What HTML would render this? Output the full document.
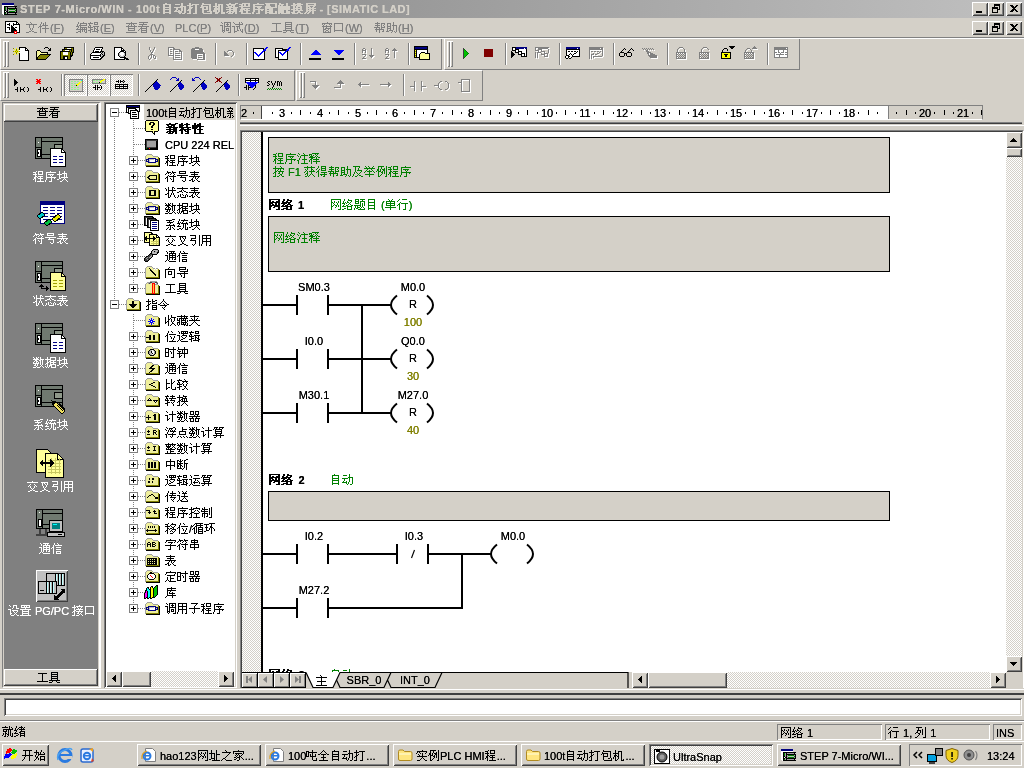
<!DOCTYPE html><html><head><meta charset="utf-8"><title>STEP 7-Micro/WIN</title><style>
html,body{margin:0;padding:0}
html,head,title,style,meta{font-family:"Liberation Sans",sans-serif}
body{width:1024px;height:768px;overflow:hidden;position:relative;background:#d4d0c8;font-family:"Liberation Sans",sans-serif;font-size:11px;line-height:12px;color:#000}
div,svg.i{position:absolute;box-sizing:border-box}
svg.i{overflow:visible}
svg{shape-rendering:crispEdges}
symbol path{stroke:currentColor;stroke-width:1;fill:none}
.c{width:12px;height:12px;vertical-align:top}
.cb{width:13px;height:12px;vertical-align:top}
.t{white-space:nowrap;line-height:12px;height:12px;text-shadow:0 0 0}
.b{font-weight:bold}
.rs{box-shadow:inset 1px 1px #fff,inset -1px -1px #404040,inset 2px 2px #d4d0c8,inset -2px -2px #808080;background:#d4d0c8}
.sk{box-shadow:inset 1px 1px #808080,inset -1px -1px #fff,inset 2px 2px #404040,inset -2px -2px #d4d0c8}
.r1{box-shadow:inset 1px 1px #fff,inset -1px -1px #808080}
.s1{box-shadow:inset 1px 1px #808080,inset -1px -1px #fff}
.dz{background:conic-gradient(#fff 25%,#d4d0c8 0 50%,#fff 0 75%,#d4d0c8 0) 0 0/2px 2px}
.gp{width:3px;height:24px;box-shadow:inset 1px 1px #fff,inset -1px -1px #808080}
.sp{width:2px;height:22px;border-left:1px solid #808080;border-right:1px solid #fff}
.ar{font-family:"Liberation Sans",sans-serif}
u{text-decoration:underline}
#w{left:0;top:0;width:1024px;height:768px;will-change:transform}
</style></head><body><svg width="0" height="0" style="position:absolute"><defs><symbol id="c4e2d" viewBox="0 0 12 12"><path d="M5 0.5h1M5 1.5h1M1 2.5h9M1 3.5h1M5 3.5h1M9 3.5h1M1 4.5h1M5 4.5h1M9 4.5h1M1 5.5h1M5 5.5h1M9 5.5h1M1 6.5h9M1 7.5h1M5 7.5h1M9 7.5h1M5 8.5h1M5 9.5h1M5 10.5h1"/></symbol><symbol id="c4e32" viewBox="0 0 12 12"><path d="M5 0.5h1M2 1.5h7M2 2.5h1M5 2.5h1M8 2.5h1M2 3.5h7M5 4.5h1M1 5.5h9M1 6.5h1M5 6.5h1M9 6.5h1M1 7.5h1M5 7.5h1M9 7.5h1M1 8.5h9M5 9.5h1M5 10.5h1"/></symbol><symbol id="c4e3b" viewBox="0 0 12 12"><path d="M4 0.5h1M5 1.5h1M0 2.5h11M5 3.5h1M5 4.5h1M5 5.5h1M1 6.5h9M5 7.5h1M5 8.5h1M5 9.5h1M0 10.5h11"/></symbol><symbol id="c4e3e" viewBox="0 0 12 12"><path d="M1 0.5h1M4 0.5h1M9 0.5h1M2 1.5h1M5 1.5h1M8 1.5h1M0 2.5h11M3 3.5h1M7 3.5h1M2 4.5h1M5 4.5h1M8 4.5h1M1 5.5h1M3 5.5h5M9 5.5h1M0 6.5h1M5 6.5h1M10 6.5h1M5 7.5h1M1 8.5h9M5 9.5h1M5 10.5h1"/></symbol><symbol id="c4e4b" viewBox="0 0 12 12"><path d="M4 0.5h1M5 1.5h1M1 2.5h9M8 3.5h1M7 4.5h1M6 5.5h1M5 6.5h1M4 7.5h1M2 8.5h2M1 9.5h1M4 9.5h1M0 10.5h1M5 10.5h6"/></symbol><symbol id="c4ea4" viewBox="0 0 12 12"><path d="M5 0.5h1M0 1.5h11M3 3.5h1M7 3.5h1M2 4.5h1M8 4.5h1M1 5.5h1M3 5.5h1M7 5.5h1M9 5.5h1M3 6.5h1M7 6.5h1M4 7.5h1M6 7.5h1M5 8.5h1M3 9.5h2M6 9.5h2M1 10.5h2M8 10.5h3"/></symbol><symbol id="c4ee4" viewBox="0 0 12 12"><path d="M5 0.5h1M5 1.5h1M4 2.5h1M6 2.5h1M3 3.5h1M7 3.5h1M2 4.5h1M5 4.5h1M8 4.5h1M0 5.5h2M6 5.5h1M9 5.5h2M2 6.5h7M7 7.5h1M4 8.5h1M6 8.5h1M5 9.5h1M6 10.5h1"/></symbol><symbol id="c4ef6" viewBox="0 0 12 12"><path d="M3 0.5h1M7 0.5h1M3 1.5h1M5 1.5h1M7 1.5h1M2 2.5h1M5 2.5h1M7 2.5h1M2 3.5h1M4 3.5h6M1 4.5h3M7 4.5h1M0 5.5h1M2 5.5h1M7 5.5h1M2 6.5h1M4 6.5h7M2 7.5h1M7 7.5h1M2 8.5h1M7 8.5h1M2 9.5h1M7 9.5h1M2 10.5h1M7 10.5h1"/></symbol><symbol id="c4f20" viewBox="0 0 12 12"><path d="M3 0.5h1M7 0.5h1M3 1.5h1M7 1.5h1M2 2.5h1M5 2.5h6M2 3.5h1M7 3.5h1M1 4.5h2M4 4.5h7M0 5.5h1M2 5.5h1M6 5.5h1M2 6.5h1M5 6.5h6M2 7.5h1M9 7.5h1M2 8.5h1M6 8.5h1M8 8.5h1M2 9.5h1M7 9.5h1M2 10.5h1M8 10.5h1"/></symbol><symbol id="c4f4d" viewBox="0 0 12 12"><path d="M3 0.5h1M6 0.5h1M3 1.5h1M7 1.5h1M2 2.5h1M2 3.5h1M4 3.5h7M1 4.5h2M0 5.5h1M2 5.5h1M5 5.5h1M9 5.5h1M2 6.5h1M6 6.5h1M9 6.5h1M2 7.5h1M6 7.5h1M8 7.5h1M2 8.5h1M8 8.5h1M2 9.5h1M7 9.5h1M2 10.5h1M4 10.5h7"/></symbol><symbol id="c4f8b" viewBox="0 0 12 12"><path d="M2 0.5h6M10 0.5h1M2 1.5h1M5 1.5h1M10 1.5h1M2 2.5h1M5 2.5h1M8 2.5h1M10 2.5h1M1 3.5h2M4 3.5h1M6 3.5h3M10 3.5h1M1 4.5h2M4 4.5h1M7 4.5h2M10 4.5h1M0 5.5h1M2 5.5h3M6 5.5h1M8 5.5h1M10 5.5h1M2 6.5h1M5 6.5h2M8 6.5h1M10 6.5h1M2 7.5h1M6 7.5h1M8 7.5h1M10 7.5h1M2 8.5h1M5 8.5h1M10 8.5h1M2 9.5h1M4 9.5h1M10 9.5h1M2 10.5h2M9 10.5h2"/></symbol><symbol id="c4fe1" viewBox="0 0 12 12"><path d="M3 0.5h1M6 0.5h1M3 1.5h1M7 1.5h1M2 2.5h1M4 2.5h7M2 3.5h1M1 4.5h2M5 4.5h5M0 5.5h1M2 5.5h1M2 6.5h1M5 6.5h5M2 7.5h1M2 8.5h1M5 8.5h5M2 9.5h1M5 9.5h1M9 9.5h1M2 10.5h1M5 10.5h5"/></symbol><symbol id="c5168" viewBox="0 0 12 12"><path d="M5 0.5h1M4 1.5h1M6 1.5h1M3 2.5h1M7 2.5h1M2 3.5h1M8 3.5h1M0 4.5h2M3 4.5h5M9 4.5h2M5 5.5h1M5 6.5h1M3 7.5h5M5 8.5h1M5 9.5h1M1 10.5h9"/></symbol><symbol id="c5177" viewBox="0 0 12 12"><path d="M2 0.5h7M2 1.5h1M8 1.5h1M2 2.5h7M2 3.5h1M8 3.5h1M2 4.5h7M2 5.5h1M8 5.5h1M2 6.5h7M2 7.5h1M8 7.5h1M0 8.5h11M3 9.5h1M7 9.5h1M0 10.5h3M8 10.5h3"/></symbol><symbol id="c5217" viewBox="0 0 12 12"><path d="M1 0.5h6M10 0.5h1M3 1.5h1M10 1.5h1M3 2.5h1M7 2.5h1M10 2.5h1M2 3.5h4M7 3.5h1M10 3.5h1M2 4.5h1M5 4.5h1M7 4.5h1M10 4.5h1M1 5.5h2M5 5.5h1M7 5.5h1M10 5.5h1M0 6.5h1M3 6.5h2M7 6.5h1M10 6.5h1M4 7.5h1M7 7.5h1M10 7.5h1M3 8.5h1M10 8.5h1M2 9.5h1M10 9.5h1M0 10.5h2M8 10.5h3"/></symbol><symbol id="c5236" viewBox="0 0 12 12"><path d="M3 0.5h1M10 0.5h1M1 1.5h1M3 1.5h1M8 1.5h1M10 1.5h1M1 2.5h6M8 2.5h1M10 2.5h1M0 3.5h1M3 3.5h1M8 3.5h1M10 3.5h1M0 4.5h7M8 4.5h1M10 4.5h1M3 5.5h1M8 5.5h1M10 5.5h1M1 6.5h6M8 6.5h1M10 6.5h1M1 7.5h1M3 7.5h1M6 7.5h1M8 7.5h1M10 7.5h1M1 8.5h1M3 8.5h1M6 8.5h1M10 8.5h1M1 9.5h1M3 9.5h1M5 9.5h2M10 9.5h1M3 10.5h1M8 10.5h3"/></symbol><symbol id="c52a8" viewBox="0 0 12 12"><path d="M7 0.5h1M1 1.5h4M7 1.5h1M7 2.5h1M6 3.5h5M0 4.5h6M7 4.5h1M10 4.5h1M2 5.5h1M7 5.5h1M10 5.5h1M2 6.5h1M7 6.5h1M10 6.5h1M1 7.5h1M4 7.5h1M7 7.5h1M10 7.5h1M0 8.5h5M6 8.5h1M10 8.5h1M4 9.5h1M6 9.5h1M10 9.5h1M5 10.5h1M8 10.5h2"/></symbol><symbol id="c52a9" viewBox="0 0 12 12"><path d="M7 0.5h1M1 1.5h4M7 1.5h1M1 2.5h1M4 2.5h1M7 2.5h1M1 3.5h1M4 3.5h1M6 3.5h5M1 4.5h4M7 4.5h1M10 4.5h1M1 5.5h1M4 5.5h1M7 5.5h1M10 5.5h1M1 6.5h4M7 6.5h1M10 6.5h1M1 7.5h1M4 7.5h1M7 7.5h1M10 7.5h1M1 8.5h1M3 8.5h4M10 8.5h1M0 9.5h3M6 9.5h1M8 9.5h1M10 9.5h1M5 10.5h1M9 10.5h1"/></symbol><symbol id="c5305" viewBox="0 0 12 12"><path d="M2 0.5h1M2 1.5h8M1 2.5h1M9 2.5h1M1 3.5h6M9 3.5h1M0 4.5h1M2 4.5h1M6 4.5h1M9 4.5h1M2 5.5h1M6 5.5h1M9 5.5h1M2 6.5h5M9 6.5h1M2 7.5h1M9 7.5h1M2 8.5h1M7 8.5h2M10 8.5h1M2 9.5h1M10 9.5h1M3 10.5h8"/></symbol><symbol id="c5355" viewBox="0 0 12 12"><path d="M3 0.5h1M7 0.5h1M4 1.5h1M6 1.5h1M1 2.5h9M1 3.5h1M5 3.5h1M9 3.5h1M1 4.5h9M1 5.5h1M5 5.5h1M9 5.5h1M1 6.5h9M5 7.5h1M0 8.5h11M5 9.5h1M5 10.5h1"/></symbol><symbol id="c53c9" viewBox="0 0 12 12"><path d="M2 1.5h7M3 2.5h1M5 2.5h1M8 2.5h1M3 3.5h1M6 3.5h1M8 3.5h1M3 4.5h1M7 4.5h1M4 5.5h1M7 5.5h1M4 6.5h1M6 6.5h1M5 7.5h1M5 8.5h2M3 9.5h2M7 9.5h2M1 10.5h2M9 10.5h2"/></symbol><symbol id="c53ca" viewBox="0 0 12 12"><path d="M1 0.5h7M3 1.5h1M7 1.5h1M3 2.5h1M6 2.5h1M3 3.5h1M6 3.5h1M3 4.5h1M5 4.5h5M3 5.5h1M9 5.5h1M2 6.5h1M4 6.5h1M8 6.5h1M2 7.5h1M5 7.5h1M7 7.5h1M1 8.5h1M6 8.5h1M1 9.5h1M5 9.5h1M7 9.5h2M0 10.5h1M3 10.5h2M9 10.5h2"/></symbol><symbol id="c53e3" viewBox="0 0 12 12"><path d="M1 1.5h9M1 2.5h1M9 2.5h1M1 3.5h1M9 3.5h1M1 4.5h1M9 4.5h1M1 5.5h1M9 5.5h1M1 6.5h1M9 6.5h1M1 7.5h1M9 7.5h1M1 8.5h9M1 9.5h1M9 9.5h1"/></symbol><symbol id="c53f7" viewBox="0 0 12 12"><path d="M2 0.5h7M2 1.5h1M8 1.5h1M2 2.5h7M0 4.5h11M4 5.5h1M3 6.5h6M8 7.5h1M8 8.5h1M5 9.5h1M8 9.5h1M6 10.5h2"/></symbol><symbol id="c5411" viewBox="0 0 12 12"><path d="M4 0.5h1M3 1.5h1M0 2.5h10M0 3.5h1M9 3.5h1M0 4.5h1M3 4.5h4M9 4.5h1M0 5.5h1M3 5.5h1M6 5.5h1M9 5.5h1M0 6.5h1M3 6.5h1M6 6.5h1M9 6.5h1M0 7.5h1M3 7.5h4M9 7.5h1M0 8.5h1M9 8.5h1M0 9.5h1M9 9.5h1M0 10.5h1M7 10.5h3"/></symbol><symbol id="c5428" viewBox="0 0 12 12"><path d="M6 0.5h1M0 1.5h3M6 1.5h1M0 2.5h1M2 2.5h9M0 3.5h1M2 3.5h1M6 3.5h1M0 4.5h1M2 4.5h1M4 4.5h1M6 4.5h1M9 4.5h1M0 5.5h1M2 5.5h1M4 5.5h1M6 5.5h1M9 5.5h1M0 6.5h3M4 6.5h6M6 7.5h1M6 8.5h1M10 8.5h1M6 9.5h1M10 9.5h1M7 10.5h4"/></symbol><symbol id="c5668" viewBox="0 0 12 12"><path d="M1 0.5h4M6 0.5h4M1 1.5h1M4 1.5h1M6 1.5h1M9 1.5h1M1 2.5h1M4 2.5h1M6 2.5h1M9 2.5h1M1 3.5h4M6 3.5h4M5 4.5h1M8 4.5h1M0 5.5h11M3 6.5h1M7 6.5h1M0 7.5h5M6 7.5h5M1 8.5h1M4 8.5h1M6 8.5h1M9 8.5h1M1 9.5h1M4 9.5h1M6 9.5h1M9 9.5h1M1 10.5h4M6 10.5h4"/></symbol><symbol id="c5740" viewBox="0 0 12 12"><path d="M2 0.5h1M7 0.5h1M2 1.5h1M7 1.5h1M2 2.5h1M7 2.5h1M0 3.5h6M7 3.5h1M2 4.5h1M5 4.5h1M7 4.5h4M2 5.5h1M5 5.5h1M7 5.5h1M2 6.5h1M5 6.5h1M7 6.5h1M2 7.5h1M5 7.5h1M7 7.5h1M2 8.5h4M7 8.5h1M0 9.5h2M5 9.5h1M7 9.5h1M3 10.5h8"/></symbol><symbol id="c5757" viewBox="0 0 12 12"><path d="M2 0.5h1M7 0.5h1M2 1.5h1M7 1.5h1M2 2.5h1M5 2.5h5M0 3.5h5M7 3.5h1M9 3.5h1M2 4.5h1M7 4.5h1M9 4.5h1M2 5.5h1M7 5.5h1M9 5.5h1M2 6.5h1M4 6.5h7M2 7.5h2M7 7.5h1M0 8.5h2M6 8.5h1M8 8.5h1M5 9.5h1M9 9.5h1M3 10.5h2M10 10.5h1"/></symbol><symbol id="c5939" viewBox="0 0 12 12"><path d="M5 0.5h1M1 1.5h9M5 2.5h1M2 3.5h1M5 3.5h1M8 3.5h1M3 4.5h1M5 4.5h1M7 4.5h1M0 5.5h11M5 6.5h1M4 7.5h1M6 7.5h1M3 8.5h1M7 8.5h1M2 9.5h1M8 9.5h1M0 10.5h2M9 10.5h2"/></symbol><symbol id="c59cb" viewBox="0 0 12 12"><path d="M2 0.5h1M7 0.5h1M2 1.5h1M7 1.5h1M0 2.5h5M6 2.5h1M9 2.5h1M2 3.5h1M4 3.5h1M6 3.5h1M10 3.5h1M2 4.5h1M4 4.5h7M1 5.5h1M4 5.5h1M1 6.5h1M3 6.5h1M6 6.5h5M2 7.5h2M6 7.5h1M10 7.5h1M2 8.5h1M4 8.5h1M6 8.5h1M10 8.5h1M1 9.5h1M4 9.5h1M6 9.5h5M0 10.5h1M6 10.5h1M10 10.5h1"/></symbol><symbol id="c5b50" viewBox="0 0 12 12"><path d="M2 0.5h7M7 1.5h1M6 2.5h1M5 3.5h1M5 4.5h1M0 5.5h11M5 6.5h1M5 7.5h1M5 8.5h1M3 9.5h1M5 9.5h1M4 10.5h1"/></symbol><symbol id="c5b57" viewBox="0 0 12 12"><path d="M5 0.5h1M1 1.5h10M1 2.5h1M10 2.5h1M0 3.5h1M3 3.5h5M9 3.5h1M6 4.5h1M5 5.5h1M0 6.5h11M5 7.5h1M5 8.5h1M5 9.5h1M3 10.5h3"/></symbol><symbol id="c5b9a" viewBox="0 0 12 12"><path d="M5 0.5h1M1 1.5h10M1 2.5h1M10 2.5h1M0 3.5h1M9 3.5h1M2 4.5h8M5 5.5h1M2 6.5h1M5 6.5h1M2 7.5h1M5 7.5h4M2 8.5h1M5 8.5h1M1 9.5h1M3 9.5h1M5 9.5h1M0 10.5h1M4 10.5h7"/></symbol><symbol id="c5b9e" viewBox="0 0 12 12"><path d="M6 0.5h1M1 1.5h10M1 2.5h1M3 2.5h1M10 2.5h1M0 3.5h1M4 3.5h1M6 3.5h1M9 3.5h1M2 4.5h1M6 4.5h1M3 5.5h1M6 5.5h1M1 6.5h10M6 7.5h1M5 8.5h1M7 8.5h1M4 9.5h1M8 9.5h1M1 10.5h3M9 10.5h2"/></symbol><symbol id="c5bb6" viewBox="0 0 12 12"><path d="M5 0.5h1M0 1.5h11M0 2.5h1M10 2.5h1M0 3.5h1M2 3.5h7M10 3.5h1M3 4.5h1M5 4.5h1M9 4.5h1M2 5.5h1M4 5.5h1M6 5.5h1M8 5.5h1M3 6.5h1M6 6.5h2M1 7.5h2M4 7.5h3M8 7.5h1M3 8.5h1M6 8.5h1M9 8.5h1M1 9.5h2M6 9.5h1M10 9.5h1M4 10.5h2"/></symbol><symbol id="c5bfc" viewBox="0 0 12 12"><path d="M2 0.5h7M2 1.5h1M8 1.5h1M2 2.5h7M10 2.5h1M2 3.5h1M10 3.5h1M3 4.5h8M7 5.5h1M0 6.5h11M3 7.5h1M7 7.5h1M4 8.5h1M7 8.5h1M4 9.5h1M7 9.5h1M6 10.5h2"/></symbol><symbol id="c5c31" viewBox="0 0 12 12"><path d="M3 0.5h1M7 0.5h1M0 1.5h6M7 1.5h1M9 1.5h1M7 2.5h1M10 2.5h1M1 3.5h10M1 4.5h1M4 4.5h1M6 4.5h1M8 4.5h1M1 5.5h4M6 5.5h1M8 5.5h1M3 6.5h1M6 6.5h1M8 6.5h1M1 7.5h1M3 7.5h2M6 7.5h1M8 7.5h1M10 7.5h1M1 8.5h1M3 8.5h1M5 8.5h2M8 8.5h1M10 8.5h1M0 9.5h1M3 9.5h1M6 9.5h1M8 9.5h1M10 9.5h1M2 10.5h2M5 10.5h1M9 10.5h2"/></symbol><symbol id="c5c4f" viewBox="0 0 12 12"><path d="M2 0.5h9M2 1.5h1M10 1.5h1M2 2.5h9M2 3.5h1M4 3.5h1M9 3.5h1M2 4.5h1M5 4.5h1M8 4.5h1M2 5.5h9M2 6.5h1M5 6.5h1M8 6.5h1M2 7.5h9M2 8.5h1M5 8.5h1M8 8.5h1M1 9.5h1M4 9.5h1M8 9.5h1M0 10.5h1M3 10.5h1M8 10.5h1"/></symbol><symbol id="c5de5" viewBox="0 0 12 12"><path d="M1 1.5h9M5 2.5h1M5 3.5h1M5 4.5h1M5 5.5h1M5 6.5h1M5 7.5h1M5 8.5h1M0 9.5h11"/></symbol><symbol id="c5e2e" viewBox="0 0 12 12"><path d="M3 0.5h1M1 1.5h5M7 1.5h4M3 2.5h1M7 2.5h1M10 2.5h1M1 3.5h5M7 3.5h1M9 3.5h1M3 4.5h1M7 4.5h1M10 4.5h1M0 5.5h6M7 5.5h4M2 6.5h1M5 6.5h1M7 6.5h1M1 7.5h9M2 8.5h1M5 8.5h1M9 8.5h1M2 9.5h1M5 9.5h1M8 9.5h2M5 10.5h1"/></symbol><symbol id="c5e8f" viewBox="0 0 12 12"><path d="M5 0.5h1M1 1.5h10M1 2.5h1M1 3.5h1M3 3.5h6M1 4.5h1M5 4.5h1M7 4.5h1M1 5.5h1M6 5.5h1M1 6.5h10M1 7.5h1M6 7.5h1M9 7.5h1M1 8.5h1M6 8.5h1M0 9.5h1M6 9.5h1M0 10.5h1M4 10.5h3"/></symbol><symbol id="c5e93" viewBox="0 0 12 12"><path d="M6 0.5h1M2 1.5h9M2 2.5h1M6 2.5h1M2 3.5h9M2 4.5h1M5 4.5h1M2 5.5h1M4 5.5h1M7 5.5h1M2 6.5h1M4 6.5h6M2 7.5h1M7 7.5h1M2 8.5h9M1 9.5h1M7 9.5h1M0 10.5h1M7 10.5h1"/></symbol><symbol id="c5f00" viewBox="0 0 12 12"><path d="M1 0.5h9M3 1.5h1M7 1.5h1M3 2.5h1M7 2.5h1M3 3.5h1M7 3.5h1M3 4.5h1M7 4.5h1M0 5.5h11M3 6.5h1M7 6.5h1M2 7.5h1M7 7.5h1M2 8.5h1M7 8.5h1M1 9.5h1M7 9.5h1M0 10.5h1M7 10.5h1"/></symbol><symbol id="c5f15" viewBox="0 0 12 12"><path d="M1 0.5h6M10 0.5h1M6 1.5h1M10 1.5h1M6 2.5h1M10 2.5h1M2 3.5h5M10 3.5h1M2 4.5h1M10 4.5h1M1 5.5h6M10 5.5h1M6 6.5h1M10 6.5h1M6 7.5h1M10 7.5h1M6 8.5h1M10 8.5h1M3 9.5h1M5 9.5h1M10 9.5h1M4 10.5h1M10 10.5h1"/></symbol><symbol id="c5f97" viewBox="0 0 12 12"><path d="M2 0.5h1M5 0.5h5M2 1.5h1M5 1.5h1M9 1.5h1M1 2.5h1M5 2.5h5M0 3.5h1M3 3.5h1M5 3.5h1M9 3.5h1M2 4.5h1M5 4.5h5M1 5.5h2M0 6.5h1M2 6.5h1M5 6.5h6M2 7.5h1M8 7.5h1M2 8.5h1M4 8.5h7M2 9.5h1M5 9.5h1M8 9.5h1M2 10.5h1M7 10.5h2"/></symbol><symbol id="c5faa" viewBox="0 0 12 12"><path d="M3 0.5h8M2 1.5h1M4 1.5h1M8 1.5h1M1 2.5h1M4 2.5h7M0 3.5h1M3 3.5h2M8 3.5h1M2 4.5h1M4 4.5h1M6 4.5h5M1 5.5h2M4 5.5h1M6 5.5h1M10 5.5h1M0 6.5h1M2 6.5h1M4 6.5h1M6 6.5h5M2 7.5h1M4 7.5h1M6 7.5h1M10 7.5h1M2 8.5h1M4 8.5h1M6 8.5h5M2 9.5h1M4 9.5h1M6 9.5h1M10 9.5h1M2 10.5h2M6 10.5h5"/></symbol><symbol id="c6001" viewBox="0 0 12 12"><path d="M5 0.5h1M0 1.5h11M5 2.5h1M4 3.5h1M6 3.5h1M2 4.5h3M7 4.5h2M0 5.5h2M5 5.5h1M9 5.5h2M3 7.5h1M5 7.5h1M9 7.5h1M1 8.5h1M3 8.5h1M6 8.5h1M8 8.5h1M10 8.5h1M1 9.5h1M3 9.5h1M8 9.5h1M10 9.5h1M0 10.5h1M4 10.5h5"/></symbol><symbol id="c6027" viewBox="0 0 12 12"><path d="M2 0.5h1M7 0.5h1M2 1.5h1M5 1.5h1M7 1.5h1M0 2.5h1M2 2.5h2M5 2.5h1M7 2.5h1M0 3.5h1M2 3.5h1M4 3.5h7M0 4.5h1M2 4.5h1M4 4.5h1M7 4.5h1M0 5.5h1M2 5.5h2M7 5.5h1M2 6.5h1M5 6.5h5M2 7.5h1M7 7.5h1M2 8.5h1M7 8.5h1M2 9.5h1M7 9.5h1M2 10.5h1M4 10.5h7"/></symbol><symbol id="c6253" viewBox="0 0 12 12"><path d="M2 0.5h1M2 1.5h1M5 1.5h6M0 2.5h5M8 2.5h1M2 3.5h1M8 3.5h1M2 4.5h1M4 4.5h1M8 4.5h1M2 5.5h2M8 5.5h1M1 6.5h2M8 6.5h1M0 7.5h1M2 7.5h1M8 7.5h1M2 8.5h1M8 8.5h1M2 9.5h1M8 9.5h1M0 10.5h3M6 10.5h3"/></symbol><symbol id="c6307" viewBox="0 0 12 12"><path d="M2 0.5h1M6 0.5h1M2 1.5h1M6 1.5h1M9 1.5h2M0 2.5h5M6 2.5h3M2 3.5h1M6 3.5h1M10 3.5h1M2 4.5h1M4 4.5h1M6 4.5h5M2 5.5h2M1 6.5h2M6 6.5h5M0 7.5h1M2 7.5h1M6 7.5h1M10 7.5h1M2 8.5h1M6 8.5h5M2 9.5h1M6 9.5h1M10 9.5h1M0 10.5h3M6 10.5h5"/></symbol><symbol id="c6309" viewBox="0 0 12 12"><path d="M2 0.5h1M7 0.5h1M2 1.5h1M8 1.5h1M0 2.5h11M2 3.5h1M5 3.5h1M7 3.5h1M10 3.5h1M2 4.5h1M4 4.5h1M7 4.5h1M2 5.5h2M5 5.5h6M1 6.5h2M6 6.5h1M9 6.5h1M0 7.5h1M2 7.5h1M5 7.5h2M9 7.5h1M2 8.5h1M7 8.5h2M2 9.5h1M6 9.5h1M8 9.5h1M0 10.5h3M4 10.5h2M9 10.5h2"/></symbol><symbol id="c6362" viewBox="0 0 12 12"><path d="M2 0.5h1M6 0.5h1M2 1.5h1M6 1.5h4M0 2.5h6M8 2.5h1M2 3.5h1M5 3.5h5M2 4.5h1M4 4.5h2M7 4.5h1M9 4.5h1M2 5.5h2M5 5.5h1M7 5.5h1M9 5.5h1M1 6.5h2M4 6.5h7M0 7.5h1M2 7.5h1M7 7.5h1M2 8.5h1M6 8.5h1M8 8.5h1M2 9.5h1M5 9.5h1M9 9.5h1M0 10.5h3M4 10.5h1M10 10.5h1"/></symbol><symbol id="c636e" viewBox="0 0 12 12"><path d="M2 0.5h1M5 0.5h6M2 1.5h1M5 1.5h1M10 1.5h1M0 2.5h6M10 2.5h1M2 3.5h1M5 3.5h6M2 4.5h1M4 4.5h2M8 4.5h1M2 5.5h2M5 5.5h6M1 6.5h2M5 6.5h1M8 6.5h1M0 7.5h1M2 7.5h1M5 7.5h6M2 8.5h1M4 8.5h3M10 8.5h1M0 9.5h1M2 9.5h1M4 9.5h1M6 9.5h1M10 9.5h1M1 10.5h1M3 10.5h1M6 10.5h5"/></symbol><symbol id="c63a5" viewBox="0 0 12 12"><path d="M2 0.5h1M7 0.5h1M2 1.5h1M4 1.5h7M0 2.5h4M5 2.5h1M9 2.5h1M2 3.5h1M6 3.5h1M8 3.5h1M2 4.5h1M4 4.5h7M2 5.5h2M7 5.5h1M1 6.5h2M4 6.5h7M0 7.5h1M2 7.5h1M6 7.5h1M9 7.5h1M2 8.5h1M5 8.5h2M8 8.5h1M2 9.5h1M7 9.5h1M9 9.5h1M0 10.5h3M4 10.5h3M10 10.5h1"/></symbol><symbol id="c63a7" viewBox="0 0 12 12"><path d="M2 0.5h1M7 0.5h1M2 1.5h1M4 1.5h7M0 2.5h5M10 2.5h1M2 3.5h1M6 3.5h1M8 3.5h1M2 4.5h1M5 4.5h1M9 4.5h1M2 5.5h3M10 5.5h1M1 6.5h2M5 6.5h5M0 7.5h1M2 7.5h1M7 7.5h1M2 8.5h1M7 8.5h1M2 9.5h1M7 9.5h1M0 10.5h3M4 10.5h7"/></symbol><symbol id="c6478" viewBox="0 0 12 12"><path d="M2 0.5h1M6 0.5h1M8 0.5h1M2 1.5h1M4 1.5h7M0 2.5h4M6 2.5h1M8 2.5h1M2 3.5h1M5 3.5h5M2 4.5h1M5 4.5h1M9 4.5h1M2 5.5h2M5 5.5h5M0 6.5h3M5 6.5h1M9 6.5h1M2 7.5h9M2 8.5h1M7 8.5h1M0 9.5h1M2 9.5h1M6 9.5h1M8 9.5h1M1 10.5h2M4 10.5h2M9 10.5h2"/></symbol><symbol id="c6536" viewBox="0 0 12 12"><path d="M3 0.5h1M6 0.5h1M3 1.5h1M6 1.5h1M0 2.5h1M3 2.5h1M6 2.5h5M0 3.5h1M3 3.5h1M5 3.5h1M9 3.5h1M0 4.5h1M3 4.5h2M6 4.5h1M9 4.5h1M0 5.5h1M3 5.5h1M6 5.5h1M9 5.5h1M0 6.5h1M2 6.5h2M6 6.5h1M8 6.5h1M0 7.5h2M3 7.5h1M7 7.5h1M0 8.5h1M3 8.5h1M7 8.5h2M3 9.5h1M6 9.5h1M9 9.5h1M3 10.5h1M5 10.5h1M10 10.5h1"/></symbol><symbol id="c6570" viewBox="0 0 12 12"><path d="M0 0.5h1M3 0.5h1M5 0.5h1M7 0.5h1M1 1.5h1M3 1.5h2M7 1.5h1M0 2.5h6M7 2.5h4M2 3.5h2M6 3.5h2M9 3.5h1M1 4.5h1M3 4.5h2M7 4.5h1M9 4.5h1M0 5.5h1M3 5.5h1M5 5.5h1M7 5.5h1M9 5.5h1M0 6.5h6M7 6.5h1M9 6.5h1M2 7.5h1M4 7.5h1M7 7.5h1M9 7.5h1M1 8.5h2M4 8.5h1M8 8.5h1M3 9.5h1M7 9.5h1M9 9.5h1M0 10.5h3M4 10.5h3M10 10.5h1"/></symbol><symbol id="c6574" viewBox="0 0 12 12"><path d="M3 0.5h1M7 0.5h1M0 1.5h11M1 2.5h1M3 2.5h1M5 2.5h1M7 2.5h1M9 2.5h1M1 3.5h5M8 3.5h1M2 4.5h3M7 4.5h1M9 4.5h1M1 5.5h1M3 5.5h1M5 5.5h2M10 5.5h1M1 6.5h9M5 7.5h1M2 8.5h1M5 8.5h4M2 9.5h1M5 9.5h1M0 10.5h11"/></symbol><symbol id="c6587" viewBox="0 0 12 12"><path d="M4 0.5h1M5 1.5h1M0 2.5h11M3 3.5h1M7 3.5h1M3 4.5h1M7 4.5h1M3 5.5h1M7 5.5h1M4 6.5h1M6 6.5h1M4 7.5h1M6 7.5h1M5 8.5h1M3 9.5h2M6 9.5h2M0 10.5h3M8 10.5h3"/></symbol><symbol id="c65ad" viewBox="0 0 12 12"><path d="M3 0.5h1M9 0.5h2M0 1.5h2M3 1.5h1M5 1.5h1M7 1.5h2M0 2.5h1M2 2.5h3M7 2.5h1M0 3.5h1M3 3.5h1M7 3.5h1M0 4.5h6M7 4.5h4M0 5.5h1M2 5.5h2M7 5.5h1M9 5.5h1M0 6.5h2M3 6.5h2M7 6.5h1M9 6.5h1M0 7.5h2M3 7.5h1M5 7.5h1M7 7.5h1M9 7.5h1M0 8.5h1M3 8.5h1M7 8.5h1M9 8.5h1M0 9.5h5M6 9.5h1M9 9.5h1M5 10.5h1M9 10.5h1"/></symbol><symbol id="c65b0" viewBox="0 0 12 12"><path d="M3 0.5h1M9 0.5h2M0 1.5h6M7 1.5h2M1 2.5h1M5 2.5h1M7 2.5h1M2 3.5h1M4 3.5h1M7 3.5h1M0 4.5h6M7 4.5h4M3 5.5h1M7 5.5h1M9 5.5h1M0 6.5h6M7 6.5h1M9 6.5h1M3 7.5h1M7 7.5h1M9 7.5h1M1 8.5h1M3 8.5h1M5 8.5h1M7 8.5h1M9 8.5h1M0 9.5h1M3 9.5h1M6 9.5h1M9 9.5h1M2 10.5h2M5 10.5h1M9 10.5h1"/></symbol><symbol id="c65f6" viewBox="0 0 12 12"><path d="M8 0.5h1M0 1.5h4M8 1.5h1M0 2.5h1M3 2.5h8M0 3.5h1M3 3.5h1M8 3.5h1M0 4.5h1M3 4.5h1M5 4.5h1M8 4.5h1M0 5.5h4M6 5.5h1M8 5.5h1M0 6.5h1M3 6.5h1M6 6.5h1M8 6.5h1M0 7.5h1M3 7.5h1M8 7.5h1M0 8.5h1M3 8.5h1M8 8.5h1M0 9.5h4M8 9.5h1M6 10.5h3"/></symbol><symbol id="c673a" viewBox="0 0 12 12"><path d="M2 0.5h1M2 1.5h1M5 1.5h4M2 2.5h1M5 2.5h1M8 2.5h1M0 3.5h6M8 3.5h1M2 4.5h1M5 4.5h1M8 4.5h1M1 5.5h3M5 5.5h1M8 5.5h1M1 6.5h2M4 6.5h2M8 6.5h1M0 7.5h1M2 7.5h1M5 7.5h1M8 7.5h1M0 8.5h1M2 8.5h1M5 8.5h1M8 8.5h1M2 9.5h1M4 9.5h1M8 9.5h1M10 9.5h1M2 10.5h2M8 10.5h3"/></symbol><symbol id="c67e5" viewBox="0 0 12 12"><path d="M5 0.5h1M0 1.5h11M3 2.5h1M5 2.5h1M7 2.5h1M2 3.5h1M5 3.5h1M8 3.5h1M0 4.5h11M2 5.5h1M8 5.5h1M2 6.5h7M2 7.5h1M8 7.5h1M2 8.5h7M0 10.5h11"/></symbol><symbol id="c6bd4" viewBox="0 0 12 12"><path d="M1 0.5h1M6 0.5h1M1 1.5h1M6 1.5h1M1 2.5h1M6 2.5h1M9 2.5h1M1 3.5h1M6 3.5h1M8 3.5h1M1 4.5h4M6 4.5h2M1 5.5h1M6 5.5h1M1 6.5h1M6 6.5h1M1 7.5h1M6 7.5h1M1 8.5h1M3 8.5h2M6 8.5h1M10 8.5h1M1 9.5h2M6 9.5h1M10 9.5h1M1 10.5h1M7 10.5h4"/></symbol><symbol id="c6ce8" viewBox="0 0 12 12"><path d="M1 0.5h1M6 0.5h1M2 1.5h1M7 1.5h1M0 2.5h1M4 2.5h7M1 3.5h1M3 3.5h1M7 3.5h1M3 4.5h1M7 4.5h1M2 5.5h1M7 5.5h1M2 6.5h1M5 6.5h5M0 7.5h2M7 7.5h1M1 8.5h1M7 8.5h1M1 9.5h1M7 9.5h1M1 10.5h1M4 10.5h7"/></symbol><symbol id="c6d6e" viewBox="0 0 12 12"><path d="M1 0.5h1M8 0.5h2M2 1.5h1M4 1.5h4M10 1.5h1M0 2.5h1M4 2.5h1M6 2.5h1M10 2.5h1M1 3.5h1M3 3.5h1M5 3.5h1M7 3.5h1M9 3.5h1M3 4.5h1M5 4.5h6M2 5.5h1M8 5.5h1M2 6.5h1M7 6.5h1M0 7.5h2M3 7.5h8M1 8.5h1M7 8.5h1M1 9.5h1M5 9.5h1M7 9.5h1M1 10.5h1M6 10.5h1"/></symbol><symbol id="c70b9" viewBox="0 0 12 12"><path d="M5 0.5h1M5 1.5h1M5 2.5h5M5 3.5h1M2 4.5h7M2 5.5h1M8 5.5h1M2 6.5h1M8 6.5h1M2 7.5h7M1 9.5h1M3 9.5h1M6 9.5h1M9 9.5h1M0 10.5h1M4 10.5h1M7 10.5h1M10 10.5h1"/></symbol><symbol id="c7279" viewBox="0 0 12 12"><path d="M2 0.5h1M7 0.5h1M0 1.5h1M2 1.5h1M5 1.5h5M0 2.5h4M7 2.5h1M0 3.5h1M2 3.5h1M7 3.5h1M0 4.5h1M2 4.5h1M4 4.5h7M2 5.5h2M8 5.5h1M1 6.5h2M4 6.5h7M0 7.5h1M2 7.5h1M5 7.5h1M8 7.5h1M2 8.5h1M6 8.5h1M8 8.5h1M2 9.5h1M8 9.5h1M2 10.5h1M6 10.5h3"/></symbol><symbol id="c72b6" viewBox="0 0 12 12"><path d="M3 0.5h1M7 0.5h2M0 1.5h1M3 1.5h1M7 1.5h1M9 1.5h1M1 2.5h1M3 2.5h1M7 2.5h1M1 3.5h1M3 3.5h8M3 4.5h1M7 4.5h1M3 5.5h1M7 5.5h1M2 6.5h2M6 6.5h1M8 6.5h1M0 7.5h2M3 7.5h1M6 7.5h1M8 7.5h1M3 8.5h1M5 8.5h1M9 8.5h1M3 9.5h1M5 9.5h1M9 9.5h1M3 10.5h2M10 10.5h1"/></symbol><symbol id="c73af" viewBox="0 0 12 12"><path d="M5 0.5h6M0 1.5h5M7 1.5h1M2 2.5h1M7 2.5h1M2 3.5h1M6 3.5h2M1 4.5h3M6 4.5h3M2 5.5h1M5 5.5h1M7 5.5h1M9 5.5h1M2 6.5h1M5 6.5h1M7 6.5h1M10 6.5h1M2 7.5h3M7 7.5h1M10 7.5h1M0 8.5h2M7 8.5h1M7 9.5h1M7 10.5h1"/></symbol><symbol id="c7528" viewBox="0 0 12 12"><path d="M1 0.5h9M1 1.5h1M5 1.5h1M9 1.5h1M1 2.5h1M5 2.5h1M9 2.5h1M1 3.5h9M1 4.5h1M5 4.5h1M9 4.5h1M1 5.5h1M5 5.5h1M9 5.5h1M1 6.5h9M1 7.5h1M5 7.5h1M9 7.5h1M1 8.5h1M5 8.5h1M9 8.5h1M0 9.5h1M5 9.5h1M9 9.5h1M0 10.5h1M5 10.5h1M8 10.5h2"/></symbol><symbol id="c76ee" viewBox="0 0 12 12"><path d="M2 0.5h7M2 1.5h1M8 1.5h1M2 2.5h1M8 2.5h1M2 3.5h7M2 4.5h1M8 4.5h1M2 5.5h1M8 5.5h1M2 6.5h7M2 7.5h1M8 7.5h1M2 8.5h1M8 8.5h1M2 9.5h7M2 10.5h1M8 10.5h1"/></symbol><symbol id="c770b" viewBox="0 0 12 12"><path d="M1 0.5h9M5 1.5h1M1 2.5h8M4 3.5h1M0 4.5h11M3 5.5h1M8 5.5h1M2 6.5h7M1 7.5h1M3 7.5h1M8 7.5h1M0 8.5h1M3 8.5h6M3 9.5h1M8 9.5h1M3 10.5h6"/></symbol><symbol id="c79fb" viewBox="0 0 12 12"><path d="M3 0.5h1M7 0.5h1M0 1.5h3M6 1.5h5M2 2.5h1M5 2.5h1M10 2.5h1M0 3.5h5M6 3.5h1M9 3.5h1M2 4.5h1M7 4.5h2M2 5.5h2M5 5.5h2M8 5.5h1M2 6.5h1M4 6.5h1M7 6.5h4M1 7.5h2M6 7.5h1M10 7.5h1M0 8.5h1M2 8.5h1M5 8.5h1M7 8.5h1M9 8.5h1M2 9.5h1M8 9.5h1M2 10.5h1M5 10.5h3"/></symbol><symbol id="c7a0b" viewBox="0 0 12 12"><path d="M3 0.5h1M5 0.5h5M0 1.5h3M5 1.5h1M9 1.5h1M2 2.5h1M5 2.5h1M9 2.5h1M0 3.5h4M5 3.5h5M2 4.5h1M2 5.5h2M5 5.5h5M1 6.5h2M4 6.5h1M7 6.5h1M1 7.5h2M5 7.5h5M0 8.5h1M2 8.5h1M7 8.5h1M2 9.5h1M7 9.5h1M2 10.5h1M4 10.5h7"/></symbol><symbol id="c7a97" viewBox="0 0 12 12"><path d="M6 0.5h1M1 1.5h10M1 2.5h1M3 2.5h1M8 2.5h1M10 2.5h1M2 3.5h1M5 3.5h1M9 3.5h1M1 4.5h10M2 5.5h1M5 5.5h1M9 5.5h1M2 6.5h1M4 6.5h6M2 7.5h3M7 7.5h1M9 7.5h1M2 8.5h1M5 8.5h2M9 8.5h1M2 9.5h1M4 9.5h1M7 9.5h1M9 9.5h1M2 10.5h8"/></symbol><symbol id="c7b26" viewBox="0 0 12 12"><path d="M2 0.5h1M7 0.5h1M2 1.5h4M7 1.5h4M1 2.5h1M3 2.5h1M6 2.5h1M8 2.5h1M0 3.5h1M5 3.5h1M9 3.5h1M3 4.5h1M8 4.5h1M2 5.5h1M4 5.5h7M1 6.5h2M8 6.5h1M0 7.5h1M2 7.5h1M5 7.5h1M8 7.5h1M2 8.5h1M6 8.5h1M8 8.5h1M2 9.5h1M8 9.5h1M2 10.5h1M7 10.5h2"/></symbol><symbol id="c7b97" viewBox="0 0 12 12"><path d="M1 0.5h4M6 0.5h5M1 1.5h1M3 1.5h1M6 1.5h1M9 1.5h1M0 2.5h1M2 2.5h7M2 3.5h1M8 3.5h1M2 4.5h7M2 5.5h1M8 5.5h1M2 6.5h7M3 7.5h1M7 7.5h1M0 8.5h11M3 9.5h1M7 9.5h1M1 10.5h2M7 10.5h1"/></symbol><symbol id="c7cfb" viewBox="0 0 12 12"><path d="M7 0.5h3M1 1.5h6M4 2.5h1M8 2.5h1M2 3.5h6M5 4.5h1M4 5.5h1M8 5.5h1M1 6.5h9M5 7.5h1M9 7.5h1M3 8.5h1M5 8.5h1M7 8.5h1M2 9.5h1M5 9.5h1M8 9.5h1M1 10.5h1M4 10.5h2M9 10.5h1"/></symbol><symbol id="c7edc" viewBox="0 0 12 12"><path d="M2 0.5h1M6 0.5h1M2 1.5h1M6 1.5h4M1 2.5h1M5 2.5h1M9 2.5h1M1 3.5h1M3 3.5h1M5 3.5h2M8 3.5h1M0 4.5h3M4 4.5h1M7 4.5h1M2 5.5h1M6 5.5h1M8 5.5h1M1 6.5h1M4 6.5h2M9 6.5h2M0 7.5h4M5 7.5h5M5 8.5h1M9 8.5h1M2 9.5h2M5 9.5h1M9 9.5h1M0 10.5h2M5 10.5h5"/></symbol><symbol id="c7edf" viewBox="0 0 12 12"><path d="M2 0.5h1M7 0.5h1M2 1.5h1M4 1.5h7M1 2.5h1M6 2.5h1M1 3.5h1M3 3.5h1M5 3.5h1M9 3.5h1M0 4.5h3M4 4.5h7M2 5.5h1M6 5.5h1M8 5.5h1M10 5.5h1M1 6.5h1M6 6.5h1M8 6.5h1M0 7.5h4M6 7.5h1M8 7.5h1M6 8.5h1M8 8.5h1M10 8.5h1M2 9.5h2M5 9.5h1M8 9.5h1M10 9.5h1M0 10.5h2M4 10.5h1M8 10.5h3"/></symbol><symbol id="c7eea" viewBox="0 0 12 12"><path d="M2 0.5h1M7 0.5h1M2 1.5h1M5 1.5h4M10 1.5h1M1 2.5h1M4 2.5h1M7 2.5h1M9 2.5h1M1 3.5h1M3 3.5h1M5 3.5h6M0 4.5h3M7 4.5h1M2 5.5h1M6 5.5h5M1 6.5h1M5 6.5h2M10 6.5h1M0 7.5h4M6 7.5h5M4 8.5h1M6 8.5h1M10 8.5h1M2 9.5h2M6 9.5h5M0 10.5h2M6 10.5h1M10 10.5h1"/></symbol><symbol id="c7f16" viewBox="0 0 12 12"><path d="M2 0.5h1M7 0.5h1M2 1.5h1M4 1.5h7M1 2.5h1M4 2.5h1M10 2.5h1M1 3.5h1M3 3.5h8M0 4.5h3M4 4.5h1M2 5.5h1M4 5.5h7M1 6.5h1M4 6.5h1M6 6.5h1M8 6.5h1M10 6.5h1M0 7.5h11M4 8.5h1M6 8.5h1M8 8.5h1M10 8.5h1M2 9.5h3M6 9.5h1M8 9.5h1M10 9.5h1M0 10.5h2M4 10.5h1M9 10.5h2"/></symbol><symbol id="c7f51" viewBox="0 0 12 12"><path d="M1 0.5h10M1 1.5h1M10 1.5h1M1 2.5h1M4 2.5h1M8 2.5h1M10 2.5h1M1 3.5h2M4 3.5h1M6 3.5h1M8 3.5h1M10 3.5h1M1 4.5h1M3 4.5h1M7 4.5h1M10 4.5h1M1 5.5h1M4 5.5h1M7 5.5h1M10 5.5h1M1 6.5h1M3 6.5h1M5 6.5h2M8 6.5h1M10 6.5h1M1 7.5h2M6 7.5h1M8 7.5h1M10 7.5h1M1 8.5h1M5 8.5h1M10 8.5h1M1 9.5h1M10 9.5h1M1 10.5h1M8 10.5h3"/></symbol><symbol id="c7f6e" viewBox="0 0 12 12"><path d="M1 0.5h9M1 1.5h1M4 1.5h1M6 1.5h1M9 1.5h1M1 2.5h9M5 3.5h1M0 4.5h11M2 5.5h1M8 5.5h1M2 6.5h7M2 7.5h1M8 7.5h1M2 8.5h7M2 9.5h1M8 9.5h1M0 10.5h11"/></symbol><symbol id="c81ea" viewBox="0 0 12 12"><path d="M4 0.5h1M2 1.5h7M2 2.5h1M8 2.5h1M2 3.5h1M8 3.5h1M2 4.5h7M2 5.5h1M8 5.5h1M2 6.5h7M2 7.5h1M8 7.5h1M2 8.5h1M8 8.5h1M2 9.5h7M2 10.5h1M8 10.5h1"/></symbol><symbol id="c83b7" viewBox="0 0 12 12"><path d="M3 0.5h1M7 0.5h1M0 1.5h11M3 2.5h1M7 2.5h1M1 3.5h1M3 3.5h1M7 3.5h2M2 4.5h1M7 4.5h1M9 4.5h1M1 5.5h1M3 5.5h1M5 5.5h6M0 6.5h1M3 6.5h1M7 6.5h1M2 7.5h2M7 7.5h1M1 8.5h1M3 8.5h1M6 8.5h1M8 8.5h1M3 9.5h1M5 9.5h1M9 9.5h1M1 10.5h2M4 10.5h1M10 10.5h1"/></symbol><symbol id="c85cf" viewBox="0 0 12 12"><path d="M4 0.5h1M7 0.5h1M0 1.5h11M4 2.5h1M7 2.5h1M9 2.5h1M0 3.5h1M2 3.5h9M0 4.5h1M2 4.5h1M4 4.5h1M6 4.5h1M8 4.5h1M0 5.5h3M4 5.5h5M10 5.5h1M2 6.5h1M4 6.5h1M8 6.5h1M10 6.5h1M0 7.5h3M4 7.5h6M0 8.5h1M2 8.5h1M4 8.5h1M6 8.5h1M8 8.5h1M10 8.5h1M0 9.5h1M2 9.5h1M4 9.5h5M10 9.5h1M1 10.5h1M7 10.5h1M9 10.5h2"/></symbol><symbol id="c884c" viewBox="0 0 12 12"><path d="M2 0.5h1M5 0.5h5M1 1.5h1M0 2.5h1M3 3.5h1M2 4.5h1M4 4.5h7M1 5.5h2M8 5.5h1M0 6.5h1M2 6.5h1M8 6.5h1M2 7.5h1M8 7.5h1M2 8.5h1M8 8.5h1M2 9.5h1M8 9.5h1M2 10.5h1M6 10.5h3"/></symbol><symbol id="c8868" viewBox="0 0 12 12"><path d="M5 0.5h1M1 1.5h9M5 2.5h1M2 3.5h7M5 4.5h1M0 5.5h11M4 6.5h1M6 6.5h1M9 6.5h1M3 7.5h1M6 7.5h1M8 7.5h1M2 8.5h2M7 8.5h1M0 9.5h2M3 9.5h1M5 9.5h1M8 9.5h1M3 10.5h2M9 10.5h2"/></symbol><symbol id="c89e6" viewBox="0 0 12 12"><path d="M1 0.5h1M8 0.5h1M1 1.5h4M8 1.5h1M0 2.5h1M3 2.5h1M8 2.5h1M0 3.5h5M6 3.5h5M0 4.5h1M2 4.5h1M4 4.5h1M6 4.5h1M8 4.5h1M10 4.5h1M0 5.5h5M6 5.5h1M8 5.5h1M10 5.5h1M0 6.5h1M2 6.5h1M4 6.5h1M6 6.5h5M0 7.5h5M8 7.5h1M0 8.5h1M2 8.5h1M4 8.5h1M8 8.5h1M10 8.5h1M0 9.5h1M2 9.5h1M4 9.5h1M8 9.5h3M0 10.5h1M3 10.5h2M6 10.5h3M10 10.5h1"/></symbol><symbol id="c8ba1" viewBox="0 0 12 12"><path d="M1 0.5h1M7 0.5h1M2 1.5h1M7 1.5h1M7 2.5h1M4 3.5h7M0 4.5h3M7 4.5h1M2 5.5h1M7 5.5h1M2 6.5h1M7 6.5h1M2 7.5h1M4 7.5h1M7 7.5h1M2 8.5h2M7 8.5h1M2 9.5h1M7 9.5h1M7 10.5h1"/></symbol><symbol id="c8bbe" viewBox="0 0 12 12"><path d="M1 0.5h1M5 0.5h4M2 1.5h1M5 1.5h1M8 1.5h1M5 2.5h1M8 2.5h1M4 3.5h1M8 3.5h3M0 4.5h3M2 5.5h1M4 5.5h6M2 6.5h1M5 6.5h1M9 6.5h1M2 7.5h1M6 7.5h1M8 7.5h1M2 8.5h2M7 8.5h1M2 9.5h1M6 9.5h1M8 9.5h1M3 10.5h3M9 10.5h2"/></symbol><symbol id="c8bd5" viewBox="0 0 12 12"><path d="M1 0.5h1M7 0.5h1M9 0.5h1M2 1.5h1M7 1.5h1M10 1.5h1M3 2.5h8M7 3.5h1M0 4.5h3M4 4.5h4M2 5.5h1M5 5.5h1M7 5.5h1M2 6.5h1M5 6.5h1M7 6.5h1M2 7.5h1M5 7.5h1M8 7.5h1M10 7.5h1M2 8.5h1M5 8.5h2M8 8.5h1M10 8.5h1M2 9.5h3M9 9.5h2M2 10.5h1M10 10.5h1"/></symbol><symbol id="c8c03" viewBox="0 0 12 12"><path d="M1 0.5h1M4 0.5h7M2 1.5h1M4 1.5h1M7 1.5h1M10 1.5h1M4 2.5h1M6 2.5h3M10 2.5h1M0 3.5h3M4 3.5h1M7 3.5h1M10 3.5h1M2 4.5h1M4 4.5h7M2 5.5h1M4 5.5h1M10 5.5h1M2 6.5h1M4 6.5h1M6 6.5h3M10 6.5h1M2 7.5h1M4 7.5h1M6 7.5h1M8 7.5h1M10 7.5h1M2 8.5h3M6 8.5h3M10 8.5h1M2 9.5h1M4 9.5h1M10 9.5h1M3 10.5h1M8 10.5h3"/></symbol><symbol id="c8f6c" viewBox="0 0 12 12"><path d="M2 0.5h1M7 0.5h1M0 1.5h4M5 1.5h5M1 2.5h1M7 2.5h1M1 3.5h2M4 3.5h7M0 4.5h1M2 4.5h1M6 4.5h1M0 5.5h4M5 5.5h5M2 6.5h1M9 6.5h1M2 7.5h3M6 7.5h1M8 7.5h1M0 8.5h3M7 8.5h1M2 9.5h1M8 9.5h1M2 10.5h1M8 10.5h1"/></symbol><symbol id="c8f83" viewBox="0 0 12 12"><path d="M2 0.5h1M7 0.5h1M0 1.5h5M8 1.5h1M1 2.5h1M5 2.5h6M1 3.5h2M6 3.5h1M9 3.5h1M0 4.5h1M2 4.5h1M5 4.5h1M10 4.5h1M0 5.5h5M6 5.5h1M9 5.5h1M2 6.5h1M6 6.5h1M9 6.5h1M2 7.5h3M7 7.5h2M0 8.5h3M8 8.5h1M2 9.5h1M7 9.5h1M9 9.5h1M2 10.5h1M5 10.5h2M10 10.5h1"/></symbol><symbol id="c8f91" viewBox="0 0 12 12"><path d="M2 0.5h1M6 0.5h4M0 1.5h5M6 1.5h1M9 1.5h1M1 2.5h1M6 2.5h4M1 3.5h2M0 4.5h1M2 4.5h1M5 4.5h6M0 5.5h5M6 5.5h1M9 5.5h1M2 6.5h1M6 6.5h2M9 6.5h1M2 7.5h3M6 7.5h1M8 7.5h2M0 8.5h3M6 8.5h1M9 8.5h2M2 9.5h1M4 9.5h6M2 10.5h1M9 10.5h1"/></symbol><symbol id="c8fd0" viewBox="0 0 12 12"><path d="M1 0.5h1M5 0.5h5M2 1.5h1M2 2.5h1M4 3.5h7M0 4.5h3M6 4.5h1M2 5.5h1M6 5.5h1M8 5.5h1M2 6.5h1M5 6.5h1M9 6.5h1M2 7.5h1M4 7.5h5M10 7.5h1M2 8.5h1M5 8.5h1M10 8.5h1M1 9.5h1M3 9.5h1M0 10.5h1M4 10.5h7"/></symbol><symbol id="c9001" viewBox="0 0 12 12"><path d="M1 0.5h1M5 0.5h1M9 0.5h1M2 1.5h1M6 1.5h1M8 1.5h1M2 2.5h1M5 2.5h5M7 3.5h1M0 4.5h3M7 4.5h1M2 5.5h1M4 5.5h7M2 6.5h1M7 6.5h1M2 7.5h1M6 7.5h1M8 7.5h1M2 8.5h1M5 8.5h1M9 8.5h1M1 9.5h1M3 9.5h2M10 9.5h1M0 10.5h1M4 10.5h7"/></symbol><symbol id="c901a" viewBox="0 0 12 12"><path d="M1 0.5h1M4 0.5h6M2 1.5h1M6 1.5h1M8 1.5h1M2 2.5h1M4 2.5h7M4 3.5h1M7 3.5h1M10 3.5h1M0 4.5h3M4 4.5h7M2 5.5h1M4 5.5h1M7 5.5h1M10 5.5h1M2 6.5h1M4 6.5h7M2 7.5h1M4 7.5h1M7 7.5h1M10 7.5h1M2 8.5h1M4 8.5h1M7 8.5h1M9 8.5h2M1 9.5h1M3 9.5h1M0 10.5h1M4 10.5h7"/></symbol><symbol id="c903b" viewBox="0 0 12 12"><path d="M1 0.5h1M4 0.5h7M2 1.5h1M4 1.5h1M6 1.5h1M8 1.5h1M10 1.5h1M2 2.5h1M4 2.5h7M6 3.5h1M0 4.5h3M5 4.5h5M2 5.5h1M4 5.5h1M9 5.5h1M2 6.5h1M5 6.5h1M8 6.5h1M2 7.5h1M6 7.5h2M2 8.5h1M4 8.5h2M1 9.5h1M3 9.5h1M0 10.5h1M4 10.5h7"/></symbol><symbol id="c914d" viewBox="0 0 12 12"><path d="M0 0.5h5M6 0.5h5M1 1.5h1M3 1.5h1M10 1.5h1M1 2.5h1M3 2.5h1M10 2.5h1M0 3.5h5M10 3.5h1M0 4.5h1M2 4.5h1M4 4.5h1M6 4.5h5M0 5.5h2M3 5.5h2M6 5.5h1M0 6.5h1M4 6.5h1M6 6.5h1M0 7.5h5M6 7.5h1M0 8.5h1M4 8.5h1M6 8.5h1M10 8.5h1M0 9.5h5M6 9.5h1M10 9.5h1M0 10.5h1M4 10.5h1M6 10.5h5"/></symbol><symbol id="c91ca" viewBox="0 0 12 12"><path d="M3 0.5h7M0 1.5h3M6 1.5h1M8 1.5h1M0 2.5h1M2 2.5h1M4 2.5h1M7 2.5h1M1 3.5h3M6 3.5h1M8 3.5h1M0 4.5h6M7 4.5h1M9 4.5h2M2 5.5h2M7 5.5h1M1 6.5h2M4 6.5h6M0 7.5h1M2 7.5h1M7 7.5h1M0 8.5h1M2 8.5h1M4 8.5h7M2 9.5h1M7 9.5h1M2 10.5h1M7 10.5h1"/></symbol><symbol id="c949f" viewBox="0 0 12 12"><path d="M1 0.5h1M7 0.5h1M1 1.5h1M7 1.5h1M1 2.5h10M0 3.5h1M5 3.5h1M7 3.5h1M10 3.5h1M1 4.5h3M5 4.5h1M7 4.5h1M10 4.5h1M2 5.5h1M5 5.5h1M7 5.5h1M10 5.5h1M0 6.5h11M2 7.5h1M7 7.5h1M2 8.5h1M4 8.5h1M7 8.5h1M2 9.5h2M7 9.5h1M2 10.5h1M7 10.5h1"/></symbol><symbol id="c9898" viewBox="0 0 12 12"><path d="M1 0.5h4M6 0.5h5M1 1.5h1M4 1.5h1M8 1.5h1M1 2.5h4M6 2.5h5M1 3.5h1M4 3.5h1M6 3.5h1M10 3.5h1M1 4.5h4M6 4.5h1M8 4.5h1M10 4.5h1M6 5.5h1M8 5.5h1M10 5.5h1M0 6.5h7M8 6.5h1M10 6.5h1M1 7.5h1M3 7.5h1M6 7.5h1M8 7.5h1M1 8.5h1M3 8.5h3M7 8.5h1M9 8.5h1M0 9.5h1M2 9.5h2M6 9.5h1M10 9.5h1M0 10.5h1M4 10.5h7"/></symbol></defs></svg><div id="w"><div class="" style="left:0px;top:0px;width:1024px;height:18px;background:linear-gradient(90deg,#808080,#c0c0c0)"></div><svg class="i" style="left:2px;top:3px" width="16" height="16" viewBox="0 0 16 16"><path stroke="#000080" d="M0 0.5h12M0 1.5h12"/><path stroke="#fff" d="M0 2.5h12M0 3.5h2M0 4.5h2M0 5.5h2M0 6.5h2M0 7.5h2M0 8.5h2M3 8.5h1M0 9.5h2M0 10.5h2M1 11.5h1"/><path stroke="#000" d="M2 3.5h13M2 4.5h1M5 4.5h1M13 4.5h1M2 5.5h1M5 5.5h10M2 6.5h1M5 6.5h1M14 6.5h1M2 7.5h2M5 7.5h1M14 7.5h1M2 8.5h1M4 8.5h2M14 8.5h1M2 9.5h2M5 9.5h10M2 10.5h1M5 10.5h1M13 10.5h1M2 11.5h13"/><path stroke="#008000" d="M3 4.5h1M3 5.5h1M3 6.5h1M7 6.5h6M13 7.5h1M7 8.5h6M3 10.5h1"/><path stroke="#a0a0a0" d="M4 4.5h1M6 4.5h7M4 5.5h1M4 6.5h1M6 6.5h1M13 6.5h1M4 7.5h1M6 7.5h1M6 8.5h1M13 8.5h1M4 9.5h1M4 10.5h1M6 10.5h7"/><path stroke="#c0c0c0" d="M7 7.5h6"/></svg><div class="t b" style="left:20px;top:3px;color:#d4d0c8;" aria-label="STEP 7-Micro/WIN - 100t自动打包机新程序配触摸屏 - [SIMATIC LAD]"><span style="display:inline-block;width:140px;letter-spacing:0.57px">STEP&nbsp;7-Micro/WIN&nbsp;-&nbsp;100t</span><svg class="cb"><use href="#c81ea"/><use href="#c81ea" x="1"/></svg><svg class="cb"><use href="#c52a8"/><use href="#c52a8" x="1"/></svg><svg class="cb"><use href="#c6253"/><use href="#c6253" x="1"/></svg><svg class="cb"><use href="#c5305"/><use href="#c5305" x="1"/></svg><svg class="cb"><use href="#c673a"/><use href="#c673a" x="1"/></svg><svg class="cb"><use href="#c65b0"/><use href="#c65b0" x="1"/></svg><svg class="cb"><use href="#c7a0b"/><use href="#c7a0b" x="1"/></svg><svg class="cb"><use href="#c5e8f"/><use href="#c5e8f" x="1"/></svg><svg class="cb"><use href="#c914d"/><use href="#c914d" x="1"/></svg><svg class="cb"><use href="#c89e6"/><use href="#c89e6" x="1"/></svg><svg class="cb"><use href="#c6478"/><use href="#c6478" x="1"/></svg><svg class="cb"><use href="#c5c4f"/><use href="#c5c4f" x="1"/></svg><span style="display:inline-block;width:94px;letter-spacing:0.43px">&nbsp;-&nbsp;[SIMATIC&nbsp;LAD]</span></div><div class="rs" style="left:972px;top:2px;width:16px;height:14px;"></div><div class="" style="left:976px;top:11px;width:6px;height:2px;background:#000"></div><div class="rs" style="left:988px;top:2px;width:16px;height:14px;"></div><svg class="i" style="left:991px;top:4px" width="10" height="10" viewBox="0 0 10 10" ><path d="M3 0h6v6h-2v-3h-4zM3 2h5M1 3h6v6h-6zM1 5h5" fill="none"/><rect x="3" y="0" width="6" height="2" fill="#000"/><rect x="3" y="0" width="1" height="3" fill="#000"/><rect x="8" y="0" width="1" height="6" fill="#000"/><rect x="7" y="5" width="2" height="1" fill="#000"/><rect x="1" y="3" width="6" height="2" fill="#000"/><rect x="1" y="3" width="1" height="6" fill="#000"/><rect x="6" y="3" width="1" height="6" fill="#000"/><rect x="1" y="8" width="6" height="1" fill="#000"/></svg><div class="rs" style="left:1006px;top:2px;width:16px;height:14px;"></div><svg class="i" style="left:1010px;top:5px" width="8" height="7" viewBox="0 0 8 7" style="shape-rendering:auto;left:1010px;top:5px"><path d="M0 0h2l2 2l2-2h2l-3 3.5l3 3.5h-2l-2-2l-2 2h-2l3-3.5z" fill="#000"/></svg><div class="rs" style="left:972px;top:21px;width:16px;height:14px;"></div><div class="" style="left:976px;top:30px;width:6px;height:2px;background:#000"></div><div class="rs" style="left:988px;top:21px;width:16px;height:14px;"></div><svg class="i" style="left:991px;top:23px" width="10" height="10" viewBox="0 0 10 10" ><path d="M3 0h6v6h-2v-3h-4zM3 2h5M1 3h6v6h-6zM1 5h5" fill="none"/><rect x="3" y="0" width="6" height="2" fill="#000"/><rect x="3" y="0" width="1" height="3" fill="#000"/><rect x="8" y="0" width="1" height="6" fill="#000"/><rect x="7" y="5" width="2" height="1" fill="#000"/><rect x="1" y="3" width="6" height="2" fill="#000"/><rect x="1" y="3" width="1" height="6" fill="#000"/><rect x="6" y="3" width="1" height="6" fill="#000"/><rect x="1" y="8" width="6" height="1" fill="#000"/></svg><div class="rs" style="left:1006px;top:21px;width:16px;height:14px;"></div><svg class="i" style="left:1010px;top:24px" width="8" height="7" viewBox="0 0 8 7" style="shape-rendering:auto;left:1010px;top:24px"><path d="M0 0h2l2 2l2-2h2l-3 3.5l3 3.5h-2l-2-2l-2 2h-2l3-3.5z" fill="#000"/></svg><svg class="i" style="left:5px;top:21px" width="16" height="16" viewBox="0 0 16 16"><path stroke="#000" d="M0 0.5h12M0 1.5h1M11 1.5h2M0 2.5h1M4 2.5h1M8 2.5h1M11 2.5h1M13 2.5h1M0 3.5h1M2 3.5h3M8 3.5h7M0 4.5h1M4 4.5h1M6 4.5h1M8 4.5h1M14 4.5h1M0 5.5h1M6 5.5h2M14 5.5h1M0 6.5h1M2 6.5h3M6 6.5h3M10 6.5h2M14 6.5h1M0 7.5h1M4 7.5h1M6 7.5h4M14 7.5h1M0 8.5h1M4 8.5h1M6 8.5h5M14 8.5h1M0 9.5h1M6 9.5h6M14 9.5h1M0 10.5h1M6 10.5h3M14 10.5h1M0 11.5h9M12 11.5h3"/><path stroke="#fff" d="M1 1.5h10M1 2.5h3M5 2.5h3M9 2.5h2M12 2.5h1M1 3.5h1M5 3.5h3M1 4.5h3M5 4.5h1M7 4.5h1M9 4.5h5M1 5.5h5M8 5.5h6M1 6.5h1M5 6.5h1M9 6.5h1M12 6.5h2M1 7.5h3M5 7.5h1M10 7.5h4M1 8.5h3M5 8.5h1M11 8.5h3M1 9.5h5M12 9.5h2M1 10.5h5M12 10.5h2M10 11.5h1"/><path stroke="#ff0000" d="M9 10.5h3M9 11.5h1M11 11.5h1M9 12.5h3"/></svg><div class="t" style="left:26px;top:22px;color:#808080;" aria-label="文件(F)"><svg class="c"><use href="#c6587"/></svg><svg class="c"><use href="#c4ef6"/></svg>(<u>F</u>)</div><div class="t" style="left:76px;top:22px;color:#808080;" aria-label="编辑(E)"><svg class="c"><use href="#c7f16"/></svg><svg class="c"><use href="#c8f91"/></svg>(<u>E</u>)</div><div class="t" style="left:126px;top:22px;color:#808080;" aria-label="查看(V)"><svg class="c"><use href="#c67e5"/></svg><svg class="c"><use href="#c770b"/></svg>(<u>V</u>)</div><div class="t" style="left:175px;top:22px;color:#808080;">PLC(<u>P</u>)</div><div class="t" style="left:220px;top:22px;color:#808080;" aria-label="调试(D)"><svg class="c"><use href="#c8c03"/></svg><svg class="c"><use href="#c8bd5"/></svg>(<u>D</u>)</div><div class="t" style="left:271px;top:22px;color:#808080;" aria-label="工具(T)"><svg class="c"><use href="#c5de5"/></svg><svg class="c"><use href="#c5177"/></svg>(<u>T</u>)</div><div class="t" style="left:321px;top:22px;color:#808080;" aria-label="窗口(W)"><svg class="c"><use href="#c7a97"/></svg><svg class="c"><use href="#c53e3"/></svg>(<u>W</u>)</div><div class="t" style="left:374px;top:22px;color:#808080;" aria-label="帮助(H)"><svg class="c"><use href="#c5e2e"/></svg><svg class="c"><use href="#c52a9"/></svg>(<u>H</u>)</div><div class="" style="left:0px;top:37px;width:1024px;height:1px;background:#808080"></div><div class="" style="left:0px;top:38px;width:1024px;height:1px;background:#fff"></div><div class="" style="left:0px;top:39px;width:442px;height:31px;border-right:1px solid #808080;border-bottom:1px solid #808080;border-left:1px solid #fff;"></div><div class="gp" style="left:3px;top:41px;width:3px;height:26px;height:26px"></div><div class="gp" style="left:6px;top:41px;width:3px;height:26px;height:26px"></div><svg class="i" style="left:13px;top:46px" width="16" height="16" viewBox="0 0 16 16"><path stroke="#000" d="M6 1.5h7M6 2.5h1M12 2.5h2M6 3.5h1M12 3.5h1M14 3.5h1M12 4.5h4M15 5.5h1M15 6.5h1M6 7.5h1M15 7.5h1M6 8.5h1M15 8.5h1M6 9.5h1M15 9.5h1M6 10.5h1M15 10.5h1M6 11.5h1M15 11.5h1M6 12.5h1M15 12.5h1M6 13.5h1M15 13.5h1M6 14.5h10"/><path stroke="#808000" d="M0 2.5h1M3 3.5h1M3 4.5h1M0 5.5h1M2 5.5h1M4 5.5h1M6 5.5h1M3 6.5h1M3 7.5h1M0 8.5h1"/><path stroke="#ffff00" d="M3 2.5h1M1 3.5h1M5 3.5h1M2 4.5h1M4 4.5h1M1 5.5h1M3 5.5h1M5 5.5h1M2 6.5h1M4 6.5h1M1 7.5h1M5 7.5h1M3 8.5h1"/><path stroke="#fff" d="M7 2.5h5M7 3.5h5M13 3.5h1M6 4.5h6M7 5.5h8M6 6.5h9M7 7.5h8M7 8.5h8M7 9.5h8M7 10.5h8M7 11.5h8M7 12.5h8M7 13.5h8"/></svg><svg class="i" style="left:36px;top:46px" width="16" height="16" viewBox="0 0 16 16"><path stroke="#000" d="M9 1.5h3M8 2.5h1M12 2.5h1M14 2.5h1M13 3.5h2M1 4.5h3M12 4.5h3M0 5.5h1M4 5.5h1M0 6.5h1M5 6.5h7M0 7.5h1M11 7.5h1M0 8.5h1M4 8.5h11M0 9.5h1M3 9.5h1M13 9.5h1M0 10.5h1M2 10.5h1M12 10.5h1M0 11.5h2M11 11.5h1M0 12.5h2M10 12.5h1M0 13.5h10"/><path stroke="#ffff99" d="M1 5.5h1M3 5.5h1M2 6.5h1M4 6.5h1M1 7.5h1M3 7.5h1M5 7.5h1M7 7.5h1M9 7.5h1M2 8.5h1M1 9.5h1"/><path stroke="#efef9c" d="M2 5.5h1M1 6.5h1M3 6.5h1M2 7.5h1M4 7.5h1M6 7.5h1M8 7.5h1M10 7.5h1M1 8.5h1M3 8.5h1M2 9.5h1M1 10.5h1"/><path stroke="#808000" d="M4 9.5h9M3 10.5h9M2 11.5h9M2 12.5h8"/></svg><svg class="i" style="left:59px;top:46px" width="16" height="16" viewBox="0 0 16 16"><path stroke="#000" d="M5 1.5h10M5 2.5h1M14 2.5h1M3 3.5h10M14 3.5h1M3 4.5h1M12 4.5h1M14 4.5h1M1 5.5h10M12 5.5h1M14 5.5h1M1 6.5h1M11 6.5h1M13 6.5h2M1 7.5h1M11 7.5h1M13 7.5h1M1 8.5h1M11 8.5h1M13 8.5h1M1 9.5h1M11 9.5h3M1 10.5h1M4 10.5h5M11 10.5h2M1 11.5h1M4 11.5h2M8 11.5h1M11 11.5h1M1 12.5h1M4 12.5h2M8 12.5h1M11 12.5h1M1 13.5h11"/><path stroke="#808000" d="M6 2.5h2M12 2.5h2M13 3.5h1M4 4.5h2M10 4.5h2M13 4.5h1M11 5.5h1M13 5.5h1M2 6.5h2M9 6.5h2M12 6.5h1M2 7.5h2M9 7.5h2M12 7.5h1M2 8.5h2M9 8.5h2M12 8.5h1M2 9.5h9M2 10.5h2M9 10.5h2M2 11.5h2M9 11.5h2M2 12.5h2M9 12.5h2"/><path stroke="#fff" d="M8 2.5h4M6 4.5h4M4 6.5h5M4 7.5h5M4 8.5h5M6 11.5h2M6 12.5h2"/></svg><div class="sp" style="left:84px;top:43px;width:2px;height:22px;"></div><svg class="i" style="left:90px;top:46px" width="16" height="16" viewBox="0 0 16 16"><path stroke="#000" d="M5 1.5h8M4 2.5h1M12 2.5h1M4 3.5h1M6 3.5h4M11 3.5h1M3 4.5h1M11 4.5h1M3 5.5h1M5 5.5h4M10 5.5h4M2 6.5h9M12 6.5h1M14 6.5h1M1 7.5h1M11 7.5h1M14 7.5h1M0 8.5h1M10 8.5h1M12 8.5h1M14 8.5h1M0 9.5h11M13 9.5h2M0 10.5h1M10 10.5h1M12 10.5h2M0 11.5h1M3 11.5h6M11 11.5h2M0 12.5h1M10 12.5h2M1 13.5h10"/><path stroke="#fff" d="M5 2.5h7M5 3.5h1M10 3.5h1M4 4.5h7M4 5.5h1M9 5.5h1M2 7.5h9M1 8.5h9M1 10.5h9M1 11.5h2M9 11.5h2M1 12.5h9"/><path stroke="#c0c0c0" d="M11 6.5h1M13 6.5h1M12 7.5h2M11 8.5h1M13 8.5h1M11 9.5h2M11 10.5h1"/></svg><svg class="i" style="left:113px;top:46px" width="16" height="16" viewBox="0 0 16 16"><path stroke="#000" d="M1 1.5h8M1 2.5h1M8 2.5h2M1 3.5h1M8 3.5h1M10 3.5h1M1 4.5h1M8 4.5h4M1 5.5h1M7 5.5h4M12 5.5h1M1 6.5h1M6 6.5h1M11 6.5h2M1 7.5h1M5 7.5h1M12 7.5h1M1 8.5h1M5 8.5h1M12 8.5h1M1 9.5h1M5 9.5h1M12 9.5h1M1 10.5h1M6 10.5h1M11 10.5h1M1 11.5h1M7 11.5h6M1 12.5h1M11 12.5h4M1 13.5h11M13 13.5h3"/><path stroke="#fff" d="M2 2.5h6M2 3.5h6M9 3.5h1M2 4.5h6M2 5.5h5M11 5.5h1M2 6.5h4M8 6.5h2M2 7.5h3M7 7.5h4M2 8.5h3M7 8.5h4M2 9.5h3M8 9.5h2M2 10.5h4M2 11.5h5M2 12.5h9"/><path stroke="#c0c0c0" d="M7 6.5h1M10 6.5h1M6 7.5h1M11 7.5h1M6 8.5h1M11 8.5h1M6 9.5h2M10 9.5h2M7 10.5h4"/></svg><div class="sp" style="left:138px;top:43px;width:2px;height:22px;"></div><svg class="i" style="left:144px;top:46px" width="16" height="16" viewBox="0 0 16 16"><path stroke="#fff" d="M6 2.5h1M11 2.5h1M6 3.5h1M11 3.5h1M6 4.5h1M10 4.5h1M7 5.5h1M10 5.5h1M7 6.5h1M9 6.5h1M8 7.5h2M8 8.5h1M7 9.5h3M6 10.5h1M8 10.5h1M10 10.5h2M5 11.5h1M8 11.5h1M10 11.5h1M12 11.5h1M5 12.5h1M8 12.5h1M10 12.5h1M12 12.5h1M5 13.5h1M7 13.5h1M11 13.5h2M6 14.5h1"/><path stroke="#808080" d="M5 1.5h1M10 1.5h1M5 2.5h1M10 2.5h1M5 3.5h1M9 3.5h1M6 4.5h1M9 4.5h1M6 5.5h1M8 5.5h1M7 6.5h2M7 7.5h1M6 8.5h3M5 9.5h1M7 9.5h1M9 9.5h2M4 10.5h1M7 10.5h1M9 10.5h1M11 10.5h1M4 11.5h1M7 11.5h1M9 11.5h1M11 11.5h1M4 12.5h1M6 12.5h1M10 12.5h2M5 13.5h1"/></svg><svg class="i" style="left:167px;top:46px" width="16" height="16" viewBox="0 0 16 16"><path stroke="#fff" d="M2 2.5h6M2 3.5h1M7 3.5h2M2 4.5h1M4 4.5h2M7 4.5h7M2 5.5h1M7 5.5h1M13 5.5h2M2 6.5h1M4 6.5h2M7 6.5h1M9 6.5h3M13 6.5h3M2 7.5h1M7 7.5h1M15 7.5h1M2 8.5h1M4 8.5h2M7 8.5h1M9 8.5h5M15 8.5h1M2 9.5h1M7 9.5h1M15 9.5h1M2 10.5h6M9 10.5h5M15 10.5h1M7 11.5h1M15 11.5h1M7 12.5h1M9 12.5h5M15 12.5h1M7 13.5h1M15 13.5h1M7 14.5h9"/><path stroke="#808080" d="M1 1.5h6M1 2.5h1M6 2.5h2M1 3.5h1M3 3.5h2M6 3.5h7M1 4.5h1M6 4.5h1M12 4.5h2M1 5.5h1M3 5.5h2M6 5.5h1M8 5.5h3M12 5.5h3M1 6.5h1M6 6.5h1M14 6.5h1M1 7.5h1M3 7.5h2M6 7.5h1M8 7.5h5M14 7.5h1M1 8.5h1M6 8.5h1M14 8.5h1M1 9.5h6M8 9.5h5M14 9.5h1M6 10.5h1M14 10.5h1M6 11.5h1M8 11.5h5M14 11.5h1M6 12.5h1M14 12.5h1M6 13.5h9"/></svg><svg class="i" style="left:190px;top:46px" width="16" height="16" viewBox="0 0 16 16"><path stroke="#fff" d="M6 2.5h4M3 3.5h10M2 4.5h4M10 4.5h4M2 5.5h12M2 6.5h12M2 7.5h13M2 8.5h14M2 9.5h6M14 9.5h2M2 10.5h6M9 10.5h4M14 10.5h2M2 11.5h6M14 11.5h2M2 12.5h6M9 12.5h4M14 12.5h2M3 13.5h5M14 13.5h2M8 14.5h8"/><path stroke="#808080" d="M5 1.5h4M2 2.5h10M1 3.5h4M9 3.5h4M1 4.5h12M1 5.5h12M1 6.5h13M1 7.5h14M1 8.5h6M13 8.5h2M1 9.5h6M8 9.5h4M13 9.5h2M1 10.5h6M13 10.5h2M1 11.5h6M8 11.5h4M13 11.5h2M2 12.5h5M13 12.5h2M7 13.5h8"/></svg><div class="sp" style="left:215px;top:43px;width:2px;height:22px;"></div><svg class="i" style="left:221px;top:46px" width="16" height="16" viewBox="0 0 16 16"><path stroke="#fff" d="M8 5.5h4M4 6.5h1M7 6.5h1M12 6.5h1M4 7.5h2M13 7.5h1M4 8.5h3M13 8.5h1M4 9.5h4M13 9.5h1M4 10.5h5M12 10.5h1M11 11.5h1"/><path stroke="#808080" d="M7 4.5h4M3 5.5h1M6 5.5h1M11 5.5h1M3 6.5h2M12 6.5h1M3 7.5h3M12 7.5h1M3 8.5h4M12 8.5h1M3 9.5h5M11 9.5h1M10 10.5h1"/></svg><div class="sp" style="left:246px;top:43px;width:2px;height:22px;"></div><svg class="i" style="left:252px;top:46px" width="16" height="16" viewBox="0 0 16 16"><path stroke="#0000ff" d="M14 1.5h2M13 2.5h2M12 3.5h2M11 4.5h3M10 5.5h2M2 6.5h2M9 6.5h2M3 7.5h2M8 7.5h2M4 8.5h2M7 8.5h2M5 9.5h3M6 10.5h1"/><path stroke="#000" d="M1 2.5h11M1 3.5h1M11 3.5h1M1 4.5h1M1 5.5h1M12 5.5h1M1 6.5h1M12 6.5h1M1 7.5h1M12 7.5h1M1 8.5h1M12 8.5h1M1 9.5h1M12 9.5h1M1 10.5h1M12 10.5h1M1 11.5h1M12 11.5h1M1 12.5h1M12 12.5h1M1 13.5h12"/><path stroke="#fff" d="M2 3.5h9M2 4.5h9M2 5.5h8M4 6.5h5M11 6.5h1M2 7.5h1M5 7.5h3M10 7.5h2M2 8.5h2M6 8.5h1M9 8.5h3M2 9.5h3M8 9.5h4M2 10.5h4M7 10.5h5M2 11.5h10M2 12.5h10"/></svg><svg class="i" style="left:275px;top:46px" width="16" height="16" viewBox="0 0 16 16"><path stroke="#0000ff" d="M14 1.5h2M13 2.5h2M12 3.5h2M11 4.5h3M10 5.5h2M4 6.5h2M9 6.5h2M5 7.5h2M8 7.5h2M6 8.5h3M7 9.5h1"/><path stroke="#000" d="M0 2.5h8M0 3.5h1M7 3.5h5M0 4.5h1M3 4.5h8M0 5.5h1M3 5.5h1M12 5.5h1M0 6.5h1M3 6.5h1M12 6.5h1M0 7.5h1M3 7.5h1M12 7.5h1M0 8.5h1M3 8.5h1M12 8.5h1M0 9.5h1M3 9.5h1M12 9.5h1M0 10.5h1M3 10.5h1M12 10.5h1M0 11.5h4M12 11.5h1M3 12.5h1M12 12.5h1M3 13.5h10"/><path stroke="#fff" d="M1 3.5h6M1 4.5h2M1 5.5h2M4 5.5h6M1 6.5h2M6 6.5h3M11 6.5h1M1 7.5h2M4 7.5h1M7 7.5h1M10 7.5h2M1 8.5h2M4 8.5h2M9 8.5h3M1 9.5h2M4 9.5h3M8 9.5h4M1 10.5h2M4 10.5h8M4 11.5h8M4 12.5h8"/></svg><div class="sp" style="left:300px;top:43px;width:2px;height:22px;"></div><svg class="i" style="left:306px;top:46px" width="16" height="16" viewBox="0 0 16 16"><path stroke="#0000ff" d="M9 4.5h2M8 5.5h4M7 6.5h6M6 7.5h8M5 8.5h10"/><path stroke="#000" d="M3 12.5h12M3 13.5h12"/></svg><svg class="i" style="left:329px;top:46px" width="16" height="16" viewBox="0 0 16 16"><path stroke="#0000ff" d="M5 4.5h10M6 5.5h8M7 6.5h6M8 7.5h4M9 8.5h2"/><path stroke="#000" d="M3 12.5h12M3 13.5h12"/></svg><div class="sp" style="left:354px;top:43px;width:2px;height:22px;"></div><svg class="i" style="left:360px;top:46px" width="16" height="16" viewBox="0 0 16 16"><path stroke="#fff" d="M4 3.5h2M12 3.5h1M3 4.5h1M6 4.5h1M12 4.5h1M3 5.5h4M12 5.5h1M3 6.5h1M6 6.5h1M12 6.5h1M3 7.5h1M6 7.5h1M12 7.5h1M12 8.5h1M3 9.5h4M12 9.5h1M6 10.5h1M10 10.5h5M5 11.5h1M11 11.5h3M4 12.5h1M12 12.5h1M3 13.5h4"/><path stroke="#808080" d="M3 2.5h2M11 2.5h1M2 3.5h1M5 3.5h1M11 3.5h1M2 4.5h4M11 4.5h1M2 5.5h1M5 5.5h1M11 5.5h1M2 6.5h1M5 6.5h1M11 6.5h1M11 7.5h1M2 8.5h4M11 8.5h1M5 9.5h1M9 9.5h5M4 10.5h1M10 10.5h3M3 11.5h1M11 11.5h1M2 12.5h4"/></svg><svg class="i" style="left:383px;top:46px" width="16" height="16" viewBox="0 0 16 16"><path stroke="#fff" d="M4 3.5h2M12 3.5h1M3 4.5h1M6 4.5h1M11 4.5h3M3 5.5h4M10 5.5h5M3 6.5h1M6 6.5h1M12 6.5h1M3 7.5h1M6 7.5h1M12 7.5h1M12 8.5h1M3 9.5h4M12 9.5h1M6 10.5h1M12 10.5h1M5 11.5h1M12 11.5h1M4 12.5h1M12 12.5h1M3 13.5h4"/><path stroke="#808080" d="M3 2.5h2M11 2.5h1M2 3.5h1M5 3.5h1M10 3.5h3M2 4.5h4M9 4.5h5M2 5.5h1M5 5.5h1M11 5.5h1M2 6.5h1M5 6.5h1M11 6.5h1M11 7.5h1M2 8.5h4M11 8.5h1M5 9.5h1M11 9.5h1M4 10.5h1M11 10.5h1M3 11.5h1M11 11.5h1M2 12.5h4"/></svg><div class="sp" style="left:408px;top:43px;width:2px;height:22px;"></div><svg class="i" style="left:414px;top:46px" width="16" height="16" viewBox="0 0 16 16"><path stroke="#000" d="M0 0.5h14M0 1.5h1M13 1.5h1M0 2.5h1M13 2.5h1M0 3.5h14M0 4.5h1M2 4.5h1M13 4.5h1M0 5.5h1M2 5.5h1M13 5.5h1M0 6.5h1M2 6.5h1M7 6.5h4M13 6.5h1M0 7.5h1M2 7.5h1M6 7.5h1M11 7.5h5M0 8.5h1M2 8.5h1M5 8.5h1M15 8.5h1M0 9.5h1M2 9.5h1M5 9.5h1M15 9.5h1M0 10.5h1M2 10.5h1M5 10.5h1M15 10.5h1M0 11.5h6M15 11.5h1M5 12.5h1M15 12.5h1M5 13.5h11"/><path stroke="#000080" d="M1 1.5h12M1 2.5h12"/><path stroke="#ffff00" d="M1 4.5h1M1 6.5h1M1 8.5h1M1 10.5h1"/><path stroke="#fff" d="M3 4.5h10M3 5.5h10M3 6.5h4M11 6.5h2M3 7.5h3M3 8.5h2M3 9.5h2M3 10.5h2"/><path stroke="#808000" d="M1 5.5h1M1 7.5h1M1 9.5h1"/><path stroke="#ffff99" d="M7 7.5h4M6 8.5h9M6 9.5h9M6 10.5h9M6 11.5h9M6 12.5h9"/></svg><div class="" style="left:444px;top:39px;width:356px;height:31px;border-right:1px solid #808080;border-bottom:1px solid #808080;border-left:1px solid #fff;"></div><div class="gp" style="left:447px;top:41px;width:3px;height:26px;height:26px"></div><div class="gp" style="left:450px;top:41px;width:3px;height:26px;height:26px"></div><svg class="i" style="left:457px;top:46px" width="16" height="16" viewBox="0 0 16 16"><path stroke="#404040" d="M6 2.5h1M6 3.5h1M6 4.5h1M6 5.5h1M6 6.5h1M6 7.5h1M6 8.5h1M6 9.5h1M6 10.5h1M6 11.5h1M6 12.5h1"/><path stroke="#008000" d="M7 3.5h1M8 4.5h1M9 5.5h1M10 6.5h1M11 7.5h1M10 8.5h1M9 9.5h1M8 10.5h1M7 11.5h1"/><path stroke="#00c000" d="M7 4.5h1M7 5.5h2M7 6.5h3M7 7.5h4M7 8.5h3M7 9.5h2M7 10.5h1"/></svg><svg class="i" style="left:480px;top:46px" width="16" height="16" viewBox="0 0 16 16"><path stroke="#800000" d="M4 3.5h9M4 4.5h9M4 5.5h9M4 6.5h9M4 7.5h9M4 8.5h9M4 9.5h9M4 10.5h9"/></svg><div class="sp" style="left:505px;top:43px;width:2px;height:22px;"></div><svg class="i" style="left:511px;top:46px" width="16" height="16" viewBox="0 0 16 16"><path stroke="#000" d="M1 1.5h4M1 2.5h1M4 2.5h1M1 3.5h1M4 3.5h4M15 3.5h1M1 4.5h4M7 4.5h1M15 4.5h1M0 5.5h1M4 5.5h1M7 5.5h4M15 5.5h1M0 6.5h2M4 6.5h4M10 6.5h1M15 6.5h1M0 7.5h3M7 7.5h1M10 7.5h4M15 7.5h1M0 8.5h4M7 8.5h4M13 8.5h1M15 8.5h1M0 9.5h3M10 9.5h1M13 9.5h1M15 9.5h1M0 10.5h2M10 10.5h6M0 11.5h1"/><path stroke="#000080" d="M5 1.5h11M5 2.5h8M14 2.5h2"/><path stroke="#fff" d="M2 2.5h2M13 2.5h1M2 3.5h2M8 3.5h7M5 4.5h2M8 4.5h7M5 5.5h2M11 5.5h4M8 6.5h2M11 6.5h4M8 7.5h2M14 7.5h1M11 8.5h2M14 8.5h1M11 9.5h2M14 9.5h1"/></svg><svg class="i" style="left:534px;top:46px" width="16" height="16" viewBox="0 0 16 16"><path stroke="#fff" d="M2 2.5h14M2 3.5h1M5 3.5h10M2 4.5h1M5 4.5h4M15 4.5h1M2 5.5h4M8 5.5h1M15 5.5h1M5 6.5h1M8 6.5h4M15 6.5h1M2 7.5h1M4 7.5h4M11 7.5h1M15 7.5h1M2 8.5h1M4 8.5h1M8 8.5h1M11 8.5h4M2 9.5h1M4 9.5h1M8 9.5h4M14 9.5h1M2 10.5h1M4 10.5h1M11 10.5h1M14 10.5h1M2 11.5h1M4 11.5h1M11 11.5h4M2 12.5h1M4 12.5h1"/><path stroke="#808080" d="M1 1.5h14M1 2.5h1M4 2.5h10M1 3.5h1M4 3.5h4M14 3.5h1M1 4.5h4M7 4.5h1M14 4.5h1M4 5.5h1M7 5.5h4M14 5.5h1M1 6.5h1M3 6.5h4M10 6.5h1M14 6.5h1M1 7.5h1M3 7.5h1M7 7.5h1M10 7.5h4M1 8.5h1M3 8.5h1M7 8.5h4M13 8.5h1M1 9.5h1M3 9.5h1M10 9.5h1M13 9.5h1M1 10.5h1M3 10.5h1M10 10.5h4M1 11.5h1M3 11.5h1"/></svg><div class="sp" style="left:559px;top:43px;width:2px;height:22px;"></div><svg class="i" style="left:565px;top:46px" width="16" height="16" viewBox="0 0 16 16"><path stroke="#000080" d="M1 1.5h14M1 2.5h11M13 2.5h2"/><path stroke="#fff" d="M12 2.5h1M2 4.5h12M2 5.5h1M5 5.5h1M8 5.5h1M11 5.5h1M13 5.5h1M2 6.5h9M12 6.5h2M2 7.5h3M6 7.5h3M11 7.5h3M2 8.5h2M5 8.5h1M7 8.5h1M9 8.5h5M4 9.5h3M8 9.5h6M1 10.5h2M5 10.5h2M1 11.5h2M4 11.5h2"/><path stroke="#000" d="M1 3.5h14M1 4.5h1M14 4.5h1M1 5.5h1M3 5.5h2M6 5.5h2M9 5.5h2M12 5.5h1M14 5.5h1M1 6.5h1M11 6.5h1M14 6.5h1M1 7.5h1M5 7.5h1M9 7.5h2M14 7.5h1M1 8.5h1M4 8.5h1M6 8.5h1M8 8.5h1M14 8.5h1M1 9.5h3M7 9.5h1M14 9.5h1M0 10.5h1M3 10.5h2M7 10.5h8M0 11.5h1M3 11.5h1M6 11.5h1M1 12.5h2M4 12.5h2"/></svg><svg class="i" style="left:588px;top:46px" width="16" height="16" viewBox="0 0 16 16"><path stroke="#fff" d="M2 2.5h14M2 3.5h11M14 3.5h2M2 4.5h14M2 5.5h1M15 5.5h1M2 6.5h1M4 6.5h2M7 6.5h2M10 6.5h2M13 6.5h1M15 6.5h1M2 7.5h1M12 7.5h1M15 7.5h1M2 8.5h1M6 8.5h1M10 8.5h2M15 8.5h1M2 9.5h1M4 9.5h3M8 9.5h2M15 9.5h1M2 10.5h1M4 10.5h1M15 10.5h1M2 11.5h1M4 11.5h1M6 11.5h9M2 12.5h1M4 12.5h1M6 12.5h1M2 13.5h1M4 13.5h1"/><path stroke="#808080" d="M1 1.5h14M1 2.5h11M13 2.5h2M1 3.5h14M1 4.5h1M14 4.5h1M1 5.5h1M3 5.5h2M6 5.5h2M9 5.5h2M12 5.5h1M14 5.5h1M1 6.5h1M11 6.5h1M14 6.5h1M1 7.5h1M5 7.5h1M9 7.5h2M14 7.5h1M1 8.5h1M3 8.5h3M7 8.5h2M14 8.5h1M1 9.5h1M3 9.5h1M14 9.5h1M1 10.5h1M3 10.5h1M5 10.5h9M1 11.5h1M3 11.5h1M5 11.5h1M1 12.5h1M3 12.5h1"/></svg><div class="sp" style="left:613px;top:43px;width:2px;height:22px;"></div><svg class="i" style="left:619px;top:46px" width="16" height="16" viewBox="0 0 16 16"><path stroke="#000" d="M5 2.5h1M12 2.5h1M4 3.5h1M6 3.5h1M11 3.5h1M13 3.5h1M3 4.5h1M10 4.5h1M14 4.5h1M2 5.5h1M9 5.5h1M1 6.5h4M8 6.5h4M0 7.5h1M5 7.5h3M12 7.5h1M0 8.5h1M5 8.5h1M7 8.5h1M12 8.5h1M0 9.5h1M5 9.5h1M7 9.5h1M12 9.5h1M1 10.5h4M8 10.5h4"/></svg><svg class="i" style="left:642px;top:46px" width="16" height="16" viewBox="0 0 16 16"><path stroke="#fff" d="M1 3.5h1M3 3.5h1M5 3.5h1M7 3.5h1M9 3.5h1M11 3.5h1M2 4.5h1M4 4.5h1M6 4.5h1M8 4.5h1M10 4.5h1M12 4.5h1M5 5.5h2M5 6.5h3M6 7.5h4M6 8.5h2M9 8.5h3M7 9.5h1M9 9.5h5M7 10.5h9M8 11.5h8M9 12.5h7"/><path stroke="#808080" d="M0 2.5h1M2 2.5h1M4 2.5h1M6 2.5h1M8 2.5h1M10 2.5h1M1 3.5h1M3 3.5h1M5 3.5h1M7 3.5h1M9 3.5h1M11 3.5h1M4 4.5h2M4 5.5h3M5 6.5h4M5 7.5h2M8 7.5h3M6 8.5h1M8 8.5h5M6 9.5h9M7 10.5h8M8 11.5h7"/></svg><div class="sp" style="left:667px;top:43px;width:2px;height:22px;"></div><svg class="i" style="left:673px;top:46px" width="16" height="16" viewBox="0 0 16 16"><path stroke="#fff" d="M7 2.5h4M6 3.5h1M11 3.5h1M5 4.5h1M12 4.5h1M5 5.5h1M12 5.5h1M5 6.5h1M12 6.5h1M4 7.5h10M4 8.5h1M6 8.5h1M8 8.5h1M10 8.5h1M12 8.5h2M4 9.5h2M7 9.5h1M9 9.5h1M11 9.5h1M13 9.5h1M4 10.5h1M6 10.5h1M8 10.5h1M10 10.5h1M12 10.5h2M4 11.5h2M7 11.5h1M9 11.5h1M11 11.5h1M13 11.5h1M4 12.5h1M6 12.5h1M8 12.5h1M10 12.5h1M12 12.5h2M4 13.5h10"/><path stroke="#808080" d="M6 1.5h4M5 2.5h1M10 2.5h1M4 3.5h1M11 3.5h1M4 4.5h1M11 4.5h1M4 5.5h1M11 5.5h1M3 6.5h10M3 7.5h1M5 7.5h1M7 7.5h1M9 7.5h1M11 7.5h2M3 8.5h2M6 8.5h1M8 8.5h1M10 8.5h1M12 8.5h1M3 9.5h1M5 9.5h1M7 9.5h1M9 9.5h1M11 9.5h2M3 10.5h2M6 10.5h1M8 10.5h1M10 10.5h1M12 10.5h1M3 11.5h1M5 11.5h1M7 11.5h1M9 11.5h1M11 11.5h2M3 12.5h10"/></svg><svg class="i" style="left:696px;top:46px" width="16" height="16" viewBox="0 0 16 16"><path stroke="#fff" d="M8 2.5h4M7 3.5h1M12 3.5h1M6 4.5h1M13 4.5h1M6 5.5h1M6 6.5h1M4 7.5h10M4 8.5h1M6 8.5h1M8 8.5h1M10 8.5h1M12 8.5h2M4 9.5h2M7 9.5h1M9 9.5h1M11 9.5h1M13 9.5h1M4 10.5h1M6 10.5h1M8 10.5h1M10 10.5h1M12 10.5h2M4 11.5h2M7 11.5h1M9 11.5h1M11 11.5h1M13 11.5h1M4 12.5h1M6 12.5h1M8 12.5h1M10 12.5h1M12 12.5h2M4 13.5h10"/><path stroke="#808080" d="M7 1.5h4M6 2.5h1M11 2.5h1M5 3.5h1M12 3.5h1M5 4.5h1M5 5.5h1M3 6.5h10M3 7.5h1M5 7.5h1M7 7.5h1M9 7.5h1M11 7.5h2M3 8.5h2M6 8.5h1M8 8.5h1M10 8.5h1M12 8.5h1M3 9.5h1M5 9.5h1M7 9.5h1M9 9.5h1M11 9.5h2M3 10.5h2M6 10.5h1M8 10.5h1M10 10.5h1M12 10.5h1M3 11.5h1M5 11.5h1M7 11.5h1M9 11.5h1M11 11.5h2M3 12.5h10"/></svg><svg class="i" style="left:719px;top:46px" width="16" height="16" viewBox="0 0 16 16"><path stroke="#000" d="M10 0.5h6M11 1.5h4M5 2.5h3M12 2.5h2M4 3.5h1M8 3.5h1M3 4.5h1M8 4.5h1M3 5.5h1M2 6.5h10M2 7.5h1M11 7.5h1M2 8.5h1M5 8.5h4M11 8.5h1M2 9.5h1M6 9.5h2M11 9.5h1M2 10.5h1M6 10.5h2M11 10.5h1M2 11.5h1M11 11.5h1M2 12.5h10"/><path stroke="#ffff00" d="M3 7.5h8M3 8.5h2M9 8.5h2M3 9.5h3M8 9.5h3M3 10.5h3M8 10.5h3M3 11.5h8"/></svg><svg class="i" style="left:742px;top:46px" width="16" height="16" viewBox="0 0 16 16"><path stroke="#fff" d="M13 1.5h1M12 2.5h3M6 3.5h3M11 3.5h5M5 4.5h1M9 4.5h1M4 5.5h1M10 5.5h1M4 6.5h1M10 6.5h1M3 7.5h10M3 8.5h1M5 8.5h1M7 8.5h1M9 8.5h1M11 8.5h2M3 9.5h2M6 9.5h1M8 9.5h1M10 9.5h1M12 9.5h1M3 10.5h1M5 10.5h1M7 10.5h1M9 10.5h1M11 10.5h2M3 11.5h2M6 11.5h1M8 11.5h1M10 11.5h1M12 11.5h1M3 12.5h1M5 12.5h1M7 12.5h1M9 12.5h1M11 12.5h2M3 13.5h10"/><path stroke="#808080" d="M12 0.5h1M11 1.5h3M5 2.5h3M10 2.5h5M4 3.5h1M8 3.5h1M3 4.5h1M9 4.5h1M3 5.5h1M9 5.5h1M2 6.5h10M2 7.5h1M4 7.5h1M6 7.5h1M8 7.5h1M10 7.5h2M2 8.5h2M5 8.5h1M7 8.5h1M9 8.5h1M11 8.5h1M2 9.5h1M4 9.5h1M6 9.5h1M8 9.5h1M10 9.5h2M2 10.5h2M5 10.5h1M7 10.5h1M9 10.5h1M11 10.5h1M2 11.5h1M4 11.5h1M6 11.5h1M8 11.5h1M10 11.5h2M2 12.5h10"/></svg><div class="sp" style="left:767px;top:43px;width:2px;height:22px;"></div><svg class="i" style="left:773px;top:46px" width="16" height="16" viewBox="0 0 16 16"><path stroke="#808080" d="M1 1.5h14M1 2.5h12M14 2.5h1M1 3.5h14M1 4.5h1M5 4.5h1M10 4.5h1M14 4.5h1M1 5.5h1M5 5.5h1M10 5.5h1M14 5.5h1M1 6.5h3M5 6.5h2M8 6.5h3M12 6.5h3M1 7.5h1M7 7.5h1M14 7.5h1M1 8.5h1M3 8.5h8M12 8.5h3M1 9.5h1M6 9.5h1M14 9.5h1M1 10.5h1M6 10.5h1M14 10.5h1M1 11.5h14"/><path stroke="#fff" d="M13 2.5h1M2 4.5h3M6 4.5h4M11 4.5h3M2 5.5h3M6 5.5h4M11 5.5h3M4 6.5h1M7 6.5h1M11 6.5h1M2 7.5h5M8 7.5h6M2 8.5h1M11 8.5h1M2 9.5h4M7 9.5h7M2 10.5h4M7 10.5h7"/></svg><div class="" style="left:0px;top:70px;width:295px;height:31px;border-right:1px solid #808080;border-bottom:1px solid #808080;border-left:1px solid #fff;border-top:1px solid #fff;"></div><div class="gp" style="left:3px;top:72px;width:3px;height:26px;height:26px"></div><div class="gp" style="left:6px;top:72px;width:3px;height:26px;height:26px"></div><svg class="i" style="left:13px;top:77px" width="16" height="16" viewBox="0 0 16 16"><path stroke="#000" d="M1 2.5h1M1 3.5h2M1 4.5h3M1 5.5h4M1 6.5h3M1 7.5h2M1 8.5h1M4 10.5h1M7 10.5h1M11 10.5h1M14 10.5h1M4 11.5h1M7 11.5h1M10 11.5h1M15 11.5h1M2 12.5h3M7 12.5h4M15 12.5h1M4 13.5h1M7 13.5h1M10 13.5h1M15 13.5h1M4 14.5h1M7 14.5h1M11 14.5h1M14 14.5h1"/></svg><svg class="i" style="left:36px;top:77px" width="16" height="16" viewBox="0 0 16 16"><path stroke="#ff0000" d="M0 2.5h2M3 2.5h2M1 3.5h3M0 4.5h5M1 5.5h3M0 6.5h2M3 6.5h2"/><path stroke="#000" d="M4 10.5h1M7 10.5h1M11 10.5h1M14 10.5h1M4 11.5h1M7 11.5h1M10 11.5h1M15 11.5h1M2 12.5h3M7 12.5h4M15 12.5h1M4 13.5h1M7 13.5h1M10 13.5h1M15 13.5h1M4 14.5h1M7 14.5h1M11 14.5h1M14 14.5h1"/></svg><div class="sp" style="left:61px;top:74px;width:2px;height:22px;"></div><div class="s1 dz" style="left:64px;top:74px;width:23px;height:22px;"></div><svg class="i" style="left:68px;top:78px" width="16" height="16" viewBox="0 0 16 16"><path stroke="#808080" d="M1 1.5h14M1 2.5h1M14 2.5h1M1 3.5h1M14 3.5h1M1 4.5h1M14 4.5h1M1 5.5h1M14 5.5h1M1 6.5h1M14 6.5h1M1 7.5h1M14 7.5h1M1 8.5h1M14 8.5h1M1 9.5h1M14 9.5h1M1 10.5h1M14 10.5h1M1 11.5h1M14 11.5h1M1 12.5h1M14 12.5h1M1 13.5h15"/><path stroke="#d4d0c8" d="M2 2.5h11M2 3.5h1M5 3.5h1M8 3.5h1M11 3.5h2M2 4.5h9M13 4.5h1M2 5.5h1M5 5.5h1M8 5.5h1M12 5.5h2M2 6.5h6M11 6.5h3M2 7.5h1M5 7.5h1M10 7.5h4M2 8.5h12M2 9.5h1M5 9.5h1M8 9.5h1M11 9.5h3M2 10.5h12M2 11.5h1M5 11.5h1M8 11.5h1M11 11.5h3M2 12.5h12"/><path stroke="#00ffff" d="M13 2.5h1"/><path stroke="#90ee90" d="M3 3.5h2M6 3.5h2M9 3.5h2M3 5.5h2M6 5.5h2M9 5.5h1M3 7.5h2M6 7.5h2M3 9.5h2M6 9.5h2M9 9.5h2M3 11.5h2M6 11.5h2M9 11.5h2"/><path stroke="#ffff00" d="M13 3.5h1M11 4.5h2M10 5.5h2M8 6.5h3M9 7.5h1"/><path stroke="#000" d="M8 7.5h1"/></svg><div class="s1 dz" style="left:87px;top:74px;width:23px;height:22px;"></div><svg class="i" style="left:91px;top:78px" width="16" height="16" viewBox="0 0 16 16"><path stroke="#808080" d="M1 1.5h11M14 1.5h1M1 2.5h1M14 2.5h1M1 3.5h1M14 3.5h1M1 4.5h1M14 4.5h1M1 5.5h14"/><path stroke="#ffff00" d="M12 1.5h2M10 2.5h3M9 3.5h2M9 4.5h1"/><path stroke="#90ee90" d="M2 2.5h2M5 2.5h2M8 2.5h2M2 4.5h2M5 4.5h2M10 4.5h1"/><path stroke="#d4d0c8" d="M4 2.5h1M7 2.5h1M13 2.5h1M2 3.5h7M11 3.5h3M4 4.5h1M7 4.5h1M11 4.5h3"/><path stroke="#000" d="M8 4.5h1M4 7.5h1M6 7.5h1M9 7.5h1M4 8.5h1M6 8.5h1M10 8.5h1M2 9.5h3M6 9.5h3M10 9.5h1M4 10.5h1M6 10.5h1M10 10.5h1M4 11.5h1M6 11.5h1M9 11.5h1"/></svg><div class="s1 dz" style="left:110px;top:74px;width:23px;height:22px;"></div><svg class="i" style="left:114px;top:78px" width="16" height="16" viewBox="0 0 16 16"><path stroke="#000" d="M4 2.5h1M6 2.5h1M9 2.5h1M2 3.5h3M6 3.5h3M10 3.5h1M4 4.5h1M6 4.5h1M9 4.5h1M1 6.5h13M1 7.5h1M5 7.5h1M9 7.5h1M13 7.5h1M1 8.5h13M1 9.5h1M5 9.5h1M9 9.5h1M13 9.5h1M1 10.5h13"/></svg><div class="sp" style="left:138px;top:74px;width:2px;height:22px;"></div><svg class="i" style="left:144px;top:77px" width="16" height="16" viewBox="0 0 16 16"><path stroke="#000" d="M13 2.5h1M12 3.5h1M11 4.5h1M10 5.5h1M9 6.5h1M8 7.5h1M7 8.5h1M6 9.5h1M5 10.5h1M4 11.5h1M3 12.5h1M2 13.5h1M1 14.5h1"/><path stroke="#0000c0" d="M12 4.5h1M11 5.5h3M10 6.5h5M9 7.5h7M9 8.5h8M9 9.5h7M10 10.5h6M10 11.5h5M11 12.5h3"/></svg><svg class="i" style="left:167px;top:77px" width="16" height="16" viewBox="0 0 16 16"><path stroke="#0000c0" d="M5 0.5h4M4 1.5h1M9 1.5h1M11 1.5h1M3 2.5h1M10 2.5h2M9 3.5h3M13 5.5h1M12 6.5h3M11 7.5h5M11 8.5h6M11 9.5h6M12 10.5h5M12 11.5h4M13 12.5h2"/><path stroke="#000" d="M14 3.5h1M13 4.5h1M12 5.5h1M11 6.5h1M10 7.5h1M9 8.5h1M8 9.5h1M7 10.5h1M6 11.5h1M5 12.5h1M4 13.5h1M3 14.5h1"/></svg><svg class="i" style="left:190px;top:77px" width="16" height="16" viewBox="0 0 16 16"><path stroke="#0000c0" d="M5 0.5h4M2 1.5h1M4 1.5h1M9 1.5h1M2 2.5h2M10 2.5h1M2 3.5h3M13 5.5h1M12 6.5h3M11 7.5h5M11 8.5h6M11 9.5h6M12 10.5h5M12 11.5h4M13 12.5h2"/><path stroke="#000" d="M14 3.5h1M13 4.5h1M12 5.5h1M11 6.5h1M10 7.5h1M9 8.5h1M8 9.5h1M7 10.5h1M6 11.5h1M5 12.5h1M4 13.5h1M3 14.5h1"/></svg><svg class="i" style="left:213px;top:77px" width="16" height="16" viewBox="0 0 16 16"><path stroke="#800000" d="M2 0.5h1M8 0.5h1M3 1.5h2M6 1.5h2M4 2.5h3M4 3.5h3M3 4.5h2M6 4.5h2M2 5.5h1M8 5.5h1"/><path stroke="#000" d="M14 3.5h1M13 4.5h1M12 5.5h1M11 6.5h1M10 7.5h1M9 8.5h1M8 9.5h1M7 10.5h1M6 11.5h1M5 12.5h1M4 13.5h1M3 14.5h1"/><path stroke="#0000c0" d="M13 5.5h1M12 6.5h3M11 7.5h5M11 8.5h6M11 9.5h6M12 10.5h5M12 11.5h4M13 12.5h2"/></svg><div class="sp" style="left:238px;top:74px;width:2px;height:22px;"></div><svg class="i" style="left:244px;top:77px" width="16" height="16" viewBox="0 0 16 16"><path stroke="#000" d="M1 1.5h14M1 2.5h1M6 2.5h1M11 2.5h1M14 2.5h1M1 3.5h14M1 4.5h1M6 4.5h1M11 4.5h1M14 4.5h1M1 5.5h1M14 5.5h1M2 8.5h1M4 8.5h1M11 8.5h1M2 9.5h1M4 9.5h1M11 9.5h1M0 10.5h3M4 10.5h3M11 10.5h1M2 11.5h1M4 11.5h1M10 11.5h1M2 12.5h1M4 12.5h1M9 12.5h1"/><path stroke="#fff" d="M2 2.5h4M7 2.5h4M12 2.5h2M2 4.5h4M7 4.5h4M12 4.5h2"/><path stroke="#0000ff" d="M2 5.5h12M3 6.5h10M4 7.5h8M5 8.5h6M6 9.5h4M7 10.5h2"/></svg><svg class="i" style="left:267px;top:77px" width="16" height="16" viewBox="0 0 16 16"><path stroke="#000" d="M1 4.5h2M4 4.5h1M8 4.5h1M10 4.5h2M13 4.5h1M0 5.5h1M4 5.5h1M8 5.5h1M10 5.5h1M12 5.5h1M14 5.5h1M1 6.5h1M5 6.5h1M7 6.5h1M10 6.5h1M12 6.5h1M14 6.5h1M2 7.5h1M5 7.5h1M7 7.5h1M10 7.5h1M12 7.5h1M14 7.5h1M0 8.5h2M6 8.5h1M10 8.5h1M12 8.5h1M14 8.5h1M6 9.5h1M5 10.5h1"/><path stroke="#008000" d="M1 11.5h1M3 11.5h1M5 11.5h1M7 11.5h1M9 11.5h1M11 11.5h1M13 11.5h1M0 12.5h1M2 12.5h1M4 12.5h1M6 12.5h1M8 12.5h1M10 12.5h1M12 12.5h1M14 12.5h1"/></svg><div class="" style="left:296px;top:70px;width:187px;height:31px;border-right:1px solid #808080;border-bottom:1px solid #808080;border-left:1px solid #fff;border-top:1px solid #fff;"></div><div class="gp" style="left:299px;top:72px;width:3px;height:26px;height:26px"></div><div class="gp" style="left:302px;top:72px;width:3px;height:26px;height:26px"></div><svg class="i" style="left:309px;top:77px" width="16" height="16" viewBox="0 0 16 16"><path stroke="#fff" d="M2 5.5h6M7 6.5h1M7 7.5h1M7 8.5h1M4 9.5h7M5 10.5h5M6 11.5h3M7 12.5h1"/><path stroke="#808080" d="M1 4.5h6M6 5.5h1M6 6.5h1M6 7.5h1M3 8.5h7M4 9.5h5M5 10.5h3M6 11.5h1"/></svg><svg class="i" style="left:332px;top:77px" width="16" height="16" viewBox="0 0 16 16"><path stroke="#fff" d="M9 4.5h1M8 5.5h3M7 6.5h5M6 7.5h7M9 8.5h1M9 9.5h1M9 10.5h1M3 11.5h7"/><path stroke="#808080" d="M8 3.5h1M7 4.5h3M6 5.5h5M5 6.5h7M8 7.5h1M8 8.5h1M8 9.5h1M2 10.5h7"/></svg><svg class="i" style="left:355px;top:77px" width="16" height="16" viewBox="0 0 16 16"><path stroke="#fff" d="M6 6.5h1M5 7.5h2M4 8.5h11M5 9.5h2M6 10.5h1"/><path stroke="#808080" d="M5 5.5h1M4 6.5h2M3 7.5h11M4 8.5h2M5 9.5h1"/></svg><svg class="i" style="left:378px;top:77px" width="16" height="16" viewBox="0 0 16 16"><path stroke="#fff" d="M11 6.5h1M11 7.5h2M3 8.5h11M11 9.5h2M11 10.5h1"/><path stroke="#808080" d="M10 5.5h1M10 6.5h2M2 7.5h11M10 8.5h2M10 9.5h1"/></svg><div class="sp" style="left:403px;top:74px;width:2px;height:22px;"></div><svg class="i" style="left:409px;top:77px" width="16" height="16" viewBox="0 0 16 16"><path stroke="#fff" d="M6 5.5h1M13 5.5h1M6 6.5h1M13 6.5h1M6 7.5h1M13 7.5h1M6 8.5h1M13 8.5h1M6 9.5h1M13 9.5h1M2 10.5h5M13 10.5h5M6 11.5h1M13 11.5h1M6 12.5h1M13 12.5h1M6 13.5h1M13 13.5h1M6 14.5h1M13 14.5h1"/><path stroke="#808080" d="M5 4.5h1M12 4.5h1M5 5.5h1M12 5.5h1M5 6.5h1M12 6.5h1M5 7.5h1M12 7.5h1M5 8.5h1M12 8.5h1M1 9.5h5M12 9.5h5M5 10.5h1M12 10.5h1M5 11.5h1M12 11.5h1M5 12.5h1M12 12.5h1M5 13.5h1M12 13.5h1"/></svg><svg class="i" style="left:432px;top:77px" width="16" height="16" viewBox="0 0 16 16"><path stroke="#fff" d="M9 5.5h2M14 5.5h2M8 6.5h1M16 6.5h1M7 7.5h1M17 7.5h1M7 8.5h1M17 8.5h1M3 9.5h5M17 9.5h1M7 10.5h1M17 10.5h1M7 11.5h1M17 11.5h1M8 12.5h1M16 12.5h1M9 13.5h2M14 13.5h2"/><path stroke="#808080" d="M8 4.5h2M13 4.5h2M7 5.5h1M15 5.5h1M6 6.5h1M16 6.5h1M6 7.5h1M16 7.5h1M2 8.5h5M16 8.5h1M6 9.5h1M16 9.5h1M6 10.5h1M16 10.5h1M7 11.5h1M15 11.5h1M8 12.5h2M13 12.5h2"/></svg><svg class="i" style="left:455px;top:77px" width="16" height="16" viewBox="0 0 16 16"><path stroke="#fff" d="M7 3.5h9M7 4.5h1M15 4.5h1M7 5.5h1M15 5.5h1M4 6.5h4M15 6.5h1M7 7.5h1M15 7.5h1M7 8.5h1M15 8.5h1M7 9.5h1M15 9.5h1M7 10.5h1M15 10.5h1M7 11.5h1M15 11.5h1M7 12.5h1M15 12.5h1M7 13.5h1M15 13.5h1M7 14.5h1M15 14.5h1M7 15.5h9"/><path stroke="#808080" d="M6 2.5h9M6 3.5h1M14 3.5h1M6 4.5h1M14 4.5h1M3 5.5h4M14 5.5h1M6 6.5h1M14 6.5h1M6 7.5h1M14 7.5h1M6 8.5h1M14 8.5h1M6 9.5h1M14 9.5h1M6 10.5h1M14 10.5h1M6 11.5h1M14 11.5h1M6 12.5h1M14 12.5h1M6 13.5h1M14 13.5h1M6 14.5h9"/></svg><div class="" style="left:2px;top:102px;width:99px;height:586px;border-left:1px solid #808080;border-top:1px solid #808080;border-right:2px solid #fff;border-bottom:1px solid #fff"></div><div class="" style="left:4px;top:122px;width:94px;height:547px;background:#808080"></div><div class="r1" style="left:4px;top:104px;width:94px;height:18px;border-bottom:1px solid #404040;border-right:1px solid #404040"></div><div class="t" style="left:37px;top:107px;" aria-label="查看"><svg class="c"><use href="#c67e5"/></svg><svg class="c"><use href="#c770b"/></svg></div><div class="r1" style="left:4px;top:669px;width:94px;height:17px;border-bottom:1px solid #404040;border-right:1px solid #404040"></div><div class="t" style="left:37px;top:672px;" aria-label="工具"><svg class="c"><use href="#c5de5"/></svg><svg class="c"><use href="#c5177"/></svg></div><svg class="i" style="left:34px;top:136px" width="32" height="32" viewBox="0 0 32 32"><rect x="1" y="1" width="28" height="22" fill="#000"/><rect x="2" y="2" width="5" height="9" fill="#707a70"/><rect x="2" y="12" width="5" height="10" fill="#707a70"/><rect x="4" y="6" width="1" height="1" fill="#fff"/><rect x="3" y="13" width="4" height="8" fill="#000"/><rect x="4" y="14" width="2" height="6" fill="#fff"/><rect x="4" y="16" width="1" height="2" fill="#000"/><rect x="8" y="2" width="20" height="3" fill="#707a70"/><rect x="8" y="6" width="20" height="12" fill="#707a70"/><rect x="8" y="19" width="20" height="3" fill="#707a70"/><rect x="20" y="8" width="9" height="7" fill="#000"/><rect x="21" y="9" width="7" height="5" fill="#8f998a"/><path d="M16.5 12.5h11l4 4v14h-15z" fill="#fff" stroke="#000" stroke-width="1"/><path d="M27.5 12.5v4h4" fill="none" stroke="#000" stroke-width="1"/><rect x="19" y="20" width="4" height="1" fill="#000080"/><rect x="25" y="20" width="4" height="1" fill="#000080"/><rect x="19" y="23" width="4" height="1" fill="#000080"/><rect x="25" y="23" width="4" height="1" fill="#000080"/><rect x="19" y="26" width="4" height="1" fill="#000080"/><rect x="25" y="26" width="4" height="1" fill="#000080"/></svg><div class="t" style="left:4px;width:94px;text-align:center;top:171px;color:#fff"><svg class="c"><use href="#c7a0b"/></svg><svg class="c"><use href="#c5e8f"/></svg><svg class="c"><use href="#c5757"/></svg></div><svg class="i" style="left:34px;top:198px" width="32" height="32" viewBox="0 0 32 32"><rect x="6" y="3" width="25" height="23" fill="#000080"/><rect x="7" y="7" width="23" height="18" fill="#fff"/><rect x="9" y="9" width="5" height="1" fill="#000080"/><rect x="16" y="9" width="5" height="1" fill="#000080"/><rect x="23" y="9" width="5" height="1" fill="#000080"/><rect x="9" y="12" width="5" height="1" fill="#000080"/><rect x="16" y="12" width="5" height="1" fill="#000080"/><rect x="23" y="12" width="5" height="1" fill="#000080"/><rect x="9" y="15" width="5" height="1" fill="#000080"/><rect x="16" y="15" width="5" height="1" fill="#000080"/><rect x="23" y="15" width="5" height="1" fill="#000080"/><rect x="9" y="18" width="5" height="1" fill="#000080"/><rect x="16" y="18" width="5" height="1" fill="#000080"/><rect x="23" y="18" width="5" height="1" fill="#000080"/><rect x="9" y="21" width="5" height="1" fill="#000080"/><rect x="16" y="21" width="5" height="1" fill="#000080"/><rect x="23" y="21" width="5" height="1" fill="#000080"/><path d="M3 18l5-4l3 3l-5 4z" fill="#00c8c8" stroke="#000" stroke-width="1"/><path d="M10 25l5-4l3 3l-5 4z" fill="#00c040" stroke="#000" stroke-width="1"/><path d="M18 21l6-5l3 3l-6 5z" fill="#e8e800" stroke="#000" stroke-width="1"/></svg><div class="t" style="left:4px;width:94px;text-align:center;top:233px;color:#fff"><svg class="c"><use href="#c7b26"/></svg><svg class="c"><use href="#c53f7"/></svg><svg class="c"><use href="#c8868"/></svg></div><svg class="i" style="left:34px;top:260px" width="32" height="32" viewBox="0 0 32 32"><rect x="1" y="1" width="28" height="22" fill="#000"/><rect x="2" y="2" width="5" height="9" fill="#707a70"/><rect x="2" y="12" width="5" height="10" fill="#707a70"/><rect x="4" y="6" width="1" height="1" fill="#fff"/><rect x="3" y="13" width="4" height="8" fill="#000"/><rect x="4" y="14" width="2" height="6" fill="#fff"/><rect x="4" y="16" width="1" height="2" fill="#000"/><rect x="8" y="2" width="20" height="3" fill="#707a70"/><rect x="8" y="6" width="20" height="12" fill="#707a70"/><rect x="8" y="19" width="20" height="3" fill="#707a70"/><rect x="20" y="8" width="9" height="7" fill="#000"/><rect x="21" y="9" width="7" height="5" fill="#8f998a"/><path d="M16.5 12.5h11l4 4v14h-15z" fill="#ffff99" stroke="#000" stroke-width="1"/><path d="M27.5 12.5v4h4" fill="none" stroke="#000" stroke-width="1"/><rect x="19" y="20" width="4" height="1" fill="#a0a000"/><rect x="25" y="20" width="4" height="1" fill="#a0a000"/><rect x="19" y="23" width="4" height="1" fill="#a0a000"/><rect x="25" y="23" width="4" height="1" fill="#a0a000"/><rect x="19" y="26" width="4" height="1" fill="#a0a000"/><rect x="25" y="26" width="4" height="1" fill="#a0a000"/><rect x="7" y="24" width="1" height="5" fill="#000"/><rect x="6" y="25" width="3" height="1" fill="#000"/><rect x="5" y="26" width="5" height="1" fill="#000"/><rect x="7" y="28" width="7" height="1" fill="#000"/><rect x="12" y="26" width="1" height="5" fill="#000"/><rect x="13" y="27" width="1" height="3" fill="#000"/><rect x="14" y="28" width="1" height="1" fill="#000"/></svg><div class="t" style="left:4px;width:94px;text-align:center;top:295px;color:#fff"><svg class="c"><use href="#c72b6"/></svg><svg class="c"><use href="#c6001"/></svg><svg class="c"><use href="#c8868"/></svg></div><svg class="i" style="left:34px;top:322px" width="32" height="32" viewBox="0 0 32 32"><rect x="1" y="1" width="28" height="22" fill="#000"/><rect x="2" y="2" width="5" height="9" fill="#707a70"/><rect x="2" y="12" width="5" height="10" fill="#707a70"/><rect x="4" y="6" width="1" height="1" fill="#fff"/><rect x="3" y="13" width="4" height="8" fill="#000"/><rect x="4" y="14" width="2" height="6" fill="#fff"/><rect x="4" y="16" width="1" height="2" fill="#000"/><rect x="8" y="2" width="20" height="3" fill="#707a70"/><rect x="8" y="6" width="20" height="12" fill="#707a70"/><rect x="8" y="19" width="20" height="3" fill="#707a70"/><rect x="20" y="8" width="9" height="7" fill="#000"/><rect x="21" y="9" width="7" height="5" fill="#8f998a"/><path d="M16.5 12.5h11l4 4v14h-15z" fill="#fff" stroke="#000" stroke-width="1"/><path d="M27.5 12.5v4h4" fill="none" stroke="#000" stroke-width="1"/><rect x="19" y="20" width="4" height="1" fill="#000080"/><rect x="25" y="20" width="4" height="1" fill="#000080"/><rect x="19" y="23" width="4" height="1" fill="#000080"/><rect x="25" y="23" width="4" height="1" fill="#000080"/><rect x="19" y="26" width="4" height="1" fill="#000080"/><rect x="25" y="26" width="4" height="1" fill="#000080"/></svg><div class="t" style="left:4px;width:94px;text-align:center;top:357px;color:#fff"><svg class="c"><use href="#c6570"/></svg><svg class="c"><use href="#c636e"/></svg><svg class="c"><use href="#c5757"/></svg></div><svg class="i" style="left:34px;top:384px" width="32" height="32" viewBox="0 0 32 32"><rect x="1" y="1" width="28" height="22" fill="#000"/><rect x="2" y="2" width="5" height="9" fill="#707a70"/><rect x="2" y="12" width="5" height="10" fill="#707a70"/><rect x="4" y="6" width="1" height="1" fill="#fff"/><rect x="3" y="13" width="4" height="8" fill="#000"/><rect x="4" y="14" width="2" height="6" fill="#fff"/><rect x="4" y="16" width="1" height="2" fill="#000"/><rect x="8" y="2" width="20" height="3" fill="#707a70"/><rect x="8" y="6" width="20" height="12" fill="#707a70"/><rect x="8" y="19" width="20" height="3" fill="#707a70"/><rect x="20" y="8" width="9" height="7" fill="#000"/><rect x="21" y="9" width="7" height="5" fill="#8f998a"/><path d="M18 17l4 1l9 9l-3 3l-9-9z" fill="#f0e060" stroke="#000" stroke-width="1"/><path d="M18 17l4 1l-3 3z" fill="#000"/><path d="M23 21l6 6M25 19.5l6 6" fill="none" stroke="#000" stroke-width="1"/></svg><div class="t" style="left:4px;width:94px;text-align:center;top:419px;color:#fff"><svg class="c"><use href="#c7cfb"/></svg><svg class="c"><use href="#c7edf"/></svg><svg class="c"><use href="#c5757"/></svg></div><svg class="i" style="left:34px;top:446px" width="32" height="32" viewBox="0 0 32 32"><path d="M2.5 3.5h11l5 5v18h-16z" fill="#ffff99" stroke="#000" stroke-width="1"/><path d="M11.5 7.5h12l6 6v18h-18z" fill="#ffff99" stroke="#000" stroke-width="1"/><path d="M23.5 7.5v6h6" fill="none" stroke="#000" stroke-width="1"/><rect x="14" y="14" width="13" height="1" fill="#c8c860"/><rect x="14" y="17" width="13" height="1" fill="#c8c860"/><rect x="14" y="20" width="13" height="1" fill="#c8c860"/><rect x="14" y="23" width="13" height="1" fill="#c8c860"/><rect x="14" y="26" width="13" height="1" fill="#c8c860"/><rect x="17" y="12" width="1" height="16" fill="#c8c860"/><rect x="21" y="12" width="1" height="16" fill="#c8c860"/><rect x="25" y="12" width="1" height="16" fill="#c8c860"/><path d="M5 17l4-4v3h7v-3l4 4l-4 4v-3h-7v3z" fill="#000"/></svg><div class="t" style="left:4px;width:94px;text-align:center;top:481px;color:#fff"><svg class="c"><use href="#c4ea4"/></svg><svg class="c"><use href="#c53c9"/></svg><svg class="c"><use href="#c5f15"/></svg><svg class="c"><use href="#c7528"/></svg></div><svg class="i" style="left:34px;top:508px" width="32" height="32" viewBox="0 0 32 32"><rect x="2" y="1" width="27" height="20" fill="#000"/><rect x="3" y="2" width="5" height="18" fill="#707a70"/><rect x="9" y="2" width="19" height="3" fill="#707a70"/><rect x="9" y="6" width="19" height="10" fill="#707a70"/><rect x="9" y="17" width="19" height="3" fill="#707a70"/><rect x="4" y="11" width="4" height="8" fill="#000"/><rect x="5" y="12" width="2" height="6" fill="#fff"/><rect x="5" y="4" width="1" height="1" fill="#fff"/><rect x="5" y="21" width="2" height="6" fill="#404040"/><rect x="2" y="26" width="14" height="2" fill="#404040"/><rect x="11" y="21" width="2" height="6" fill="#404040"/><rect x="15" y="12" width="14" height="12" fill="#000"/><rect x="16" y="13" width="12" height="10" fill="#c0c0c0"/><rect x="18" y="15" width="8" height="6" fill="#008080"/><rect x="19" y="16" width="4" height="1" fill="#00ffff"/><rect x="13" y="24" width="18" height="5" fill="#000"/><rect x="14" y="25" width="16" height="3" fill="#c0c0c0"/><rect x="24" y="26" width="4" height="1" fill="#000"/></svg><div class="t" style="left:4px;width:94px;text-align:center;top:543px;color:#fff"><svg class="c"><use href="#c901a"/></svg><svg class="c"><use href="#c4fe1"/></svg></div><svg class="i" style="left:35px;top:569px" width="34" height="34" viewBox="0 0 34 34"><rect x="1" y="1" width="32" height="32" fill="#fff"/><rect x="2" y="2" width="31" height="31" fill="#404040"/><rect x="2" y="2" width="30" height="30" fill="#c0c0c0"/><rect x="3" y="31" width="29" height="1" fill="#808080"/><rect x="31" y="3" width="1" height="29" fill="#808080"/><rect x="11" y="4" width="19" height="13" fill="#000"/><rect x="12" y="5" width="17" height="11" fill="#c0c0c0"/><rect x="20" y="5" width="1" height="11" fill="#000"/><rect x="21" y="5" width="1" height="11" fill="#c0ffff"/><rect x="23" y="5" width="1" height="11" fill="#000"/><rect x="24" y="5" width="1" height="11" fill="#c0ffff"/><rect x="26" y="5" width="1" height="11" fill="#000"/><rect x="27" y="5" width="1" height="11" fill="#c0ffff"/><rect x="3" y="12" width="19" height="13" fill="#000"/><rect x="4" y="13" width="17" height="11" fill="#c0c0c0"/><rect x="5" y="21" width="4" height="1" fill="#000"/><rect x="11" y="13" width="1" height="11" fill="#000"/><rect x="12" y="13" width="1" height="11" fill="#c0ffff"/><rect x="14" y="13" width="1" height="11" fill="#000"/><rect x="15" y="13" width="1" height="11" fill="#c0ffff"/><rect x="17" y="13" width="1" height="11" fill="#000"/><rect x="18" y="13" width="1" height="11" fill="#c0ffff"/><path d="M19 31v-5l1.5 1.5l6-6l-1.5-1.5h5v5l-1.5-1.5l-6 6l1.5 1.5z" fill="#000"/></svg><div class="t" style="left:5px;width:94px;text-align:center;top:605px;color:#fff"><svg class="c"><use href="#c8bbe"/></svg><svg class="c"><use href="#c7f6e"/></svg> PG/PC <svg class="c"><use href="#c63a5"/></svg><svg class="c"><use href="#c53e3"/></svg></div><div class="sk" style="left:104px;top:102px;width:133px;height:586px;background:#fff"></div><div class="" style="left:114px;top:118px;width:1px;height:186px;background:repeating-linear-gradient(180deg,#808080 0 1px,transparent 1px 2px)"></div><div class="" style="left:133px;top:120px;width:1px;height:169px;background:repeating-linear-gradient(180deg,#808080 0 1px,transparent 1px 2px)"></div><div class="" style="left:133px;top:314px;width:1px;height:295px;background:repeating-linear-gradient(180deg,#808080 0 1px,transparent 1px 2px)"></div><div class="" style="left:119px;top:112px;width:7px;height:1px;background:repeating-linear-gradient(90deg,#808080 0 1px,transparent 1px 2px)"></div><div class="" style="left:110px;top:108px;width:9px;height:9px;border:1px solid #808080;background:#fff"></div><div class="" style="left:112px;top:112px;width:5px;height:1px;background:#000"></div><svg class="i" style="left:125px;top:104px" width="16" height="16" viewBox="0 0 16 16"><path stroke="#000" d="M1 1.5h14M1 2.5h1M14 2.5h1M1 3.5h14M1 4.5h1M3 4.5h8M14 4.5h1M1 5.5h1M3 5.5h1M10 5.5h2M14 5.5h1M1 6.5h1M3 6.5h1M5 6.5h8M14 6.5h1M1 7.5h1M3 7.5h1M5 7.5h1M12 7.5h3M1 8.5h3M5 8.5h1M7 8.5h4M13 8.5h1M3 9.5h3M13 9.5h1M5 10.5h1M7 10.5h5M13 10.5h1M5 11.5h1M13 11.5h1M5 12.5h1M7 12.5h5M13 12.5h1M5 13.5h1M13 13.5h1M5 14.5h9"/><path stroke="#000080" d="M2 2.5h12"/><path stroke="#fff" d="M2 4.5h1M11 4.5h3M2 5.5h1M4 5.5h6M12 5.5h2M2 6.5h1M4 6.5h1M13 6.5h1M2 7.5h1M4 7.5h1M6 7.5h6M4 8.5h1M6 8.5h1M11 8.5h2M6 9.5h7M6 10.5h1M12 10.5h1M6 11.5h7M6 12.5h1M12 12.5h1M6 13.5h7"/></svg><div class="" style="left:144px;top:104px;width:91px;height:16px;background:#d4d0c8"></div><div class="t" style="left:146px;top:107px;max-width:88px;overflow:hidden" aria-label="100t自动打包机新">100t<svg class="c"><use href="#c81ea"/></svg><svg class="c"><use href="#c52a8"/></svg><svg class="c"><use href="#c6253"/></svg><svg class="c"><use href="#c5305"/></svg><svg class="c"><use href="#c673a"/></svg><svg class="c"><use href="#c65b0"/></svg></div><div class="" style="left:134px;top:128px;width:12px;height:1px;background:repeating-linear-gradient(90deg,#808080 0 1px,transparent 1px 2px)"></div><svg class="i" style="left:145px;top:120px" width="16" height="16" viewBox="0 0 16 16"><path stroke="#000" d="M1 0.5h12M0 1.5h1M13 1.5h1M0 2.5h1M5 2.5h4M13 2.5h1M0 3.5h1M4 3.5h2M8 3.5h2M13 3.5h1M0 4.5h1M4 4.5h2M8 4.5h2M13 4.5h1M0 5.5h1M7 5.5h2M13 5.5h1M0 6.5h1M6 6.5h2M13 6.5h1M0 7.5h1M6 7.5h2M13 7.5h1M0 8.5h1M13 8.5h1M0 9.5h1M6 9.5h2M13 9.5h1M0 10.5h1M13 10.5h1M1 11.5h7M9 11.5h4M7 12.5h1M9 12.5h1M8 13.5h2M9 14.5h1"/><path stroke="#ffff99" d="M1 1.5h12M1 2.5h4M9 2.5h4M1 3.5h3M6 3.5h2M10 3.5h3M1 4.5h3M6 4.5h2M10 4.5h3M1 5.5h6M9 5.5h4M1 6.5h5M8 6.5h5M1 7.5h5M8 7.5h5M1 8.5h12M1 9.5h5M8 9.5h5M1 10.5h12M8 11.5h1M8 12.5h1"/></svg><div class="t b" style="left:165px;top:123px;max-width:69px;overflow:hidden" aria-label="新特性"><svg class="cb"><use href="#c65b0"/><use href="#c65b0" x="1"/></svg><svg class="cb"><use href="#c7279"/><use href="#c7279" x="1"/></svg><svg class="cb"><use href="#c6027"/><use href="#c6027" x="1"/></svg></div><div class="" style="left:134px;top:144px;width:12px;height:1px;background:repeating-linear-gradient(90deg,#808080 0 1px,transparent 1px 2px)"></div><svg class="i" style="left:144px;top:136px" width="16" height="16" viewBox="0 0 16 16"><path stroke="#000" d="M1 3.5h13M1 4.5h1M13 4.5h1M1 5.5h1M12 5.5h2M1 6.5h1M12 6.5h2M1 7.5h1M12 7.5h2M1 8.5h1M12 8.5h2M1 9.5h1M12 9.5h2M1 10.5h1M12 10.5h2M1 11.5h1M12 11.5h2M1 12.5h1M3 12.5h2M6 12.5h8M1 13.5h13"/><path stroke="#404040" d="M2 4.5h11M2 5.5h1M2 6.5h1M2 7.5h1M2 8.5h1M2 9.5h1M2 10.5h1M2 11.5h10"/><path stroke="#a0a0a0" d="M3 5.5h9M3 6.5h9M3 7.5h9M3 8.5h9M3 9.5h9M3 10.5h9"/><path stroke="#008000" d="M2 12.5h1"/><path stroke="#ff0000" d="M5 12.5h1"/></svg><div class="t" style="left:165px;top:139px;max-width:69px;overflow:hidden">CPU 224 REL</div><div class="" style="left:138px;top:160px;width:8px;height:1px;background:repeating-linear-gradient(90deg,#808080 0 1px,transparent 1px 2px)"></div><div class="" style="left:129px;top:156px;width:9px;height:9px;border:1px solid #808080;background:#fff"></div><div class="" style="left:131px;top:160px;width:5px;height:1px;background:#000"></div><div class="" style="left:133px;top:158px;width:1px;height:5px;background:#000"></div><svg class="i" style="left:144px;top:152px" width="16" height="16" viewBox="0 0 16 16"><path stroke="#a0a0a0" d="M3 2.5h5M2 3.5h1M8 3.5h1M1 4.5h1M9 4.5h5M1 5.5h1M1 6.5h1M1 7.5h1M1 8.5h1M1 9.5h1M1 10.5h1M1 11.5h1M1 12.5h1M1 13.5h1"/><path stroke="#efef9c" d="M3 3.5h5M2 4.5h7M2 5.5h12M2 6.5h12M2 7.5h12M2 8.5h12M2 9.5h12M2 10.5h12M2 11.5h12M2 12.5h12"/><path stroke="#808000" d="M14 5.5h1M14 6.5h1M14 7.5h1M14 8.5h1M14 9.5h1M14 10.5h1M14 11.5h1M14 12.5h1M2 13.5h13"/><path stroke="#000" d="M15 6.5h1M15 7.5h1M15 8.5h1M15 9.5h1M15 10.5h1M15 11.5h1M15 12.5h1M15 13.5h1M2 14.5h14"/><path stroke="#000080" d="M4 6.5h8M2 7.5h3M11 7.5h3M2 8.5h1M4 8.5h1M11 8.5h1M13 8.5h1M2 9.5h3M11 9.5h3M4 10.5h8"/><path stroke="#c0c0c0" d="M5 7.5h5M5 8.5h1M5 9.5h1"/><path stroke="#fff" d="M10 7.5h1M6 8.5h5M6 9.5h5"/></svg><div class="t" style="left:165px;top:155px;max-width:69px;overflow:hidden" aria-label="程序块"><svg class="c"><use href="#c7a0b"/></svg><svg class="c"><use href="#c5e8f"/></svg><svg class="c"><use href="#c5757"/></svg></div><div class="" style="left:138px;top:176px;width:8px;height:1px;background:repeating-linear-gradient(90deg,#808080 0 1px,transparent 1px 2px)"></div><div class="" style="left:129px;top:172px;width:9px;height:9px;border:1px solid #808080;background:#fff"></div><div class="" style="left:131px;top:176px;width:5px;height:1px;background:#000"></div><div class="" style="left:133px;top:174px;width:1px;height:5px;background:#000"></div><svg class="i" style="left:144px;top:168px" width="16" height="16" viewBox="0 0 16 16"><path stroke="#a0a0a0" d="M3 2.5h5M2 3.5h1M8 3.5h1M1 4.5h1M9 4.5h5M1 5.5h1M1 6.5h1M1 7.5h1M1 8.5h1M1 9.5h1M1 10.5h1M1 11.5h1M1 12.5h1M1 13.5h1"/><path stroke="#efef9c" d="M3 3.5h5M2 4.5h7M2 5.5h12M2 6.5h12M2 7.5h12M2 8.5h12M2 9.5h12M2 10.5h12M2 11.5h12M2 12.5h12"/><path stroke="#808000" d="M14 5.5h1M14 6.5h1M14 7.5h1M14 8.5h1M14 9.5h1M14 10.5h1M14 11.5h1M14 12.5h1M2 13.5h13"/><path stroke="#000" d="M15 6.5h1M15 7.5h1M15 8.5h1M15 9.5h1M15 10.5h1M15 11.5h1M15 12.5h1M15 13.5h1M2 14.5h14"/><path stroke="#000" d="M5 7.5h8M4 8.5h2M12 8.5h1M3 9.5h2M12 9.5h1M4 10.5h2M12 10.5h1M5 11.5h8"/></svg><div class="t" style="left:165px;top:171px;max-width:69px;overflow:hidden" aria-label="符号表"><svg class="c"><use href="#c7b26"/></svg><svg class="c"><use href="#c53f7"/></svg><svg class="c"><use href="#c8868"/></svg></div><div class="" style="left:138px;top:192px;width:8px;height:1px;background:repeating-linear-gradient(90deg,#808080 0 1px,transparent 1px 2px)"></div><div class="" style="left:129px;top:188px;width:9px;height:9px;border:1px solid #808080;background:#fff"></div><div class="" style="left:131px;top:192px;width:5px;height:1px;background:#000"></div><div class="" style="left:133px;top:190px;width:1px;height:5px;background:#000"></div><svg class="i" style="left:144px;top:184px" width="16" height="16" viewBox="0 0 16 16"><path stroke="#a0a0a0" d="M3 2.5h5M2 3.5h1M8 3.5h1M1 4.5h1M9 4.5h5M1 5.5h1M1 6.5h1M1 7.5h1M1 8.5h1M1 9.5h1M1 10.5h1M1 11.5h1M1 12.5h1M1 13.5h1"/><path stroke="#efef9c" d="M3 3.5h5M2 4.5h7M2 5.5h12M2 6.5h12M2 7.5h12M2 8.5h12M2 9.5h12M2 10.5h12M2 11.5h12M2 12.5h12"/><path stroke="#808000" d="M14 5.5h1M14 6.5h1M14 7.5h1M14 8.5h1M14 9.5h1M14 10.5h1M14 11.5h1M14 12.5h1M2 13.5h13"/><path stroke="#000" d="M15 6.5h1M15 7.5h1M15 8.5h1M15 9.5h1M15 10.5h1M15 11.5h1M15 12.5h1M15 13.5h1M2 14.5h14"/><path stroke="#000" d="M5 6.5h7M5 7.5h2M10 7.5h2M5 8.5h2M10 8.5h2M5 9.5h2M10 9.5h2M5 10.5h2M10 10.5h2M5 11.5h7"/></svg><div class="t" style="left:165px;top:187px;max-width:69px;overflow:hidden" aria-label="状态表"><svg class="c"><use href="#c72b6"/></svg><svg class="c"><use href="#c6001"/></svg><svg class="c"><use href="#c8868"/></svg></div><div class="" style="left:138px;top:208px;width:8px;height:1px;background:repeating-linear-gradient(90deg,#808080 0 1px,transparent 1px 2px)"></div><div class="" style="left:129px;top:204px;width:9px;height:9px;border:1px solid #808080;background:#fff"></div><div class="" style="left:131px;top:208px;width:5px;height:1px;background:#000"></div><div class="" style="left:133px;top:206px;width:1px;height:5px;background:#000"></div><svg class="i" style="left:144px;top:200px" width="16" height="16" viewBox="0 0 16 16"><path stroke="#a0a0a0" d="M3 2.5h5M2 3.5h1M8 3.5h1M1 4.5h1M9 4.5h5M1 5.5h1M1 6.5h1M1 7.5h1M1 8.5h1M1 9.5h1M1 10.5h1M1 11.5h1M1 12.5h1M1 13.5h1"/><path stroke="#efef9c" d="M3 3.5h5M2 4.5h7M2 5.5h12M2 6.5h12M2 7.5h12M2 8.5h12M2 9.5h12M2 10.5h12M2 11.5h12M2 12.5h12"/><path stroke="#808000" d="M14 5.5h1M14 6.5h1M14 7.5h1M14 8.5h1M14 9.5h1M14 10.5h1M14 11.5h1M14 12.5h1M2 13.5h13"/><path stroke="#000" d="M15 6.5h1M15 7.5h1M15 8.5h1M15 9.5h1M15 10.5h1M15 11.5h1M15 12.5h1M15 13.5h1M2 14.5h14"/><path stroke="#000080" d="M4 6.5h8M2 7.5h3M11 7.5h3M2 8.5h1M4 8.5h1M11 8.5h1M13 8.5h1M2 9.5h3M11 9.5h3M4 10.5h8"/><path stroke="#c0c0c0" d="M5 7.5h5M5 8.5h1M5 9.5h1"/><path stroke="#fff" d="M10 7.5h1M6 8.5h5M6 9.5h5"/></svg><div class="t" style="left:165px;top:203px;max-width:69px;overflow:hidden" aria-label="数据块"><svg class="c"><use href="#c6570"/></svg><svg class="c"><use href="#c636e"/></svg><svg class="c"><use href="#c5757"/></svg></div><div class="" style="left:138px;top:224px;width:8px;height:1px;background:repeating-linear-gradient(90deg,#808080 0 1px,transparent 1px 2px)"></div><div class="" style="left:129px;top:220px;width:9px;height:9px;border:1px solid #808080;background:#fff"></div><div class="" style="left:131px;top:224px;width:5px;height:1px;background:#000"></div><div class="" style="left:133px;top:222px;width:1px;height:5px;background:#000"></div><svg class="i" style="left:144px;top:216px" width="16" height="16" viewBox="0 0 16 16"><path stroke="#000" d="M0 0.5h9M0 1.5h1M8 1.5h2M0 2.5h1M3 2.5h9M0 3.5h1M3 3.5h1M11 3.5h2M0 4.5h1M3 4.5h1M6 4.5h9M0 5.5h1M3 5.5h1M6 5.5h1M14 5.5h1M0 6.5h1M3 6.5h1M6 6.5h1M14 6.5h1M0 7.5h1M3 7.5h1M6 7.5h1M14 7.5h1M0 8.5h1M3 8.5h1M6 8.5h1M14 8.5h1M0 9.5h4M6 9.5h1M14 9.5h1M3 10.5h1M6 10.5h1M14 10.5h1M3 11.5h4M14 11.5h1M6 12.5h1M14 12.5h1M6 13.5h1M14 13.5h1M6 14.5h9"/><path stroke="#404040" d="M1 1.5h7M1 2.5h1M1 3.5h1M4 3.5h7M1 4.5h1M4 4.5h1M1 5.5h1M4 5.5h1M1 6.5h1M4 6.5h1M1 7.5h1M4 7.5h1M1 8.5h1M4 8.5h1M4 9.5h1M4 10.5h1"/><path stroke="#fff" d="M7 5.5h7M7 6.5h1M13 6.5h1M7 7.5h7M7 8.5h1M13 8.5h1M7 9.5h7M7 10.5h1M13 10.5h1M7 11.5h7M7 12.5h1M13 12.5h1M7 13.5h7"/><path stroke="#000080" d="M8 6.5h5M8 8.5h5M8 10.5h5M8 12.5h5"/></svg><div class="t" style="left:165px;top:219px;max-width:69px;overflow:hidden" aria-label="系统块"><svg class="c"><use href="#c7cfb"/></svg><svg class="c"><use href="#c7edf"/></svg><svg class="c"><use href="#c5757"/></svg></div><div class="" style="left:138px;top:240px;width:8px;height:1px;background:repeating-linear-gradient(90deg,#808080 0 1px,transparent 1px 2px)"></div><div class="" style="left:129px;top:236px;width:9px;height:9px;border:1px solid #808080;background:#fff"></div><div class="" style="left:131px;top:240px;width:5px;height:1px;background:#000"></div><div class="" style="left:133px;top:238px;width:1px;height:5px;background:#000"></div><svg class="i" style="left:144px;top:232px" width="16" height="16" viewBox="0 0 16 16"><path stroke="#000" d="M0 0.5h8M0 1.5h1M7 1.5h2M0 2.5h1M5 2.5h8M0 3.5h1M5 3.5h1M12 3.5h2M0 4.5h1M2 4.5h1M5 4.5h1M9 4.5h1M12 4.5h1M14 4.5h1M0 5.5h3M5 5.5h1M9 5.5h2M12 5.5h4M0 6.5h12M15 6.5h1M0 7.5h3M5 7.5h1M9 7.5h2M15 7.5h1M0 8.5h1M2 8.5h1M5 8.5h1M9 8.5h1M15 8.5h1M0 9.5h1M5 9.5h1M15 9.5h1M0 10.5h6M15 10.5h1M5 11.5h1M15 11.5h1M5 12.5h1M15 12.5h1M5 13.5h11"/><path stroke="#ffff99" d="M1 1.5h6M1 2.5h4M1 3.5h4M6 3.5h6M1 4.5h1M3 4.5h2M6 4.5h3M10 4.5h2M3 5.5h2M6 5.5h3M11 5.5h1M12 6.5h3M3 7.5h2M6 7.5h3M11 7.5h1M13 7.5h1M1 8.5h1M3 8.5h2M6 8.5h3M10 8.5h2M13 8.5h1M1 9.5h4M6 9.5h1M6 10.5h3M10 10.5h2M13 10.5h1M6 11.5h1M6 12.5h3M10 12.5h2M13 12.5h1"/><path stroke="#fff" d="M13 4.5h1"/><path stroke="#c8c860" d="M12 7.5h1M14 7.5h1M12 8.5h1M14 8.5h1M7 9.5h8M9 10.5h1M12 10.5h1M14 10.5h1M7 11.5h8M9 12.5h1M12 12.5h1M14 12.5h1"/></svg><div class="t" style="left:165px;top:235px;max-width:69px;overflow:hidden" aria-label="交叉引用"><svg class="c"><use href="#c4ea4"/></svg><svg class="c"><use href="#c53c9"/></svg><svg class="c"><use href="#c5f15"/></svg><svg class="c"><use href="#c7528"/></svg></div><div class="" style="left:138px;top:256px;width:8px;height:1px;background:repeating-linear-gradient(90deg,#808080 0 1px,transparent 1px 2px)"></div><div class="" style="left:129px;top:252px;width:9px;height:9px;border:1px solid #808080;background:#fff"></div><div class="" style="left:131px;top:256px;width:5px;height:1px;background:#000"></div><div class="" style="left:133px;top:254px;width:1px;height:5px;background:#000"></div><svg class="i" style="left:144px;top:248px" width="16" height="16" viewBox="0 0 16 16"><path stroke="#000" d="M9 1.5h5M8 2.5h1M14 2.5h1M7 3.5h1M10 3.5h1M14 3.5h1M7 4.5h1M13 4.5h2M6 5.5h2M13 5.5h1M5 6.5h1M8 6.5h5M4 7.5h1M8 7.5h1M2 8.5h2M8 8.5h1M1 9.5h1M7 9.5h1M0 10.5h1M6 10.5h1M0 11.5h1M5 11.5h1M0 12.5h1M4 12.5h1M1 13.5h3"/><path stroke="#a0a0a0" d="M9 2.5h1M13 2.5h1M8 3.5h1M11 3.5h1M13 3.5h1M10 4.5h1M12 4.5h1M8 5.5h1M12 5.5h1M7 7.5h1M6 8.5h2M3 9.5h1M5 9.5h2M2 10.5h1M3 11.5h1"/><path stroke="#c0c0c0" d="M10 2.5h3M9 3.5h1M12 3.5h1M8 4.5h2M11 4.5h1M9 5.5h3"/><path stroke="#404040" d="M6 6.5h2M5 7.5h2M4 8.5h2M2 9.5h1M4 9.5h1M1 10.5h1M3 10.5h3M1 11.5h2M4 11.5h1M1 12.5h3"/></svg><div class="t" style="left:165px;top:251px;max-width:69px;overflow:hidden" aria-label="通信"><svg class="c"><use href="#c901a"/></svg><svg class="c"><use href="#c4fe1"/></svg></div><div class="" style="left:138px;top:272px;width:8px;height:1px;background:repeating-linear-gradient(90deg,#808080 0 1px,transparent 1px 2px)"></div><div class="" style="left:129px;top:268px;width:9px;height:9px;border:1px solid #808080;background:#fff"></div><div class="" style="left:131px;top:272px;width:5px;height:1px;background:#000"></div><div class="" style="left:133px;top:270px;width:1px;height:5px;background:#000"></div><svg class="i" style="left:144px;top:264px" width="16" height="16" viewBox="0 0 16 16"><path stroke="#a0a0a0" d="M3 2.5h5M2 3.5h1M8 3.5h1M1 4.5h1M9 4.5h5M1 5.5h1M1 6.5h1M1 7.5h1M1 8.5h1M1 9.5h1M1 10.5h1M1 11.5h1M1 12.5h1M1 13.5h1"/><path stroke="#efef9c" d="M3 3.5h5M2 4.5h7M2 5.5h12M2 6.5h12M2 7.5h12M2 8.5h12M2 9.5h12M2 10.5h12M2 11.5h12M2 12.5h12"/><path stroke="#808000" d="M14 5.5h1M14 6.5h1M14 7.5h1M14 8.5h1M14 9.5h1M14 10.5h1M14 11.5h1M14 12.5h1M2 13.5h13"/><path stroke="#000" d="M15 6.5h1M15 7.5h1M15 8.5h1M15 9.5h1M15 10.5h1M15 11.5h1M15 12.5h1M15 13.5h1M2 14.5h14"/><path stroke="#fff" d="M10 3.5h1M12 3.5h1M11 4.5h1M10 5.5h1M12 5.5h1"/><path stroke="#000" d="M5 4.5h1M6 5.5h1M6 6.5h2M7 7.5h2M8 8.5h2M9 9.5h2M10 10.5h2M11 11.5h1"/></svg><div class="t" style="left:165px;top:267px;max-width:69px;overflow:hidden" aria-label="向导"><svg class="c"><use href="#c5411"/></svg><svg class="c"><use href="#c5bfc"/></svg></div><div class="" style="left:138px;top:288px;width:8px;height:1px;background:repeating-linear-gradient(90deg,#808080 0 1px,transparent 1px 2px)"></div><div class="" style="left:129px;top:284px;width:9px;height:9px;border:1px solid #808080;background:#fff"></div><div class="" style="left:131px;top:288px;width:5px;height:1px;background:#000"></div><div class="" style="left:133px;top:286px;width:1px;height:5px;background:#000"></div><svg class="i" style="left:144px;top:280px" width="16" height="16" viewBox="0 0 16 16"><path stroke="#a0a0a0" d="M3 2.5h5M2 3.5h1M8 3.5h1M1 4.5h1M9 4.5h5M1 5.5h1M1 6.5h1M1 7.5h1M1 8.5h1M1 9.5h1M1 10.5h1M1 11.5h1M1 12.5h1M1 13.5h1"/><path stroke="#efef9c" d="M3 3.5h5M2 4.5h7M2 5.5h12M2 6.5h12M2 7.5h12M2 8.5h12M2 9.5h12M2 10.5h12M2 11.5h12M2 12.5h12"/><path stroke="#808000" d="M14 5.5h1M14 6.5h1M14 7.5h1M14 8.5h1M14 9.5h1M14 10.5h1M14 11.5h1M14 12.5h1M2 13.5h13"/><path stroke="#000" d="M15 6.5h1M15 7.5h1M15 8.5h1M15 9.5h1M15 10.5h1M15 11.5h1M15 12.5h1M15 13.5h1M2 14.5h14"/><path stroke="#a0a0a0" d="M6 1.5h7M5 2.5h1M8 2.5h3M13 2.5h1M4 3.5h1M6 3.5h1M12 3.5h1"/><path stroke="#404040" d="M6 2.5h2M11 2.5h2M5 3.5h1M13 3.5h1"/><path stroke="#ff0000" d="M8 3.5h3M8 4.5h1M10 4.5h1M8 5.5h1M10 5.5h1M8 6.5h1M10 6.5h1M8 7.5h1M10 7.5h1M8 8.5h1M10 8.5h1M8 9.5h1M10 9.5h1M8 10.5h1M10 10.5h1M8 11.5h1M10 11.5h1M8 12.5h1M10 12.5h1M8 13.5h3"/><path stroke="#ffcc33" d="M9 4.5h1M9 5.5h1M9 6.5h1M9 7.5h1M9 8.5h1M9 9.5h1M9 10.5h1M9 11.5h1M9 12.5h1"/></svg><div class="t" style="left:165px;top:283px;max-width:69px;overflow:hidden" aria-label="工具"><svg class="c"><use href="#c5de5"/></svg><svg class="c"><use href="#c5177"/></svg></div><div class="" style="left:119px;top:304px;width:7px;height:1px;background:repeating-linear-gradient(90deg,#808080 0 1px,transparent 1px 2px)"></div><div class="" style="left:110px;top:300px;width:9px;height:9px;border:1px solid #808080;background:#fff"></div><div class="" style="left:112px;top:304px;width:5px;height:1px;background:#000"></div><svg class="i" style="left:125px;top:296px" width="16" height="16" viewBox="0 0 16 16"><path stroke="#a0a0a0" d="M3 2.5h5M2 3.5h1M8 3.5h1M1 4.5h1M9 4.5h5M1 5.5h1M1 6.5h1M1 7.5h1M1 8.5h1M1 9.5h1M1 10.5h1M1 11.5h1M1 12.5h1M1 13.5h1"/><path stroke="#efef9c" d="M3 3.5h5M2 4.5h7M2 5.5h12M2 6.5h12M2 7.5h12M2 8.5h12M2 9.5h12M2 10.5h12M2 11.5h12M2 12.5h12"/><path stroke="#808000" d="M14 5.5h1M14 6.5h1M14 7.5h1M14 8.5h1M14 9.5h1M14 10.5h1M14 11.5h1M14 12.5h1M2 13.5h13"/><path stroke="#000" d="M15 6.5h1M15 7.5h1M15 8.5h1M15 9.5h1M15 10.5h1M15 11.5h1M15 12.5h1M15 13.5h1M2 14.5h14"/><path stroke="#000" d="M7 5.5h2M7 6.5h2M7 7.5h2M4 8.5h8M5 9.5h6M6 10.5h4M7 11.5h2"/></svg><div class="t" style="left:146px;top:299px;max-width:88px;overflow:hidden" aria-label="指令"><svg class="c"><use href="#c6307"/></svg><svg class="c"><use href="#c4ee4"/></svg></div><div class="" style="left:134px;top:320px;width:12px;height:1px;background:repeating-linear-gradient(90deg,#808080 0 1px,transparent 1px 2px)"></div><svg class="i" style="left:144px;top:312px" width="16" height="16" viewBox="0 0 16 16"><path stroke="#a0a0a0" d="M3 2.5h5M2 3.5h1M8 3.5h1M1 4.5h1M9 4.5h5M1 5.5h1M1 6.5h1M1 7.5h1M1 8.5h1M1 9.5h1M1 10.5h1M1 11.5h1M1 12.5h1M1 13.5h1"/><path stroke="#efef9c" d="M3 3.5h5M2 4.5h7M2 5.5h12M2 6.5h12M2 7.5h12M2 8.5h12M2 9.5h12M2 10.5h12M2 11.5h12M2 12.5h12"/><path stroke="#808000" d="M14 5.5h1M14 6.5h1M14 7.5h1M14 8.5h1M14 9.5h1M14 10.5h1M14 11.5h1M14 12.5h1M2 13.5h13"/><path stroke="#000" d="M15 6.5h1M15 7.5h1M15 8.5h1M15 9.5h1M15 10.5h1M15 11.5h1M15 12.5h1M15 13.5h1M2 14.5h14"/><path stroke="#0000ff" d="M7 6.5h1M5 7.5h1M7 7.5h1M9 7.5h1M6 8.5h3M4 9.5h3M8 9.5h3M6 10.5h3M5 11.5h1M7 11.5h1M9 11.5h1M7 12.5h1"/><path stroke="#fff" d="M7 9.5h1"/></svg><div class="t" style="left:165px;top:315px;max-width:69px;overflow:hidden" aria-label="收藏夹"><svg class="c"><use href="#c6536"/></svg><svg class="c"><use href="#c85cf"/></svg><svg class="c"><use href="#c5939"/></svg></div><div class="" style="left:138px;top:336px;width:8px;height:1px;background:repeating-linear-gradient(90deg,#808080 0 1px,transparent 1px 2px)"></div><div class="" style="left:129px;top:332px;width:9px;height:9px;border:1px solid #808080;background:#fff"></div><div class="" style="left:131px;top:336px;width:5px;height:1px;background:#000"></div><div class="" style="left:133px;top:334px;width:1px;height:5px;background:#000"></div><svg class="i" style="left:144px;top:328px" width="16" height="16" viewBox="0 0 16 16"><path stroke="#a0a0a0" d="M3 2.5h5M2 3.5h1M8 3.5h1M1 4.5h1M9 4.5h5M1 5.5h1M1 6.5h1M1 7.5h1M1 8.5h1M1 9.5h1M1 10.5h1M1 11.5h1M1 12.5h1M1 13.5h1"/><path stroke="#efef9c" d="M3 3.5h5M2 4.5h7M2 5.5h12M2 6.5h12M2 7.5h12M2 8.5h12M2 9.5h12M2 10.5h12M2 11.5h12M2 12.5h12"/><path stroke="#808000" d="M14 5.5h1M14 6.5h1M14 7.5h1M14 8.5h1M14 9.5h1M14 10.5h1M14 11.5h1M14 12.5h1M2 13.5h13"/><path stroke="#000" d="M15 6.5h1M15 7.5h1M15 8.5h1M15 9.5h1M15 10.5h1M15 11.5h1M15 12.5h1M15 13.5h1M2 14.5h14"/><path stroke="#000" d="M5 7.5h2M9 7.5h2M5 8.5h2M9 8.5h2M2 9.5h5M9 9.5h2M5 10.5h2M9 10.5h2M5 11.5h2M9 11.5h2"/></svg><div class="t" style="left:165px;top:331px;max-width:69px;overflow:hidden" aria-label="位逻辑"><svg class="c"><use href="#c4f4d"/></svg><svg class="c"><use href="#c903b"/></svg><svg class="c"><use href="#c8f91"/></svg></div><div class="" style="left:138px;top:352px;width:8px;height:1px;background:repeating-linear-gradient(90deg,#808080 0 1px,transparent 1px 2px)"></div><div class="" style="left:129px;top:348px;width:9px;height:9px;border:1px solid #808080;background:#fff"></div><div class="" style="left:131px;top:352px;width:5px;height:1px;background:#000"></div><div class="" style="left:133px;top:350px;width:1px;height:5px;background:#000"></div><svg class="i" style="left:144px;top:344px" width="16" height="16" viewBox="0 0 16 16"><path stroke="#a0a0a0" d="M3 2.5h5M2 3.5h1M8 3.5h1M1 4.5h1M9 4.5h5M1 5.5h1M1 6.5h1M1 7.5h1M1 8.5h1M1 9.5h1M1 10.5h1M1 11.5h1M1 12.5h1M1 13.5h1"/><path stroke="#efef9c" d="M3 3.5h5M2 4.5h7M2 5.5h12M2 6.5h12M2 7.5h12M2 8.5h12M2 9.5h12M2 10.5h12M2 11.5h12M2 12.5h12"/><path stroke="#808000" d="M14 5.5h1M14 6.5h1M14 7.5h1M14 8.5h1M14 9.5h1M14 10.5h1M14 11.5h1M14 12.5h1M2 13.5h13"/><path stroke="#000" d="M15 6.5h1M15 7.5h1M15 8.5h1M15 9.5h1M15 10.5h1M15 11.5h1M15 12.5h1M15 13.5h1M2 14.5h14"/><path stroke="#000" d="M6 5.5h4M5 6.5h1M10 6.5h1M4 7.5h1M7 7.5h1M11 7.5h1M4 8.5h1M7 8.5h1M11 8.5h1M4 9.5h1M8 9.5h1M11 9.5h1M5 10.5h1M10 10.5h1M6 11.5h4"/><path stroke="#a0a0a0" d="M6 6.5h1M9 6.5h1M5 7.5h1M10 7.5h1M5 8.5h1M10 8.5h1M5 9.5h1M10 9.5h1M6 10.5h1M9 10.5h1"/><path stroke="#c0c0c0" d="M7 6.5h1M6 7.5h1M6 8.5h1M6 9.5h2M7 10.5h1"/><path stroke="#fff" d="M8 6.5h1M8 7.5h2M8 8.5h2M9 9.5h1M8 10.5h1"/></svg><div class="t" style="left:165px;top:347px;max-width:69px;overflow:hidden" aria-label="时钟"><svg class="c"><use href="#c65f6"/></svg><svg class="c"><use href="#c949f"/></svg></div><div class="" style="left:138px;top:368px;width:8px;height:1px;background:repeating-linear-gradient(90deg,#808080 0 1px,transparent 1px 2px)"></div><div class="" style="left:129px;top:364px;width:9px;height:9px;border:1px solid #808080;background:#fff"></div><div class="" style="left:131px;top:368px;width:5px;height:1px;background:#000"></div><div class="" style="left:133px;top:366px;width:1px;height:5px;background:#000"></div><svg class="i" style="left:144px;top:360px" width="16" height="16" viewBox="0 0 16 16"><path stroke="#a0a0a0" d="M3 2.5h5M2 3.5h1M8 3.5h1M1 4.5h1M9 4.5h5M1 5.5h1M1 6.5h1M1 7.5h1M1 8.5h1M1 9.5h1M1 10.5h1M1 11.5h1M1 12.5h1M1 13.5h1"/><path stroke="#efef9c" d="M3 3.5h5M2 4.5h7M2 5.5h12M2 6.5h12M2 7.5h12M2 8.5h12M2 9.5h12M2 10.5h12M2 11.5h12M2 12.5h12"/><path stroke="#808000" d="M14 5.5h1M14 6.5h1M14 7.5h1M14 8.5h1M14 9.5h1M14 10.5h1M14 11.5h1M14 12.5h1M2 13.5h13"/><path stroke="#000" d="M15 6.5h1M15 7.5h1M15 8.5h1M15 9.5h1M15 10.5h1M15 11.5h1M15 12.5h1M15 13.5h1M2 14.5h14"/><path stroke="#000" d="M8 5.5h2M7 6.5h2M6 7.5h2M5 8.5h6M8 9.5h2M7 10.5h2M6 11.5h2M5 12.5h1"/></svg><div class="t" style="left:165px;top:363px;max-width:69px;overflow:hidden" aria-label="通信"><svg class="c"><use href="#c901a"/></svg><svg class="c"><use href="#c4fe1"/></svg></div><div class="" style="left:138px;top:384px;width:8px;height:1px;background:repeating-linear-gradient(90deg,#808080 0 1px,transparent 1px 2px)"></div><div class="" style="left:129px;top:380px;width:9px;height:9px;border:1px solid #808080;background:#fff"></div><div class="" style="left:131px;top:384px;width:5px;height:1px;background:#000"></div><div class="" style="left:133px;top:382px;width:1px;height:5px;background:#000"></div><svg class="i" style="left:144px;top:376px" width="16" height="16" viewBox="0 0 16 16"><path stroke="#a0a0a0" d="M3 2.5h5M2 3.5h1M8 3.5h1M1 4.5h1M9 4.5h5M1 5.5h1M1 6.5h1M1 7.5h1M1 8.5h1M1 9.5h1M1 10.5h1M1 11.5h1M1 12.5h1M1 13.5h1"/><path stroke="#efef9c" d="M3 3.5h5M2 4.5h7M2 5.5h12M2 6.5h12M2 7.5h12M2 8.5h12M2 9.5h12M2 10.5h12M2 11.5h12M2 12.5h12"/><path stroke="#808000" d="M14 5.5h1M14 6.5h1M14 7.5h1M14 8.5h1M14 9.5h1M14 10.5h1M14 11.5h1M14 12.5h1M2 13.5h13"/><path stroke="#000" d="M15 6.5h1M15 7.5h1M15 8.5h1M15 9.5h1M15 10.5h1M15 11.5h1M15 12.5h1M15 13.5h1M2 14.5h14"/><path stroke="#000" d="M9 6.5h2M7 7.5h2M5 8.5h2M7 9.5h2M9 10.5h2M11 11.5h1"/></svg><div class="t" style="left:165px;top:379px;max-width:69px;overflow:hidden" aria-label="比较"><svg class="c"><use href="#c6bd4"/></svg><svg class="c"><use href="#c8f83"/></svg></div><div class="" style="left:138px;top:400px;width:8px;height:1px;background:repeating-linear-gradient(90deg,#808080 0 1px,transparent 1px 2px)"></div><div class="" style="left:129px;top:396px;width:9px;height:9px;border:1px solid #808080;background:#fff"></div><div class="" style="left:131px;top:400px;width:5px;height:1px;background:#000"></div><div class="" style="left:133px;top:398px;width:1px;height:5px;background:#000"></div><svg class="i" style="left:144px;top:392px" width="16" height="16" viewBox="0 0 16 16"><path stroke="#a0a0a0" d="M3 2.5h5M2 3.5h1M8 3.5h1M1 4.5h1M9 4.5h5M1 5.5h1M1 6.5h1M1 7.5h1M1 8.5h1M1 9.5h1M1 10.5h1M1 11.5h1M1 12.5h1M1 13.5h1"/><path stroke="#efef9c" d="M3 3.5h5M2 4.5h7M2 5.5h12M2 6.5h12M2 7.5h12M2 8.5h12M2 9.5h12M2 10.5h12M2 11.5h12M2 12.5h12"/><path stroke="#808000" d="M14 5.5h1M14 6.5h1M14 7.5h1M14 8.5h1M14 9.5h1M14 10.5h1M14 11.5h1M14 12.5h1M2 13.5h13"/><path stroke="#000" d="M15 6.5h1M15 7.5h1M15 8.5h1M15 9.5h1M15 10.5h1M15 11.5h1M15 12.5h1M15 13.5h1M2 14.5h14"/><path stroke="#000" d="M5 6.5h1M4 7.5h1M6 7.5h1M3 8.5h5M9 8.5h5M10 9.5h1M12 9.5h1M11 10.5h1"/><path stroke="#fff" d="M5 7.5h1M11 9.5h1"/></svg><div class="t" style="left:165px;top:395px;max-width:69px;overflow:hidden" aria-label="转换"><svg class="c"><use href="#c8f6c"/></svg><svg class="c"><use href="#c6362"/></svg></div><div class="" style="left:138px;top:416px;width:8px;height:1px;background:repeating-linear-gradient(90deg,#808080 0 1px,transparent 1px 2px)"></div><div class="" style="left:129px;top:412px;width:9px;height:9px;border:1px solid #808080;background:#fff"></div><div class="" style="left:131px;top:416px;width:5px;height:1px;background:#000"></div><div class="" style="left:133px;top:414px;width:1px;height:5px;background:#000"></div><svg class="i" style="left:144px;top:408px" width="16" height="16" viewBox="0 0 16 16"><path stroke="#a0a0a0" d="M3 2.5h5M2 3.5h1M8 3.5h1M1 4.5h1M9 4.5h5M1 5.5h1M1 6.5h1M1 7.5h1M1 8.5h1M1 9.5h1M1 10.5h1M1 11.5h1M1 12.5h1M1 13.5h1"/><path stroke="#efef9c" d="M3 3.5h5M2 4.5h7M2 5.5h12M2 6.5h12M2 7.5h12M2 8.5h12M2 9.5h12M2 10.5h12M2 11.5h12M2 12.5h12"/><path stroke="#808000" d="M14 5.5h1M14 6.5h1M14 7.5h1M14 8.5h1M14 9.5h1M14 10.5h1M14 11.5h1M14 12.5h1M2 13.5h13"/><path stroke="#000" d="M15 6.5h1M15 7.5h1M15 8.5h1M15 9.5h1M15 10.5h1M15 11.5h1M15 12.5h1M15 13.5h1M2 14.5h14"/><path stroke="#000" d="M10 6.5h2M4 7.5h1M9 7.5h3M4 8.5h1M10 8.5h2M2 9.5h5M10 9.5h2M4 10.5h1M10 10.5h2M4 11.5h1M10 11.5h2"/></svg><div class="t" style="left:165px;top:411px;max-width:69px;overflow:hidden" aria-label="计数器"><svg class="c"><use href="#c8ba1"/></svg><svg class="c"><use href="#c6570"/></svg><svg class="c"><use href="#c5668"/></svg></div><div class="" style="left:138px;top:432px;width:8px;height:1px;background:repeating-linear-gradient(90deg,#808080 0 1px,transparent 1px 2px)"></div><div class="" style="left:129px;top:428px;width:9px;height:9px;border:1px solid #808080;background:#fff"></div><div class="" style="left:131px;top:432px;width:5px;height:1px;background:#000"></div><div class="" style="left:133px;top:430px;width:1px;height:5px;background:#000"></div><svg class="i" style="left:144px;top:424px" width="16" height="16" viewBox="0 0 16 16"><path stroke="#a0a0a0" d="M3 2.5h5M2 3.5h1M8 3.5h1M1 4.5h1M9 4.5h5M1 5.5h1M1 6.5h1M1 7.5h1M1 8.5h1M1 9.5h1M1 10.5h1M1 11.5h1M1 12.5h1M1 13.5h1"/><path stroke="#efef9c" d="M3 3.5h5M2 4.5h7M2 5.5h12M2 6.5h12M2 7.5h12M2 8.5h12M2 9.5h12M2 10.5h12M2 11.5h12M2 12.5h12"/><path stroke="#808000" d="M14 5.5h1M14 6.5h1M14 7.5h1M14 8.5h1M14 9.5h1M14 10.5h1M14 11.5h1M14 12.5h1M2 13.5h13"/><path stroke="#000" d="M15 6.5h1M15 7.5h1M15 8.5h1M15 9.5h1M15 10.5h1M15 11.5h1M15 12.5h1M15 13.5h1M2 14.5h14"/><path stroke="#000" d="M4 6.5h1M9 6.5h3M3 7.5h3M9 7.5h1M12 7.5h1M4 8.5h1M9 8.5h3M9 9.5h1M11 9.5h1M3 10.5h3M9 10.5h1M12 10.5h1"/></svg><div class="t" style="left:165px;top:427px;max-width:69px;overflow:hidden" aria-label="浮点数计算"><svg class="c"><use href="#c6d6e"/></svg><svg class="c"><use href="#c70b9"/></svg><svg class="c"><use href="#c6570"/></svg><svg class="c"><use href="#c8ba1"/></svg><svg class="c"><use href="#c7b97"/></svg></div><div class="" style="left:138px;top:448px;width:8px;height:1px;background:repeating-linear-gradient(90deg,#808080 0 1px,transparent 1px 2px)"></div><div class="" style="left:129px;top:444px;width:9px;height:9px;border:1px solid #808080;background:#fff"></div><div class="" style="left:131px;top:448px;width:5px;height:1px;background:#000"></div><div class="" style="left:133px;top:446px;width:1px;height:5px;background:#000"></div><svg class="i" style="left:144px;top:440px" width="16" height="16" viewBox="0 0 16 16"><path stroke="#a0a0a0" d="M3 2.5h5M2 3.5h1M8 3.5h1M1 4.5h1M9 4.5h5M1 5.5h1M1 6.5h1M1 7.5h1M1 8.5h1M1 9.5h1M1 10.5h1M1 11.5h1M1 12.5h1M1 13.5h1"/><path stroke="#efef9c" d="M3 3.5h5M2 4.5h7M2 5.5h12M2 6.5h12M2 7.5h12M2 8.5h12M2 9.5h12M2 10.5h12M2 11.5h12M2 12.5h12"/><path stroke="#808000" d="M14 5.5h1M14 6.5h1M14 7.5h1M14 8.5h1M14 9.5h1M14 10.5h1M14 11.5h1M14 12.5h1M2 13.5h13"/><path stroke="#000" d="M15 6.5h1M15 7.5h1M15 8.5h1M15 9.5h1M15 10.5h1M15 11.5h1M15 12.5h1M15 13.5h1M2 14.5h14"/><path stroke="#000" d="M4 6.5h1M9 6.5h3M3 7.5h3M10 7.5h1M4 8.5h1M10 8.5h1M10 9.5h1M3 10.5h3M9 10.5h3"/></svg><div class="t" style="left:165px;top:443px;max-width:69px;overflow:hidden" aria-label="整数计算"><svg class="c"><use href="#c6574"/></svg><svg class="c"><use href="#c6570"/></svg><svg class="c"><use href="#c8ba1"/></svg><svg class="c"><use href="#c7b97"/></svg></div><div class="" style="left:138px;top:464px;width:8px;height:1px;background:repeating-linear-gradient(90deg,#808080 0 1px,transparent 1px 2px)"></div><div class="" style="left:129px;top:460px;width:9px;height:9px;border:1px solid #808080;background:#fff"></div><div class="" style="left:131px;top:464px;width:5px;height:1px;background:#000"></div><div class="" style="left:133px;top:462px;width:1px;height:5px;background:#000"></div><svg class="i" style="left:144px;top:456px" width="16" height="16" viewBox="0 0 16 16"><path stroke="#a0a0a0" d="M3 2.5h5M2 3.5h1M8 3.5h1M1 4.5h1M9 4.5h5M1 5.5h1M1 6.5h1M1 7.5h1M1 8.5h1M1 9.5h1M1 10.5h1M1 11.5h1M1 12.5h1M1 13.5h1"/><path stroke="#efef9c" d="M3 3.5h5M2 4.5h7M2 5.5h12M2 6.5h12M2 7.5h12M2 8.5h12M2 9.5h12M2 10.5h12M2 11.5h12M2 12.5h12"/><path stroke="#808000" d="M14 5.5h1M14 6.5h1M14 7.5h1M14 8.5h1M14 9.5h1M14 10.5h1M14 11.5h1M14 12.5h1M2 13.5h13"/><path stroke="#000" d="M15 6.5h1M15 7.5h1M15 8.5h1M15 9.5h1M15 10.5h1M15 11.5h1M15 12.5h1M15 13.5h1M2 14.5h14"/><path stroke="#000" d="M4 6.5h2M7 6.5h2M10 6.5h2M4 7.5h2M7 7.5h2M10 7.5h2M4 8.5h2M7 8.5h2M10 8.5h2M4 9.5h2M7 9.5h2M10 9.5h2M4 10.5h2M7 10.5h2M10 10.5h2M4 11.5h2M7 11.5h2M10 11.5h2"/></svg><div class="t" style="left:165px;top:459px;max-width:69px;overflow:hidden" aria-label="中断"><svg class="c"><use href="#c4e2d"/></svg><svg class="c"><use href="#c65ad"/></svg></div><div class="" style="left:138px;top:480px;width:8px;height:1px;background:repeating-linear-gradient(90deg,#808080 0 1px,transparent 1px 2px)"></div><div class="" style="left:129px;top:476px;width:9px;height:9px;border:1px solid #808080;background:#fff"></div><div class="" style="left:131px;top:480px;width:5px;height:1px;background:#000"></div><div class="" style="left:133px;top:478px;width:1px;height:5px;background:#000"></div><svg class="i" style="left:144px;top:472px" width="16" height="16" viewBox="0 0 16 16"><path stroke="#a0a0a0" d="M3 2.5h5M2 3.5h1M8 3.5h1M1 4.5h1M9 4.5h5M1 5.5h1M1 6.5h1M1 7.5h1M1 8.5h1M1 9.5h1M1 10.5h1M1 11.5h1M1 12.5h1M1 13.5h1"/><path stroke="#efef9c" d="M3 3.5h5M2 4.5h7M2 5.5h12M2 6.5h12M2 7.5h12M2 8.5h12M2 9.5h12M2 10.5h12M2 11.5h12M2 12.5h12"/><path stroke="#808000" d="M14 5.5h1M14 6.5h1M14 7.5h1M14 8.5h1M14 9.5h1M14 10.5h1M14 11.5h1M14 12.5h1M2 13.5h13"/><path stroke="#000" d="M15 6.5h1M15 7.5h1M15 8.5h1M15 9.5h1M15 10.5h1M15 11.5h1M15 12.5h1M15 13.5h1M2 14.5h14"/><path stroke="#000" d="M5 6.5h1M8 6.5h2M5 7.5h1M8 7.5h2M4 9.5h2M8 9.5h1M4 10.5h2M8 10.5h1"/></svg><div class="t" style="left:165px;top:475px;max-width:69px;overflow:hidden" aria-label="逻辑运算"><svg class="c"><use href="#c903b"/></svg><svg class="c"><use href="#c8f91"/></svg><svg class="c"><use href="#c8fd0"/></svg><svg class="c"><use href="#c7b97"/></svg></div><div class="" style="left:138px;top:496px;width:8px;height:1px;background:repeating-linear-gradient(90deg,#808080 0 1px,transparent 1px 2px)"></div><div class="" style="left:129px;top:492px;width:9px;height:9px;border:1px solid #808080;background:#fff"></div><div class="" style="left:131px;top:496px;width:5px;height:1px;background:#000"></div><div class="" style="left:133px;top:494px;width:1px;height:5px;background:#000"></div><svg class="i" style="left:144px;top:488px" width="16" height="16" viewBox="0 0 16 16"><path stroke="#a0a0a0" d="M3 2.5h5M2 3.5h1M8 3.5h1M1 4.5h1M9 4.5h5M1 5.5h1M1 6.5h1M1 7.5h1M1 8.5h1M1 9.5h1M1 10.5h1M1 11.5h1M1 12.5h1M1 13.5h1"/><path stroke="#efef9c" d="M3 3.5h5M2 4.5h7M2 5.5h12M2 6.5h12M2 7.5h12M2 8.5h12M2 9.5h12M2 10.5h12M2 11.5h12M2 12.5h12"/><path stroke="#808000" d="M14 5.5h1M14 6.5h1M14 7.5h1M14 8.5h1M14 9.5h1M14 10.5h1M14 11.5h1M14 12.5h1M2 13.5h13"/><path stroke="#000" d="M15 6.5h1M15 7.5h1M15 8.5h1M15 9.5h1M15 10.5h1M15 11.5h1M15 12.5h1M15 13.5h1M2 14.5h14"/><path stroke="#000" d="M7 6.5h2M5 7.5h2M9 7.5h1M4 8.5h1M10 8.5h1M3 9.5h1M11 9.5h3M11 10.5h3"/></svg><div class="t" style="left:165px;top:491px;max-width:69px;overflow:hidden" aria-label="传送"><svg class="c"><use href="#c4f20"/></svg><svg class="c"><use href="#c9001"/></svg></div><div class="" style="left:138px;top:512px;width:8px;height:1px;background:repeating-linear-gradient(90deg,#808080 0 1px,transparent 1px 2px)"></div><div class="" style="left:129px;top:508px;width:9px;height:9px;border:1px solid #808080;background:#fff"></div><div class="" style="left:131px;top:512px;width:5px;height:1px;background:#000"></div><div class="" style="left:133px;top:510px;width:1px;height:5px;background:#000"></div><svg class="i" style="left:144px;top:504px" width="16" height="16" viewBox="0 0 16 16"><path stroke="#a0a0a0" d="M3 2.5h5M2 3.5h1M8 3.5h1M1 4.5h1M9 4.5h5M1 5.5h1M1 6.5h1M1 7.5h1M1 8.5h1M1 9.5h1M1 10.5h1M1 11.5h1M1 12.5h1M1 13.5h1"/><path stroke="#efef9c" d="M3 3.5h5M2 4.5h7M2 5.5h12M2 6.5h12M2 7.5h12M2 8.5h12M2 9.5h12M2 10.5h12M2 11.5h12M2 12.5h12"/><path stroke="#808000" d="M14 5.5h1M14 6.5h1M14 7.5h1M14 8.5h1M14 9.5h1M14 10.5h1M14 11.5h1M14 12.5h1M2 13.5h13"/><path stroke="#000" d="M15 6.5h1M15 7.5h1M15 8.5h1M15 9.5h1M15 10.5h1M15 11.5h1M15 12.5h1M15 13.5h1M2 14.5h14"/><path stroke="#000" d="M2 6.5h4M10 6.5h1M5 7.5h1M9 7.5h3M4 8.5h3M10 8.5h1M5 9.5h1M10 9.5h3"/></svg><div class="t" style="left:165px;top:507px;max-width:69px;overflow:hidden" aria-label="程序控制"><svg class="c"><use href="#c7a0b"/></svg><svg class="c"><use href="#c5e8f"/></svg><svg class="c"><use href="#c63a7"/></svg><svg class="c"><use href="#c5236"/></svg></div><div class="" style="left:138px;top:528px;width:8px;height:1px;background:repeating-linear-gradient(90deg,#808080 0 1px,transparent 1px 2px)"></div><div class="" style="left:129px;top:524px;width:9px;height:9px;border:1px solid #808080;background:#fff"></div><div class="" style="left:131px;top:528px;width:5px;height:1px;background:#000"></div><div class="" style="left:133px;top:526px;width:1px;height:5px;background:#000"></div><svg class="i" style="left:144px;top:520px" width="16" height="16" viewBox="0 0 16 16"><path stroke="#a0a0a0" d="M3 2.5h5M2 3.5h1M8 3.5h1M1 4.5h1M9 4.5h5M1 5.5h1M1 6.5h1M1 7.5h1M1 8.5h1M1 9.5h1M1 10.5h1M1 11.5h1M1 12.5h1M1 13.5h1"/><path stroke="#efef9c" d="M3 3.5h5M2 4.5h7M2 5.5h12M2 6.5h12M2 7.5h12M2 8.5h12M2 9.5h12M2 10.5h12M2 11.5h12M2 12.5h12"/><path stroke="#808000" d="M14 5.5h1M14 6.5h1M14 7.5h1M14 8.5h1M14 9.5h1M14 10.5h1M14 11.5h1M14 12.5h1M2 13.5h13"/><path stroke="#000" d="M15 6.5h1M15 7.5h1M15 8.5h1M15 9.5h1M15 10.5h1M15 11.5h1M15 12.5h1M15 13.5h1M2 14.5h14"/><path stroke="#000" d="M4 6.5h1M6 6.5h1M8 6.5h1M10 6.5h1M4 7.5h1M6 7.5h1M8 7.5h1M10 7.5h1M3 9.5h1M11 9.5h1M2 10.5h11M3 11.5h1M11 11.5h1"/></svg><div class="t" style="left:165px;top:523px;max-width:69px;overflow:hidden" aria-label="移位/循环"><svg class="c"><use href="#c79fb"/></svg><svg class="c"><use href="#c4f4d"/></svg>/<svg class="c"><use href="#c5faa"/></svg><svg class="c"><use href="#c73af"/></svg></div><div class="" style="left:138px;top:544px;width:8px;height:1px;background:repeating-linear-gradient(90deg,#808080 0 1px,transparent 1px 2px)"></div><div class="" style="left:129px;top:540px;width:9px;height:9px;border:1px solid #808080;background:#fff"></div><div class="" style="left:131px;top:544px;width:5px;height:1px;background:#000"></div><div class="" style="left:133px;top:542px;width:1px;height:5px;background:#000"></div><svg class="i" style="left:144px;top:536px" width="16" height="16" viewBox="0 0 16 16"><path stroke="#a0a0a0" d="M3 2.5h5M2 3.5h1M8 3.5h1M1 4.5h1M9 4.5h5M1 5.5h1M1 6.5h1M1 7.5h1M1 8.5h1M1 9.5h1M1 10.5h1M1 11.5h1M1 12.5h1M1 13.5h1"/><path stroke="#efef9c" d="M3 3.5h5M2 4.5h7M2 5.5h12M2 6.5h12M2 7.5h12M2 8.5h12M2 9.5h12M2 10.5h12M2 11.5h12M2 12.5h12"/><path stroke="#808000" d="M14 5.5h1M14 6.5h1M14 7.5h1M14 8.5h1M14 9.5h1M14 10.5h1M14 11.5h1M14 12.5h1M2 13.5h13"/><path stroke="#000" d="M15 6.5h1M15 7.5h1M15 8.5h1M15 9.5h1M15 10.5h1M15 11.5h1M15 12.5h1M15 13.5h1M2 14.5h14"/><path stroke="#000" d="M4 6.5h2M8 6.5h3M3 7.5h1M6 7.5h1M8 7.5h1M11 7.5h1M3 8.5h4M8 8.5h3M3 9.5h1M6 9.5h1M8 9.5h1M11 9.5h1M3 10.5h1M6 10.5h1M8 10.5h3"/></svg><div class="t" style="left:165px;top:539px;max-width:69px;overflow:hidden" aria-label="字符串"><svg class="c"><use href="#c5b57"/></svg><svg class="c"><use href="#c7b26"/></svg><svg class="c"><use href="#c4e32"/></svg></div><div class="" style="left:138px;top:560px;width:8px;height:1px;background:repeating-linear-gradient(90deg,#808080 0 1px,transparent 1px 2px)"></div><div class="" style="left:129px;top:556px;width:9px;height:9px;border:1px solid #808080;background:#fff"></div><div class="" style="left:131px;top:560px;width:5px;height:1px;background:#000"></div><div class="" style="left:133px;top:558px;width:1px;height:5px;background:#000"></div><svg class="i" style="left:144px;top:552px" width="16" height="16" viewBox="0 0 16 16"><path stroke="#a0a0a0" d="M3 2.5h5M2 3.5h1M8 3.5h1M1 4.5h1M9 4.5h5M1 5.5h1M1 6.5h1M1 7.5h1M1 8.5h1M1 9.5h1M1 10.5h1M1 11.5h1M1 12.5h1M1 13.5h1"/><path stroke="#efef9c" d="M3 3.5h5M2 4.5h7M2 5.5h12M2 6.5h12M2 7.5h12M2 8.5h12M2 9.5h12M2 10.5h12M2 11.5h12M2 12.5h12"/><path stroke="#808000" d="M14 5.5h1M14 6.5h1M14 7.5h1M14 8.5h1M14 9.5h1M14 10.5h1M14 11.5h1M14 12.5h1M2 13.5h13"/><path stroke="#000" d="M15 6.5h1M15 7.5h1M15 8.5h1M15 9.5h1M15 10.5h1M15 11.5h1M15 12.5h1M15 13.5h1M2 14.5h14"/><path stroke="#000" d="M3 6.5h10M3 7.5h1M5 7.5h1M7 7.5h1M9 7.5h1M11 7.5h2M3 8.5h10M3 9.5h1M5 9.5h1M7 9.5h1M9 9.5h1M11 9.5h2M3 10.5h10M3 11.5h1M5 11.5h1M7 11.5h1M9 11.5h1M11 11.5h2M3 12.5h10"/></svg><div class="t" style="left:165px;top:555px;max-width:69px;overflow:hidden" aria-label="表"><svg class="c"><use href="#c8868"/></svg></div><div class="" style="left:138px;top:576px;width:8px;height:1px;background:repeating-linear-gradient(90deg,#808080 0 1px,transparent 1px 2px)"></div><div class="" style="left:129px;top:572px;width:9px;height:9px;border:1px solid #808080;background:#fff"></div><div class="" style="left:131px;top:576px;width:5px;height:1px;background:#000"></div><div class="" style="left:133px;top:574px;width:1px;height:5px;background:#000"></div><svg class="i" style="left:144px;top:568px" width="16" height="16" viewBox="0 0 16 16"><path stroke="#a0a0a0" d="M3 2.5h5M2 3.5h1M8 3.5h1M1 4.5h1M9 4.5h5M1 5.5h1M1 6.5h1M1 7.5h1M1 8.5h1M1 9.5h1M1 10.5h1M1 11.5h1M1 12.5h1M1 13.5h1"/><path stroke="#efef9c" d="M3 3.5h5M2 4.5h7M2 5.5h12M2 6.5h12M2 7.5h12M2 8.5h12M2 9.5h12M2 10.5h12M2 11.5h12M2 12.5h12"/><path stroke="#808000" d="M14 5.5h1M14 6.5h1M14 7.5h1M14 8.5h1M14 9.5h1M14 10.5h1M14 11.5h1M14 12.5h1M2 13.5h13"/><path stroke="#000" d="M15 6.5h1M15 7.5h1M15 8.5h1M15 9.5h1M15 10.5h1M15 11.5h1M15 12.5h1M15 13.5h1M2 14.5h14"/><path stroke="#000" d="M6 4.5h2M5 5.5h5M4 6.5h1M10 6.5h1M3 7.5h1M11 7.5h1M3 8.5h1M11 8.5h1M3 9.5h1M11 9.5h1M4 10.5h1M10 10.5h1M5 11.5h5"/><path stroke="#fff" d="M5 6.5h5M4 7.5h2M7 7.5h4M4 8.5h3M8 8.5h3M4 9.5h4M9 9.5h2M5 10.5h5"/><path stroke="#ff0000" d="M6 7.5h1M7 8.5h1M8 9.5h1"/></svg><div class="t" style="left:165px;top:571px;max-width:69px;overflow:hidden" aria-label="定时器"><svg class="c"><use href="#c5b9a"/></svg><svg class="c"><use href="#c65f6"/></svg><svg class="c"><use href="#c5668"/></svg></div><div class="" style="left:138px;top:592px;width:8px;height:1px;background:repeating-linear-gradient(90deg,#808080 0 1px,transparent 1px 2px)"></div><div class="" style="left:129px;top:588px;width:9px;height:9px;border:1px solid #808080;background:#fff"></div><div class="" style="left:131px;top:592px;width:5px;height:1px;background:#000"></div><div class="" style="left:133px;top:590px;width:1px;height:5px;background:#000"></div><svg class="i" style="left:144px;top:584px" width="16" height="16" viewBox="0 0 16 16"><path stroke="#000" d="M12 1.5h2M7 2.5h2M11 2.5h1M13 2.5h1M3 3.5h2M6 3.5h1M8 3.5h1M10 3.5h1M13 3.5h1M2 4.5h1M4 4.5h1M6 4.5h1M9 4.5h1M13 4.5h1M2 5.5h1M5 5.5h2M9 5.5h1M13 5.5h1M1 6.5h2M6 6.5h1M9 6.5h1M13 6.5h1M1 7.5h1M3 7.5h1M6 7.5h1M9 7.5h1M13 7.5h1M1 8.5h1M3 8.5h1M6 8.5h1M9 8.5h1M13 8.5h1M0 9.5h1M3 9.5h1M6 9.5h1M9 9.5h1M13 9.5h1M0 10.5h1M3 10.5h1M6 10.5h1M9 10.5h1M13 10.5h1M0 11.5h1M3 11.5h1M6 11.5h1M9 11.5h1M12 11.5h1M0 12.5h1M3 12.5h1M6 12.5h1M9 12.5h1M11 12.5h1M0 13.5h1M2 13.5h2M5 13.5h2M8 13.5h3M0 14.5h2M3 14.5h2M6 14.5h2"/><path stroke="#00c000" d="M12 2.5h1M11 3.5h2M10 4.5h3M10 5.5h3M10 6.5h3M10 7.5h3M10 8.5h3M10 9.5h3M10 10.5h3M10 11.5h2M10 12.5h1"/><path stroke="#ffff00" d="M7 3.5h1M7 4.5h2M7 5.5h2M7 6.5h2M7 7.5h2M7 8.5h2M7 9.5h2M7 10.5h2M7 11.5h2M7 12.5h2M7 13.5h1"/><path stroke="#00ffff" d="M3 4.5h1M3 5.5h2M3 6.5h3M4 7.5h2M4 8.5h2M4 9.5h2M4 10.5h2M4 11.5h2M4 12.5h2M4 13.5h1"/><path stroke="#ff00ff" d="M2 7.5h1M2 8.5h1M1 9.5h2M1 10.5h2M1 11.5h2M1 12.5h2M1 13.5h1"/></svg><div class="t" style="left:165px;top:587px;max-width:69px;overflow:hidden" aria-label="库"><svg class="c"><use href="#c5e93"/></svg></div><div class="" style="left:138px;top:608px;width:8px;height:1px;background:repeating-linear-gradient(90deg,#808080 0 1px,transparent 1px 2px)"></div><div class="" style="left:129px;top:604px;width:9px;height:9px;border:1px solid #808080;background:#fff"></div><div class="" style="left:131px;top:608px;width:5px;height:1px;background:#000"></div><div class="" style="left:133px;top:606px;width:1px;height:5px;background:#000"></div><svg class="i" style="left:144px;top:600px" width="16" height="16" viewBox="0 0 16 16"><path stroke="#a0a0a0" d="M3 2.5h5M2 3.5h1M8 3.5h1M1 4.5h1M9 4.5h5M1 5.5h1M1 6.5h1M1 7.5h1M1 8.5h1M1 9.5h1M1 10.5h1M1 11.5h1M1 12.5h1M1 13.5h1"/><path stroke="#efef9c" d="M3 3.5h5M2 4.5h7M2 5.5h12M2 6.5h12M2 7.5h12M2 8.5h12M2 9.5h12M2 10.5h12M2 11.5h12M2 12.5h12"/><path stroke="#808000" d="M14 5.5h1M14 6.5h1M14 7.5h1M14 8.5h1M14 9.5h1M14 10.5h1M14 11.5h1M14 12.5h1M2 13.5h13"/><path stroke="#000" d="M15 6.5h1M15 7.5h1M15 8.5h1M15 9.5h1M15 10.5h1M15 11.5h1M15 12.5h1M15 13.5h1M2 14.5h14"/><path stroke="#000080" d="M4 6.5h8M2 7.5h3M11 7.5h3M2 8.5h1M4 8.5h1M11 8.5h1M13 8.5h1M2 9.5h3M11 9.5h3M4 10.5h8"/><path stroke="#c0c0c0" d="M5 7.5h5M5 8.5h1M5 9.5h1"/><path stroke="#fff" d="M10 7.5h1M6 8.5h5M6 9.5h5"/></svg><div class="t" style="left:165px;top:603px;max-width:69px;overflow:hidden" aria-label="调用子程序"><svg class="c"><use href="#c8c03"/></svg><svg class="c"><use href="#c7528"/></svg><svg class="c"><use href="#c5b50"/></svg><svg class="c"><use href="#c7a0b"/></svg><svg class="c"><use href="#c5e8f"/></svg></div><div class="dz" style="left:106px;top:671px;width:128px;height:16px;"></div><div class="rs" style="left:106px;top:671px;width:16px;height:16px;"></div><div class="" style="left:112px;top:678px;width:1px;height:1px;background:#000"></div><div class="" style="left:113px;top:677px;width:1px;height:3px;background:#000"></div><div class="" style="left:114px;top:676px;width:1px;height:5px;background:#000"></div><div class="" style="left:115px;top:675px;width:1px;height:7px;background:#000"></div><div class="rs" style="left:122px;top:671px;width:29px;height:16px;"></div><div class="rs" style="left:218px;top:671px;width:16px;height:16px;"></div><div class="" style="left:227px;top:678px;width:1px;height:1px;background:#000"></div><div class="" style="left:226px;top:677px;width:1px;height:3px;background:#000"></div><div class="" style="left:225px;top:676px;width:1px;height:5px;background:#000"></div><div class="" style="left:224px;top:675px;width:1px;height:7px;background:#000"></div><div class="" style="left:240px;top:105px;width:743px;height:15px;background:#d4d0c8;border-top:1px solid #808080;border-left:1px solid #808080;border-right:1px solid #808080;border-bottom:1px solid #fff"></div><div class="" style="left:261px;top:106px;width:628px;height:13px;background:#fff;border-left:1px solid #404040"></div><div class="" style="left:888px;top:106px;width:1px;height:13px;background:#808080"></div><div class="t" style="left:224px;width:40px;text-align:center;top:107px;font-size:11px">2</div><div class="" style="left:253px;top:112px;width:1px;height:2px;background:#000"></div><div class="" style="left:272px;top:112px;width:1px;height:2px;background:#000"></div><div class="t" style="left:262px;width:40px;text-align:center;top:107px;font-size:11px">3</div><div class="" style="left:291px;top:112px;width:1px;height:2px;background:#000"></div><div class="" style="left:300px;top:110px;width:1px;height:5px;background:#000"></div><div class="" style="left:310px;top:112px;width:1px;height:2px;background:#000"></div><div class="t" style="left:300px;width:40px;text-align:center;top:107px;font-size:11px">4</div><div class="" style="left:329px;top:112px;width:1px;height:2px;background:#000"></div><div class="" style="left:338px;top:110px;width:1px;height:5px;background:#000"></div><div class="" style="left:348px;top:112px;width:1px;height:2px;background:#000"></div><div class="t" style="left:338px;width:40px;text-align:center;top:107px;font-size:11px">5</div><div class="" style="left:367px;top:112px;width:1px;height:2px;background:#000"></div><div class="" style="left:376px;top:110px;width:1px;height:5px;background:#000"></div><div class="" style="left:386px;top:112px;width:1px;height:2px;background:#000"></div><div class="t" style="left:375px;width:40px;text-align:center;top:107px;font-size:11px">6</div><div class="" style="left:404px;top:112px;width:1px;height:2px;background:#000"></div><div class="" style="left:414px;top:110px;width:1px;height:5px;background:#000"></div><div class="" style="left:423px;top:112px;width:1px;height:2px;background:#000"></div><div class="t" style="left:413px;width:40px;text-align:center;top:107px;font-size:11px">7</div><div class="" style="left:442px;top:112px;width:1px;height:2px;background:#000"></div><div class="" style="left:452px;top:110px;width:1px;height:5px;background:#000"></div><div class="" style="left:461px;top:112px;width:1px;height:2px;background:#000"></div><div class="t" style="left:451px;width:40px;text-align:center;top:107px;font-size:11px">8</div><div class="" style="left:480px;top:112px;width:1px;height:2px;background:#000"></div><div class="" style="left:490px;top:110px;width:1px;height:5px;background:#000"></div><div class="" style="left:499px;top:112px;width:1px;height:2px;background:#000"></div><div class="t" style="left:489px;width:40px;text-align:center;top:107px;font-size:11px">9</div><div class="" style="left:518px;top:112px;width:1px;height:2px;background:#000"></div><div class="" style="left:527px;top:110px;width:1px;height:5px;background:#000"></div><div class="" style="left:537px;top:112px;width:1px;height:2px;background:#000"></div><div class="t" style="left:527px;width:40px;text-align:center;top:107px;font-size:11px">10</div><div class="" style="left:556px;top:112px;width:1px;height:2px;background:#000"></div><div class="" style="left:565px;top:110px;width:1px;height:5px;background:#000"></div><div class="" style="left:575px;top:112px;width:1px;height:2px;background:#000"></div><div class="t" style="left:565px;width:40px;text-align:center;top:107px;font-size:11px">11</div><div class="" style="left:594px;top:112px;width:1px;height:2px;background:#000"></div><div class="" style="left:603px;top:110px;width:1px;height:5px;background:#000"></div><div class="" style="left:613px;top:112px;width:1px;height:2px;background:#000"></div><div class="t" style="left:602px;width:40px;text-align:center;top:107px;font-size:11px">12</div><div class="" style="left:631px;top:112px;width:1px;height:2px;background:#000"></div><div class="" style="left:641px;top:110px;width:1px;height:5px;background:#000"></div><div class="" style="left:650px;top:112px;width:1px;height:2px;background:#000"></div><div class="t" style="left:640px;width:40px;text-align:center;top:107px;font-size:11px">13</div><div class="" style="left:669px;top:112px;width:1px;height:2px;background:#000"></div><div class="" style="left:679px;top:110px;width:1px;height:5px;background:#000"></div><div class="" style="left:688px;top:112px;width:1px;height:2px;background:#000"></div><div class="t" style="left:678px;width:40px;text-align:center;top:107px;font-size:11px">14</div><div class="" style="left:707px;top:112px;width:1px;height:2px;background:#000"></div><div class="" style="left:717px;top:110px;width:1px;height:5px;background:#000"></div><div class="" style="left:726px;top:112px;width:1px;height:2px;background:#000"></div><div class="t" style="left:716px;width:40px;text-align:center;top:107px;font-size:11px">15</div><div class="" style="left:745px;top:112px;width:1px;height:2px;background:#000"></div><div class="" style="left:754px;top:110px;width:1px;height:5px;background:#000"></div><div class="" style="left:764px;top:112px;width:1px;height:2px;background:#000"></div><div class="t" style="left:754px;width:40px;text-align:center;top:107px;font-size:11px">16</div><div class="" style="left:783px;top:112px;width:1px;height:2px;background:#000"></div><div class="" style="left:792px;top:110px;width:1px;height:5px;background:#000"></div><div class="" style="left:802px;top:112px;width:1px;height:2px;background:#000"></div><div class="t" style="left:792px;width:40px;text-align:center;top:107px;font-size:11px">17</div><div class="" style="left:821px;top:112px;width:1px;height:2px;background:#000"></div><div class="" style="left:830px;top:110px;width:1px;height:5px;background:#000"></div><div class="" style="left:839px;top:112px;width:1px;height:2px;background:#000"></div><div class="t" style="left:829px;width:40px;text-align:center;top:107px;font-size:11px">18</div><div class="" style="left:858px;top:112px;width:1px;height:2px;background:#000"></div><div class="" style="left:868px;top:110px;width:1px;height:5px;background:#000"></div><div class="" style="left:877px;top:112px;width:1px;height:2px;background:#000"></div><div class="" style="left:896px;top:112px;width:1px;height:2px;background:#000"></div><div class="" style="left:906px;top:110px;width:1px;height:5px;background:#000"></div><div class="" style="left:915px;top:112px;width:1px;height:2px;background:#000"></div><div class="t" style="left:905px;width:40px;text-align:center;top:107px;font-size:11px">20</div><div class="" style="left:934px;top:112px;width:1px;height:2px;background:#000"></div><div class="" style="left:944px;top:110px;width:1px;height:5px;background:#000"></div><div class="" style="left:953px;top:112px;width:1px;height:2px;background:#000"></div><div class="t" style="left:943px;width:40px;text-align:center;top:107px;font-size:11px">21</div><div class="" style="left:972px;top:112px;width:1px;height:2px;background:#000"></div><div class="" style="left:981px;top:110px;width:1px;height:5px;background:#000"></div><div class="" style="left:240px;top:122px;width:782px;height:1px;background:#808080"></div><div class="" style="left:240px;top:123px;width:782px;height:1px;background:#404040"></div><div class="" style="left:240px;top:125px;width:784px;height:1px;background:#fff"></div><div class="" style="left:240px;top:130px;width:784px;height:558px;background:#fff;border-left:1px solid #808080;border-top:1px solid #808080;border-right:1px solid #fff"></div><div class="" style="left:241px;top:131px;width:782px;height:557px;border-left:1px solid #404040;border-top:1px solid #404040;border-right:1px solid #d4d0c8"></div><div class="dz" style="left:242px;top:132px;width:19px;height:540px;"></div><div class="" style="left:261px;top:132px;width:2px;height:540px;background:#000"></div><div class="" style="left:268px;top:137px;width:622px;height:56px;background:#d4d0c8;border:1px solid #000"></div><div class="t" style="left:273px;top:153px;color:#008000;" aria-label="程序注释"><svg class="c"><use href="#c7a0b"/></svg><svg class="c"><use href="#c5e8f"/></svg><svg class="c"><use href="#c6ce8"/></svg><svg class="c"><use href="#c91ca"/></svg></div><div class="t" style="left:273px;top:166px;color:#008000;" aria-label="按 F1 获得帮助及举例程序"><svg class="c"><use href="#c6309"/></svg> F1 <svg class="c"><use href="#c83b7"/></svg><svg class="c"><use href="#c5f97"/></svg><svg class="c"><use href="#c5e2e"/></svg><svg class="c"><use href="#c52a9"/></svg><svg class="c"><use href="#c53ca"/></svg><svg class="c"><use href="#c4e3e"/></svg><svg class="c"><use href="#c4f8b"/></svg><svg class="c"><use href="#c7a0b"/></svg><svg class="c"><use href="#c5e8f"/></svg></div><div class="t b" style="left:267px;top:199px;color:#000;" aria-label="网络 1"><svg class="cb"><use href="#c7f51"/><use href="#c7f51" x="1"/></svg><svg class="cb"><use href="#c7edc"/><use href="#c7edc" x="1"/></svg><span style="display:inline-block;width:13px;letter-spacing:1.91px">&nbsp;1</span></div><div class="t" style="left:330px;top:199px;color:#008000;" aria-label="网络题目 (单行)"><svg class="c"><use href="#c7f51"/></svg><svg class="c"><use href="#c7edc"/></svg><svg class="c"><use href="#c9898"/></svg><svg class="c"><use href="#c76ee"/></svg> (<svg class="c"><use href="#c5355"/></svg><svg class="c"><use href="#c884c"/></svg>)</div><div class="" style="left:268px;top:216px;width:622px;height:56px;background:#d4d0c8;border:1px solid #000"></div><div class="t" style="left:273px;top:232px;color:#008000;" aria-label="网络注释"><svg class="c"><use href="#c7f51"/></svg><svg class="c"><use href="#c7edc"/></svg><svg class="c"><use href="#c6ce8"/></svg><svg class="c"><use href="#c91ca"/></svg></div><div class="" style="left:263px;top:304px;width:33px;height:2px;background:#000"></div><div class="" style="left:296px;top:295px;width:2px;height:20px;background:#000"></div><div class="" style="left:327px;top:295px;width:2px;height:20px;background:#000"></div><div class="t" style="top:281px;color:#000;font-size:11px;left:264px;width:100px;text-align:center;">SM0.3</div><div class="" style="left:329px;top:304px;width:62px;height:2px;background:#000"></div><svg class="i" style="left:389px;top:293px;shape-rendering:auto" width="48" height="24" viewBox="0 0 48 24"><path d="M8 2.5Q-4 12 8 21.5M38 2.5Q50 12 38 21.5" fill="none" stroke="#000" stroke-width="2"/></svg><div class="t" style="top:281px;color:#000;font-size:11px;left:363px;width:100px;text-align:center;">M0.0</div><div class="t" style="top:298px;color:#000;font-size:11px;left:363px;width:100px;text-align:center;">R</div><div class="t" style="top:316px;color:#808000;font-size:11px;left:363px;width:100px;text-align:center;">100</div><div class="" style="left:263px;top:358px;width:33px;height:2px;background:#000"></div><div class="" style="left:296px;top:349px;width:2px;height:20px;background:#000"></div><div class="" style="left:327px;top:349px;width:2px;height:20px;background:#000"></div><div class="t" style="top:335px;color:#000;font-size:11px;left:264px;width:100px;text-align:center;">I0.0</div><div class="" style="left:329px;top:358px;width:62px;height:2px;background:#000"></div><svg class="i" style="left:389px;top:347px;shape-rendering:auto" width="48" height="24" viewBox="0 0 48 24"><path d="M8 2.5Q-4 12 8 21.5M38 2.5Q50 12 38 21.5" fill="none" stroke="#000" stroke-width="2"/></svg><div class="t" style="top:335px;color:#000;font-size:11px;left:363px;width:100px;text-align:center;">Q0.0</div><div class="t" style="top:352px;color:#000;font-size:11px;left:363px;width:100px;text-align:center;">R</div><div class="t" style="top:370px;color:#808000;font-size:11px;left:363px;width:100px;text-align:center;">30</div><div class="" style="left:263px;top:412px;width:33px;height:2px;background:#000"></div><div class="" style="left:296px;top:403px;width:2px;height:20px;background:#000"></div><div class="" style="left:327px;top:403px;width:2px;height:20px;background:#000"></div><div class="t" style="top:389px;color:#000;font-size:11px;left:264px;width:100px;text-align:center;">M30.1</div><div class="" style="left:329px;top:412px;width:62px;height:2px;background:#000"></div><svg class="i" style="left:389px;top:401px;shape-rendering:auto" width="48" height="24" viewBox="0 0 48 24"><path d="M8 2.5Q-4 12 8 21.5M38 2.5Q50 12 38 21.5" fill="none" stroke="#000" stroke-width="2"/></svg><div class="t" style="top:389px;color:#000;font-size:11px;left:363px;width:100px;text-align:center;">M27.0</div><div class="t" style="top:406px;color:#000;font-size:11px;left:363px;width:100px;text-align:center;">R</div><div class="t" style="top:424px;color:#808000;font-size:11px;left:363px;width:100px;text-align:center;">40</div><div class="" style="left:361px;top:304px;width:2px;height:110px;background:#000"></div><div class="t b" style="left:267px;top:474px;color:#000;" aria-label="网络 2"><svg class="cb"><use href="#c7f51"/><use href="#c7f51" x="1"/></svg><svg class="cb"><use href="#c7edc"/><use href="#c7edc" x="1"/></svg><span style="display:inline-block;width:14px;letter-spacing:2.41px">&nbsp;2</span></div><div class="t" style="left:330px;top:474px;color:#008000;" aria-label="自动"><svg class="c"><use href="#c81ea"/></svg><svg class="c"><use href="#c52a8"/></svg></div><div class="" style="left:268px;top:491px;width:622px;height:30px;background:#d4d0c8;border:1px solid #000"></div><div class="" style="left:263px;top:553px;width:33px;height:2px;background:#000"></div><div class="" style="left:296px;top:544px;width:2px;height:20px;background:#000"></div><div class="" style="left:327px;top:544px;width:2px;height:20px;background:#000"></div><div class="t" style="top:530px;color:#000;font-size:11px;left:264px;width:100px;text-align:center;">I0.2</div><div class="" style="left:329px;top:553px;width:67px;height:2px;background:#000"></div><div class="" style="left:396px;top:544px;width:2px;height:20px;background:#000"></div><div class="" style="left:427px;top:544px;width:2px;height:20px;background:#000"></div><div class="t" style="top:530px;color:#000;font-size:11px;left:364px;width:100px;text-align:center;">I0.3</div><svg class="i" style="left:409px;top:549px;shape-rendering:auto" width="8" height="10" viewBox="0 0 8 10"><path d="M5.5 1L2.5 9" stroke="#000" stroke-width="1.2"/></svg><div class="" style="left:429px;top:553px;width:62px;height:2px;background:#000"></div><svg class="i" style="left:489px;top:542px;shape-rendering:auto" width="48" height="24" viewBox="0 0 48 24"><path d="M8 2.5Q-4 12 8 21.5M38 2.5Q50 12 38 21.5" fill="none" stroke="#000" stroke-width="2"/></svg><div class="t" style="top:530px;color:#000;font-size:11px;left:463px;width:100px;text-align:center;">M0.0</div><div class="" style="left:263px;top:607px;width:33px;height:2px;background:#000"></div><div class="" style="left:296px;top:598px;width:2px;height:20px;background:#000"></div><div class="" style="left:327px;top:598px;width:2px;height:20px;background:#000"></div><div class="t" style="top:584px;color:#000;font-size:11px;left:264px;width:100px;text-align:center;">M27.2</div><div class="" style="left:329px;top:607px;width:134px;height:2px;background:#000"></div><div class="" style="left:461px;top:553px;width:2px;height:56px;background:#000"></div><div class="" style="left:264px;top:669px;width:400px;height:3px;overflow:hidden"><div class="t b" style="left:3px;top:0px;color:#000;" aria-label="网络 3"><svg class="cb"><use href="#c7f51"/><use href="#c7f51" x="1"/></svg><svg class="cb"><use href="#c7edc"/><use href="#c7edc" x="1"/></svg><span style="display:inline-block;width:14px;letter-spacing:2.41px">&nbsp;3</span></div><div class="t" style="left:66px;top:0px;color:#008000;" aria-label="自动"><svg class="c"><use href="#c81ea"/></svg><svg class="c"><use href="#c52a8"/></svg></div></div><div class="dz" style="left:1006px;top:132px;width:16px;height:540px;"></div><div class="rs" style="left:1006px;top:132px;width:16px;height:16px;"></div><div class="" style="left:1013px;top:138px;width:1px;height:1px;background:#000"></div><div class="" style="left:1012px;top:139px;width:3px;height:1px;background:#000"></div><div class="" style="left:1011px;top:140px;width:5px;height:1px;background:#000"></div><div class="" style="left:1010px;top:141px;width:7px;height:1px;background:#000"></div><div class="rs" style="left:1006px;top:148px;width:16px;height:9px;"></div><div class="rs" style="left:1006px;top:656px;width:16px;height:16px;"></div><div class="" style="left:1013px;top:665px;width:1px;height:1px;background:#000"></div><div class="" style="left:1012px;top:664px;width:3px;height:1px;background:#000"></div><div class="" style="left:1011px;top:663px;width:5px;height:1px;background:#000"></div><div class="" style="left:1010px;top:662px;width:7px;height:1px;background:#000"></div><div class="" style="left:242px;top:672px;width:780px;height:16px;background:#d4d0c8"></div><div class="" style="left:242px;top:672px;width:64px;height:16px;background:#000"></div><div class="r1" style="left:242px;top:673px;width:15px;height:14px;background:#d4d0c8"></div><svg class="i" style="left:242px;top:672px;shape-rendering:auto" width="16" height="16"><path d="M10 4v7l-4-3.5zM4 4h2v7h-2z" fill="#808080"/></svg><div class="r1" style="left:258px;top:673px;width:15px;height:14px;background:#d4d0c8"></div><svg class="i" style="left:258px;top:672px;shape-rendering:auto" width="16" height="16"><path d="M9 4v7l-4-3.5z" fill="#808080"/></svg><div class="r1" style="left:274px;top:673px;width:15px;height:14px;background:#d4d0c8"></div><svg class="i" style="left:274px;top:672px;shape-rendering:auto" width="16" height="16"><path d="M6 4v7l4-3.5z" fill="#808080"/></svg><div class="r1" style="left:290px;top:673px;width:15px;height:14px;background:#d4d0c8"></div><svg class="i" style="left:290px;top:672px;shape-rendering:auto" width="16" height="16"><path d="M5 4v7l4-3.5zM9 4h2v7h-2z" fill="#808080"/></svg><svg class="i" style="left:306px;top:672px;shape-rendering:auto" width="330" height="17" viewBox="0 0 330 17"><path d="M0 0L7 15.5H27L34 0z" fill="#fff"/><path d="M0 0.5L7 15.5H27L34 0.5H322V16" fill="none" stroke="#000" stroke-width="1.2"/><path d="M30.5 8L34 15.5H78L85 0.5M81.5 8L85 15.5H129L136 0.5" fill="none" stroke="#000" stroke-width="1.2"/></svg><div class="t" style="left:316px;top:675px;" aria-label="主"><svg class="c"><use href="#c4e3b"/></svg></div><div class="t" style="top:674px;color:#000;font-size:11px;left:314px;width:100px;text-align:center;">SBR_0</div><div class="t" style="top:674px;color:#000;font-size:11px;left:365px;width:100px;text-align:center;">INT_0</div><div class="dz" style="left:632px;top:672px;width:374px;height:16px;"></div><div class="rs" style="left:632px;top:672px;width:16px;height:16px;"></div><div class="" style="left:638px;top:679px;width:1px;height:1px;background:#000"></div><div class="" style="left:639px;top:678px;width:1px;height:3px;background:#000"></div><div class="" style="left:640px;top:677px;width:1px;height:5px;background:#000"></div><div class="" style="left:641px;top:676px;width:1px;height:7px;background:#000"></div><div class="rs" style="left:648px;top:672px;width:79px;height:16px;"></div><div class="rs" style="left:990px;top:672px;width:16px;height:16px;"></div><div class="" style="left:999px;top:679px;width:1px;height:1px;background:#000"></div><div class="" style="left:998px;top:678px;width:1px;height:3px;background:#000"></div><div class="" style="left:997px;top:677px;width:1px;height:5px;background:#000"></div><div class="" style="left:996px;top:676px;width:1px;height:7px;background:#000"></div><div class="" style="left:0px;top:689px;width:1024px;height:1px;background:#fff"></div><div class="" style="left:0px;top:693px;width:1024px;height:2px;background:#404040"></div><div class="sk" style="left:4px;top:698px;width:1018px;height:18px;background:#fff"></div><div class="" style="left:0px;top:720px;width:1024px;height:1px;background:#808080"></div><div class="" style="left:0px;top:721px;width:1024px;height:1px;background:#fff"></div><div class="t" style="left:2px;top:726px;" aria-label="就绪"><svg class="c"><use href="#c5c31"/></svg><svg class="c"><use href="#c7eea"/></svg></div><div class="s1" style="left:777px;top:724px;width:105px;height:16px;"></div><div class="t" style="left:780px;top:727px;" aria-label="网络 1"><svg class="c"><use href="#c7f51"/></svg><svg class="c"><use href="#c7edc"/></svg> 1</div><div class="s1" style="left:885px;top:724px;width:105px;height:16px;"></div><div class="t" style="left:888px;top:727px;" aria-label="行 1, 列 1"><svg class="c"><use href="#c884c"/></svg> 1, <svg class="c"><use href="#c5217"/></svg> 1</div><div class="s1" style="left:993px;top:724px;width:29px;height:16px;"></div><div class="t" style="left:996px;top:727px;">INS</div><div class="" style="left:0px;top:741px;width:1024px;height:1px;background:#fff"></div><div class="rs" style="left:2px;top:744px;width:47px;height:22px;"></div><svg class="i" style="left:3px;top:747px" width="16" height="16" viewBox="0 0 16 16"><path stroke="#ff0000" d="M6 1.5h2M4 2.5h5M4 3.5h5M3 4.5h5M3 5.5h4M3 6.5h1"/><path stroke="#00c000" d="M10 2.5h2M9 3.5h5M9 4.5h5M8 5.5h5M9 6.5h3"/><path stroke="#0000ff" d="M6 6.5h2M2 7.5h7M2 8.5h6M1 9.5h6M1 10.5h5M1 11.5h1"/><path stroke="#ffff00" d="M13 6.5h1M11 7.5h3M9 8.5h5M8 9.5h5M8 10.5h5M8 11.5h3"/></svg><div class="t" style="left:22px;top:750px;" aria-label="开始"><svg class="c"><use href="#c5f00"/></svg><svg class="c"><use href="#c59cb"/></svg></div><svg class="i" style="left:57px;top:747px;shape-rendering:auto" width="16" height="16"><circle cx="8" cy="8.5" r="6" fill="none" stroke="#2a7ae0" stroke-width="3"/><rect x="3" y="7" width="11" height="2" fill="#2a7ae0"/><rect x="8" y="9" width="7" height="3" fill="#d4d0c8"/><path d="M1 13Q-1 6 8 3Q14 0 15 3" fill="none" stroke="#4aa0f0" stroke-width="1.5"/></svg><svg class="i" style="left:79px;top:747px;shape-rendering:auto" width="16" height="16"><rect x="2" y="2" width="12" height="13" rx="2" fill="#e8f0ff" stroke="#2a6ad0" stroke-width="1.5"/><circle cx="8" cy="9" r="3.2" fill="none" stroke="#2a7ae0" stroke-width="2"/><rect x="5" y="8" width="6" height="1.5" fill="#2a7ae0"/><path d="M10 2l4-1v4" fill="#f0a020"/><path d="M13 11l2 3l-3 1z" fill="#e04020"/></svg><div class="rs" style="left:137px;top:744px;width:124px;height:22px;"></div><svg class="i" style="left:141px;top:747px;shape-rendering:auto" width="16" height="16"><path d="M4.5 1.5h7l3 3v10h-10z" fill="#fff" stroke="#808080"/><circle cx="6" cy="9" r="3.5" fill="none" stroke="#2a7ae0" stroke-width="2"/><rect x="3" y="8" width="7" height="1.5" fill="#2a7ae0"/><path d="M1 12Q0 6 6 4" fill="none" stroke="#e0a020" stroke-width="1.2"/></svg><div class="t" style="left:160px;top:750px;" aria-label="hao123网址之家...">hao123<svg class="c"><use href="#c7f51"/></svg><svg class="c"><use href="#c5740"/></svg><svg class="c"><use href="#c4e4b"/></svg><svg class="c"><use href="#c5bb6"/></svg>...</div><div class="rs" style="left:265px;top:744px;width:124px;height:22px;"></div><svg class="i" style="left:269px;top:747px;shape-rendering:auto" width="16" height="16"><path d="M4.5 1.5h7l3 3v10h-10z" fill="#fff" stroke="#808080"/><circle cx="6" cy="9" r="3.5" fill="none" stroke="#2a7ae0" stroke-width="2"/><rect x="3" y="8" width="7" height="1.5" fill="#2a7ae0"/><path d="M1 12Q0 6 6 4" fill="none" stroke="#e0a020" stroke-width="1.2"/></svg><div class="t" style="left:288px;top:750px;" aria-label="100吨全自动打...">100<svg class="c"><use href="#c5428"/></svg><svg class="c"><use href="#c5168"/></svg><svg class="c"><use href="#c81ea"/></svg><svg class="c"><use href="#c52a8"/></svg><svg class="c"><use href="#c6253"/></svg>...</div><div class="rs" style="left:393px;top:744px;width:124px;height:22px;"></div><svg class="i" style="left:397px;top:747px;shape-rendering:auto" width="16" height="16"><path d="M1.5 4.5q0-1.500 1.500-1.500h3l1.500 1.500h6q1.500 0 1.500 1.500v6q0 1.500-1.500 1.500h-10.500q-1.500 0-1.500-1.500z" fill="#ffe680" stroke="#b08a20"/><path d="M2 7h12" stroke="#fff6c0" stroke-width="1.500"/></svg><div class="t" style="left:416px;top:750px;" aria-label="实例PLC HMI程..."><svg class="c"><use href="#c5b9e"/></svg><svg class="c"><use href="#c4f8b"/></svg>PLC HMI<svg class="c"><use href="#c7a0b"/></svg>...</div><div class="rs" style="left:521px;top:744px;width:124px;height:22px;"></div><svg class="i" style="left:525px;top:747px;shape-rendering:auto" width="16" height="16"><path d="M1.5 4.5q0-1.500 1.500-1.500h3l1.500 1.500h6q1.500 0 1.500 1.500v6q0 1.500-1.500 1.500h-10.500q-1.500 0-1.500-1.500z" fill="#ffe680" stroke="#b08a20"/><path d="M2 7h12" stroke="#fff6c0" stroke-width="1.500"/></svg><div class="t" style="left:544px;top:750px;" aria-label="100t自动打包机...">100t<svg class="c"><use href="#c81ea"/></svg><svg class="c"><use href="#c52a8"/></svg><svg class="c"><use href="#c6253"/></svg><svg class="c"><use href="#c5305"/></svg><svg class="c"><use href="#c673a"/></svg>...</div><div class="sk dz" style="left:649px;top:744px;width:124px;height:22px;"></div><svg class="i" style="left:654px;top:748px;shape-rendering:auto" width="16" height="16"><rect x="0.500" y="1.500" width="15" height="14" fill="#fff" stroke="#000"/><circle cx="8" cy="9" r="5" fill="#606060" stroke="#000"/><circle cx="8" cy="9" r="2.500" fill="#a0a0a0"/><rect x="2" y="2" width="4" height="2" fill="#000"/></svg><div class="t" style="left:673px;top:751px;">UltraSnap</div><div class="rs" style="left:777px;top:744px;width:124px;height:22px;"></div><svg class="i" style="left:781px;top:749px" width="16" height="16" viewBox="0 0 16 16"><path stroke="#000080" d="M0 0.5h12M0 1.5h12"/><path stroke="#fff" d="M0 2.5h12M0 3.5h2M0 4.5h2M0 5.5h2M0 6.5h2M0 7.5h2M0 8.5h2M3 8.5h1M0 9.5h2M0 10.5h2M1 11.5h1"/><path stroke="#000" d="M2 3.5h13M2 4.5h1M5 4.5h1M13 4.5h1M2 5.5h1M5 5.5h10M2 6.5h1M5 6.5h1M14 6.5h1M2 7.5h2M5 7.5h1M14 7.5h1M2 8.5h1M4 8.5h2M14 8.5h1M2 9.5h2M5 9.5h10M2 10.5h1M5 10.5h1M13 10.5h1M2 11.5h13"/><path stroke="#008000" d="M3 4.5h1M3 5.5h1M3 6.5h1M7 6.5h6M13 7.5h1M7 8.5h6M3 10.5h1"/><path stroke="#a0a0a0" d="M4 4.5h1M6 4.5h7M4 5.5h1M4 6.5h1M6 6.5h1M13 6.5h1M4 7.5h1M6 7.5h1M6 8.5h1M13 8.5h1M4 9.5h1M4 10.5h1M6 10.5h7"/><path stroke="#c0c0c0" d="M7 7.5h6"/></svg><div class="t" style="left:800px;top:750px;">STEP 7-Micro/WI...</div><div class="s1" style="left:909px;top:744px;width:113px;height:22px;"></div><svg class="i" style="left:912px;top:747px;shape-rendering:auto" width="80" height="17"><path d="M5 5l-3 3l3 3M10 5l-3 3l3 3" fill="none" stroke="#000" stroke-width="1.500"/><rect x="15.500" y="7.500" width="9" height="7" fill="#00a0e0" stroke="#000"/><rect x="17" y="15" width="6" height="2" fill="#404040"/><rect x="23.500" y="1.500" width="7" height="7" fill="#808080" stroke="#000"/><path d="M40 1.500l6 2v5q0 5-6 7q-6-2-6-7v-5z" fill="#f0d020" stroke="#806000"/><rect x="39.300" y="5" width="1.500" height="5" fill="#000"/><rect x="39.300" y="11" width="1.500" height="1.500" fill="#000"/><circle cx="57" cy="8" r="5" fill="#909090" stroke="#505050"/><circle cx="57" cy="8" r="2" fill="#404040"/><path d="M63.500 4q3 4 0 9" fill="none" stroke="#808080" stroke-width="1.200"/></svg><div class="t" style="left:987px;top:750px;">13:24</div></div></body></html>
